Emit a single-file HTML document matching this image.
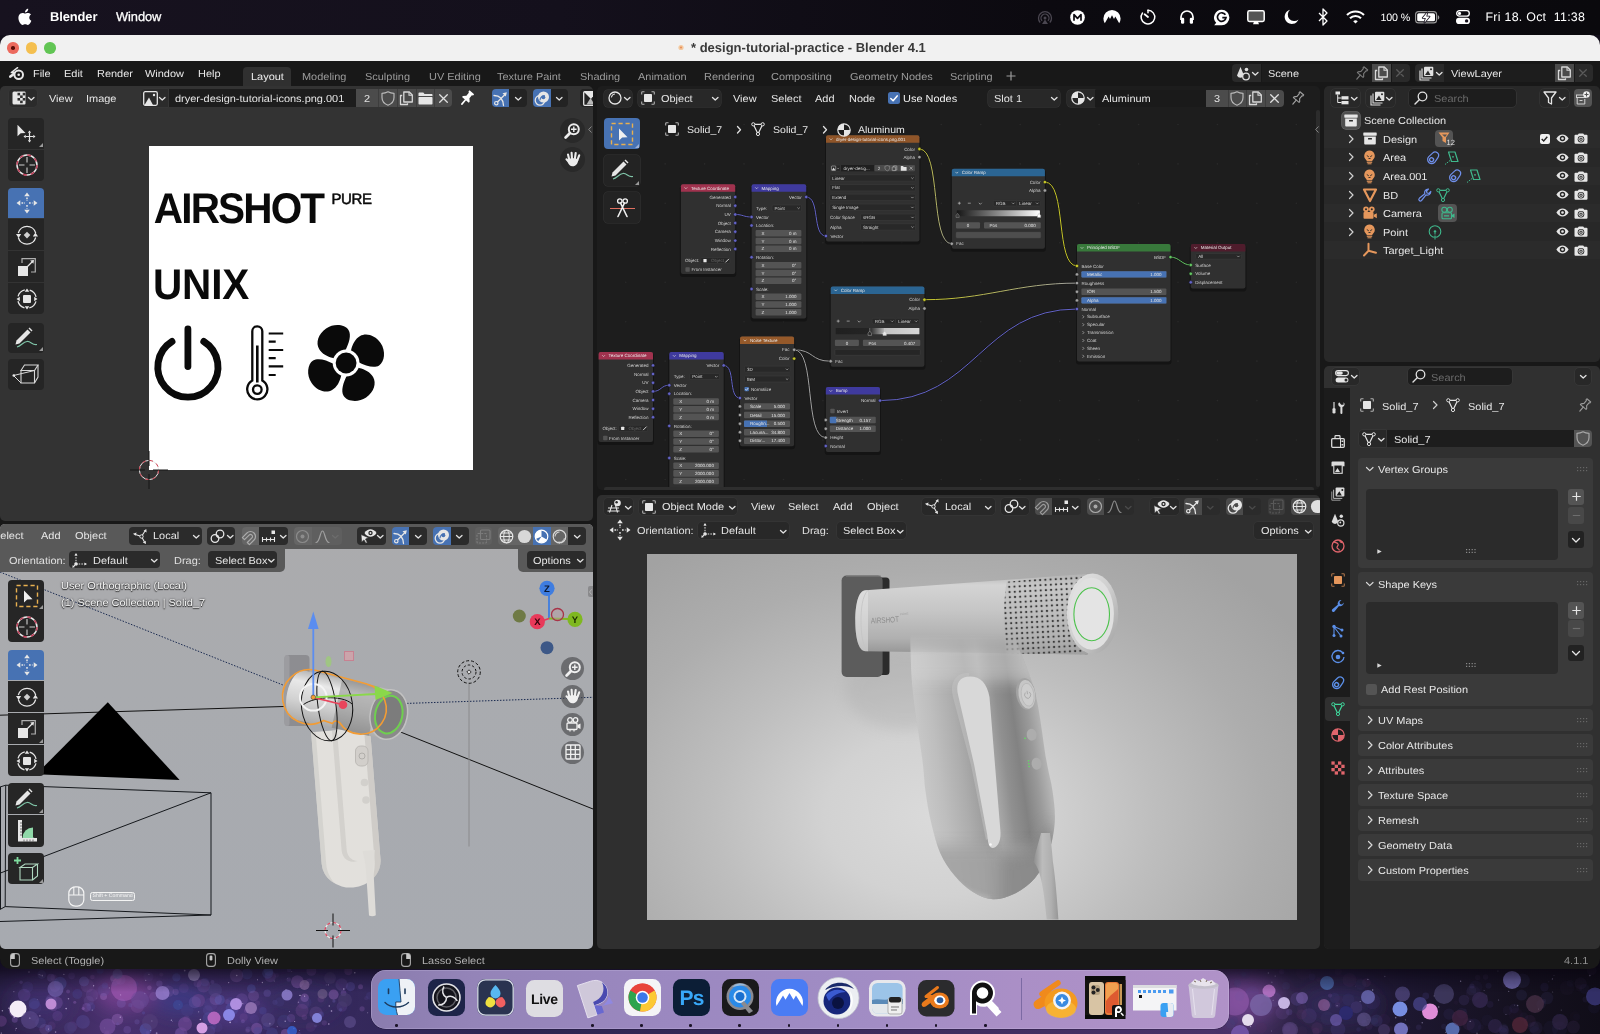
<!DOCTYPE html>
<html lang="en"><head><meta charset="utf-8"><title>design-tutorial-practice - Blender 4.1</title>
<style>
*{box-sizing:border-box;margin:0;padding:0}
html,body{width:1600px;height:1034px;overflow:hidden;background:#181818}
body{position:relative;font-family:"Liberation Sans",sans-serif;font-size:11px;color:#e0e0e0;text-rendering:geometricPrecision}
.a{position:absolute}
.t{position:absolute;white-space:nowrap;line-height:1}
.u{transform:scaleX(1.075);transform-origin:0 0}
svg{position:absolute;overflow:visible}
.area{position:absolute;overflow:hidden;border-radius:5px}
#root{position:absolute;left:0;top:0;width:1600px;height:1034px;will-change:transform}
</style></head><body><div id="root">

<!-- desktop wallpaper -->
<div class="a" id="wall" style="left:0;top:0;width:1600px;height:1034px;background:#120e1a"></div>
<!-- mac menu bar -->
<div class="a" id="macbar" style="left:0;top:0;width:1600px;height:35px;background:linear-gradient(90deg,#17121f 0%,#14101c 35%,#0c0a10 65%,#0a090d 100%)"></div>
<svg style="left:17px;top:8px" width="15" height="18" viewBox="0 0 15 18"><path fill="#fff" d="M12.3 9.5c0-2 1.6-2.9 1.7-3-0.9-1.4-2.4-1.6-2.9-1.6-1.2-.1-2.4.7-3 .7-.6 0-1.6-.7-2.6-.7C4.100 4.900 2.800 5.700 2.100 6.900.700 9.400 1.700 13 3.100 15c.7 1 1.500 2.100 2.500 2 1-.04 1.400-.65 2.600-.65s1.550.65 2.600.63c1.080-.02 1.760-.98 2.420-1.970.760-1.130 1.080-2.220 1.100-2.280-.03-.01-2.100-.8-2.120-3.230zM10.400 3.300c.55-.67.920-1.600.820-2.500-.790.030-1.750.530-2.320 1.190-.510.590-.950 1.530-.830 2.430.880.070 1.780-.450 2.330-1.120z"/></svg>
<div class="t" style="left:50px;top:11px;font-size:12.9px;font-weight:bold;color:#fff;letter-spacing:-.1px">Blender</div>
<div class="t" style="left:116px;top:11px;font-size:12.9px;color:#fff;letter-spacing:-.1px;-webkit-text-stroke:.25px #fff">Window</div>
<!-- status icons -->
<svg style="left:1037px;top:10px" width="16" height="15" viewBox="0 0 16 15" fill="none" stroke="#4a4650" stroke-width="1.3"><path d="M3.2 12.500A6.500 6.500 0 1 1 12.800 12.500"/><path d="M5.100 10.800A4 4 0 1 1 10.900 10.800"/><circle cx="8" cy="8" r="1.500" fill="#4a4650" stroke="none"/><path d="M8 9.500L11 14H5z" fill="#4a4650" stroke="none"/></svg>
<svg style="left:1070px;top:10px" width="15" height="15" viewBox="0 0 15 15"><circle cx="7.500" cy="7.500" r="7.300" fill="#fff"/><path d="M4 10.800V4.600L7.500 8.300 11 4.600v6.200" fill="none" stroke="#0c0a10" stroke-width="1.700" stroke-linejoin="round"/></svg>
<svg style="left:1103px;top:9px" width="18" height="15" viewBox="0 0 18 15"><path fill="#fff" d="M1.800 14.200A8.600 8.600 0 0 1 .4 9.500 8.600 8.600 0 0 1 9 .9a8.600 8.600 0 0 1 8.600 8.600 8.600 8.600 0 0 1-1.400 4.700L12.300 7.600 11 9.900 9 6.300 7 9.900 5.700 7.600z"/></svg>
<svg style="left:1140px;top:9px" width="16" height="16" viewBox="0 0 16 16" fill="none" stroke="#fff" stroke-width="1.500" stroke-linecap="round"><path d="M8 1.300A6.800 6.800 0 1 1 2.500 4"/><path d="M8 1.300v2.500"/><path d="M8 8L4.600 5.200" stroke-width="1.800"/></svg>
<svg style="left:1179px;top:9px" width="16" height="16" viewBox="0 0 16 16" fill="none" stroke="#fff"><path d="M2 11V8a6 6 0 0 1 12 0v3" stroke-width="1.700"/><rect x="2" y="8.800" width="3.200" height="6" rx="1.300" fill="#fff" stroke="none"/><rect x="10.800" y="8.800" width="3.200" height="6" rx="1.300" fill="#fff" stroke="none"/></svg>
<svg style="left:1213px;top:9px" width="17" height="17" viewBox="0 0 17 17"><path fill="#fff" d="M8.700.8a7.700 7.700 0 1 1 0 15.400H1.200l2-2.400A7.700 7.700 0 0 1 8.700.8z"/><path d="M12.400 5.800A4.300 4.300 0 1 0 13 8.700H9.300" fill="none" stroke="#0c0a10" stroke-width="1.700"/></svg>
<svg style="left:1247px;top:10px" width="18" height="15" viewBox="0 0 18 15"><rect x=".8" y=".8" width="16.400" height="10.600" rx="1.600" fill="#555" stroke="#fff" stroke-width="1.500"/><path d="M6 14.300h6l-1-2.600H7z" fill="#fff"/></svg>
<svg style="left:1284px;top:9px" width="15" height="16" viewBox="0 0 15 16"><path fill="#fff" d="M6 .8A7.200 7.200 0 1 0 14.500 10.500 6.400 6.400 0 0 1 6 .8z"/></svg>
<svg style="left:1318px;top:8px" width="10" height="18" viewBox="0 0 10 18" fill="none" stroke="#fff" stroke-width="1.300" stroke-linejoin="round"><path d="M1 5l8 8-4 4V1l4 4-8 8"/></svg>
<svg style="left:1346px;top:10px" width="19" height="14" viewBox="0 0 19 14" fill="none" stroke="#fff" stroke-width="2.100" stroke-linecap="butt"><path d="M1 5a12 12 0 0 1 17 0"/><path d="M4 8.200a7.800 7.800 0 0 1 11 0"/><path d="M7.200 11.300L9.500 13.600 11.800 11.300a3.300 3.300 0 0 0-4.600 0z" fill="#fff" stroke="none"/></svg>
<div class="t" style="left:1380.5px;top:13.2px;font-size:10.7px;color:#fff;letter-spacing:-.15px">100 %</div>
<svg style="left:1415px;top:11px" width="25" height="13" viewBox="0 0 25 13"><rect x=".6" y=".6" width="21" height="11.300" rx="3" fill="none" stroke="#9a9a9a" stroke-width="1.100"/><rect x="2.200" y="2.200" width="17.800" height="8.100" rx="1.600" fill="#fff"/><path d="M22.800 4.300v4.400c.9-.3 1.500-1.200 1.500-2.200s-.6-1.900-1.500-2.200z" fill="#9a9a9a"/><path d="M12.400 1.200L7.600 7h3.200l-1.400 4.800L14.600 5.600h-3.300z" fill="#16101c" stroke="#16101c" stroke-width="1.600" stroke-linejoin="round"/><path d="M12.400 1.200L7.600 7h3.200l-1.400 4.800L14.600 5.600h-3.300z" fill="#fff"/></svg>
<svg style="left:1456px;top:10px" width="14" height="14" viewBox="0 0 14 14"><rect x=".7" y=".7" width="12.600" height="5.400" rx="2.700" fill="none" stroke="#fff" stroke-width="1.300"/><circle cx="3.500" cy="3.400" r="1.600" fill="#fff"/><rect x="0" y="7.800" width="14" height="6.200" rx="3.100" fill="#fff"/><circle cx="10.600" cy="10.900" r="1.700" fill="#16101c"/></svg>
<div class="t" style="left:1485.5px;top:11.4px;font-size:12.4px;color:#fff;letter-spacing:.27px">Fri 18. Oct&nbsp; 11:38</div>
<!-- window title bar -->
<div class="a" id="titlebar" style="left:0;top:35px;width:1600px;height:27px;background:#f1f1f1;border-radius:10px 10px 0 0"></div>
<div class="a" style="left:7.4px;top:42.3px;width:11.4px;height:11.4px;border-radius:50%;background:#ec6a5e"></div>
<div class="a" style="left:11.3px;top:46.2px;width:3.6px;height:3.6px;border-radius:50%;background:#5a0d08"></div>
<div class="a" style="left:25.7px;top:42.3px;width:11.4px;height:11.4px;border-radius:50%;background:#f4bf4f"></div>
<div class="a" style="left:44.3px;top:42.3px;width:11.4px;height:11.4px;border-radius:50%;background:#61c554"></div>
<svg style="left:676px;top:42px" width="10" height="10" viewBox="0 0 10 10"><circle cx="5" cy="5.500" r="2.600" fill="#f3c9a0"/><circle cx="5" cy="5.500" r="1.100" fill="#e8905a"/></svg>
<div class="t" id="title" style="left:691px;top:41px;font-size:13px;font-weight:bold;color:#3a3a3a">* design-tutorial-practice - Blender 4.1</div>

<!-- wallpaper strip -->
<div class="a" style="left:0;top:958px;width:1600px;height:76px;overflow:hidden;z-index:0;background:linear-gradient(90deg,#2b2148 0%,#4a3270 7%,#3b2c62 14%,#35295c 22%,#2c2450 32%,#3a2a5a 50%,#4a3268 77%,#2e2446 81%,#1d1730 88%,#15111f 95%,#100d18 100%)">
<svg style="left:0;top:0" width="1600" height="76" viewBox="0 958 1600 76"><defs><filter id="gl" x="-50%" y="-50%" width="200%" height="200%"><feGaussianBlur stdDeviation="9"/></filter></defs><g filter="url(#gl)"><ellipse cx="125" cy="992" rx="30" ry="18" fill="#9a4aa8" opacity=".5"/><ellipse cx="180" cy="1000" rx="28" ry="16" fill="#3a48a0" opacity=".45"/><ellipse cx="235" cy="1012" rx="30" ry="16" fill="#6a4ab0" opacity=".4"/><ellipse cx="40" cy="1005" rx="30" ry="20" fill="#4a3a88" opacity=".4"/><ellipse cx="300" cy="1000" rx="40" ry="20" fill="#3a2e68" opacity=".4"/><ellipse cx="1250" cy="1000" rx="30" ry="22" fill="#8a50a8" opacity=".5"/><ellipse cx="1340" cy="1005" rx="40" ry="20" fill="#3a3070" opacity=".4"/></g><circle cx="120.47" cy="979.65" r="5.08" fill="#7a5cb0" opacity="0.35"/><circle cx="35.02" cy="1007.3" r="6.5" fill="#5a50a0" opacity="0.13"/><circle cx="161.32" cy="974.47" r="2" fill="#a070c0" opacity="0.14"/><circle cx="210.35" cy="1030.64" r="4.97" fill="#6a58a8" opacity="0.28"/><circle cx="147.57" cy="1032.48" r="1.76" fill="#8a60b8" opacity="0.2"/><circle cx="53.66" cy="977.54" r="3.2" fill="#8a60b8" opacity="0.15"/><circle cx="212.49" cy="982.02" r="2.04" fill="#7a5cb0" opacity="0.28"/><circle cx="230.27" cy="1001.77" r="4.42" fill="#4a4898" opacity="0.25"/><circle cx="343.52" cy="993.14" r="2.87" fill="#8a60b8" opacity="0.32"/><circle cx="90.8" cy="1006.76" r="4.39" fill="#4a4898" opacity="0.32"/><circle cx="107.11" cy="1032.73" r="2.15" fill="#a070c0" opacity="0.17"/><circle cx="127.24" cy="1029.73" r="3.82" fill="#7a5cb0" opacity="0.33"/><circle cx="213.17" cy="1026.03" r="3.23" fill="#4a4898" opacity="0.29"/><circle cx="215.72" cy="999.2" r="6.12" fill="#9a6ac0" opacity="0.25"/><circle cx="247.06" cy="973.88" r="5.36" fill="#5c6ac8" opacity="0.2"/><circle cx="143.51" cy="1012.79" r="1.62" fill="#5c6ac8" opacity="0.22"/><circle cx="227.26" cy="1001.6" r="2.7" fill="#9a6ac0" opacity="0.16"/><circle cx="92.11" cy="995.02" r="6.29" fill="#7a5cb0" opacity="0.17"/><circle cx="149.41" cy="987.78" r="2.25" fill="#a070c0" opacity="0.36"/><circle cx="103.57" cy="996.58" r="3.47" fill="#a070c0" opacity="0.39"/><circle cx="56.14" cy="981.28" r="2.78" fill="#5a50a0" opacity="0.12"/><circle cx="309.17" cy="981.67" r="3.05" fill="#8a60b8" opacity="0.24"/><circle cx="137.36" cy="1006.25" r="6.74" fill="#7c4c98" opacity="0.39"/><circle cx="243.65" cy="1017.35" r="4.01" fill="#7c4c98" opacity="0.23"/><circle cx="148.42" cy="976.63" r="4.99" fill="#6a58a8" opacity="0.17"/><circle cx="366.3" cy="998.2" r="2.1" fill="#6a58a8" opacity="0.15"/><circle cx="210.84" cy="1004.34" r="6.72" fill="#6a58a8" opacity="0.14"/><circle cx="77.36" cy="994.08" r="4.99" fill="#4a4898" opacity="0.29"/><circle cx="176.38" cy="977.38" r="4.18" fill="#5c6ac8" opacity="0.25"/><circle cx="116.01" cy="979.22" r="5.62" fill="#9a6ac0" opacity="0.25"/><circle cx="257.45" cy="1003.05" r="2.63" fill="#7c4c98" opacity="0.22"/><circle cx="256.71" cy="1028.51" r="5.67" fill="#9a6ac0" opacity="0.39"/><circle cx="321.16" cy="1014.56" r="2.94" fill="#4a4898" opacity="0.37"/><circle cx="132.32" cy="984.26" r="4.48" fill="#7c4c98" opacity="0.21"/><circle cx="82.97" cy="1021.94" r="6.92" fill="#5a50a0" opacity="0.35"/><circle cx="304.42" cy="1017.35" r="2.75" fill="#7c4c98" opacity="0.26"/><circle cx="271.93" cy="1033.33" r="5.85" fill="#5c6ac8" opacity="0.19"/><circle cx="257.62" cy="1031.22" r="3.96" fill="#4a4898" opacity="0.39"/><circle cx="135.64" cy="984.11" r="2.75" fill="#5a50a0" opacity="0.21"/><circle cx="179.55" cy="1033.06" r="4.86" fill="#6a58a8" opacity="0.25"/><circle cx="242.91" cy="1021.18" r="1.97" fill="#7a5cb0" opacity="0.37"/><circle cx="291.02" cy="1018.01" r="4.13" fill="#8a60b8" opacity="0.24"/><circle cx="236.53" cy="975.55" r="6.7" fill="#a070c0" opacity="0.25"/><circle cx="276.53" cy="975.43" r="2.37" fill="#8a60b8" opacity="0.13"/><circle cx="219.78" cy="999.78" r="5.11" fill="#5c6ac8" opacity="0.3"/><circle cx="130.35" cy="1005.11" r="2.22" fill="#6a58a8" opacity="0.34"/><circle cx="270.21" cy="976.58" r="5.62" fill="#8a60b8" opacity="0.24"/><circle cx="324.29" cy="1022.87" r="2.66" fill="#9a6ac0" opacity="0.18"/><circle cx="186.43" cy="1018.88" r="3.29" fill="#7c4c98" opacity="0.24"/><circle cx="48.76" cy="1028.24" r="3.45" fill="#5c6ac8" opacity="0.31"/><circle cx="303.2" cy="1003.07" r="6.05" fill="#7c4c98" opacity="0.16"/><circle cx="56.48" cy="1002.68" r="6.3" fill="#8a60b8" opacity="0.29"/><circle cx="288.69" cy="979.59" r="2.28" fill="#7a5cb0" opacity="0.28"/><circle cx="121.27" cy="1003.17" r="4.55" fill="#7a5cb0" opacity="0.37"/><circle cx="21.14" cy="982.24" r="1.73" fill="#7a5cb0" opacity="0.26"/><circle cx="208.96" cy="1018.64" r="6.52" fill="#5c6ac8" opacity="0.21"/><circle cx="362.09" cy="1008.79" r="2.6" fill="#9a6ac0" opacity="0.25"/><circle cx="198.38" cy="1000.59" r="6.68" fill="#7c4c98" opacity="0.37"/><circle cx="350.49" cy="986.61" r="4.58" fill="#5a50a0" opacity="0.36"/><circle cx="51.01" cy="977.78" r="3.93" fill="#7a5cb0" opacity="0.31"/><circle cx="159.34" cy="983.61" r="3.17" fill="#7a5cb0" opacity="0.37"/><circle cx="57.45" cy="1015.83" r="5.13" fill="#8a60b8" opacity="0.19"/><circle cx="51.06" cy="999.94" r="5.61" fill="#7a5cb0" opacity="0.23"/><circle cx="181.26" cy="1033.35" r="6.08" fill="#8a60b8" opacity="0.32"/><circle cx="369.8" cy="995.84" r="3.82" fill="#4a4898" opacity="0.21"/><circle cx="268.64" cy="971.25" r="4.55" fill="#5c6ac8" opacity="0.32"/><circle cx="142.98" cy="1003.12" r="3.12" fill="#7a5cb0" opacity="0.15"/><circle cx="341.7" cy="984.63" r="6.32" fill="#7a5cb0" opacity="0.19"/><circle cx="14.73" cy="1019.86" r="2.99" fill="#8a60b8" opacity="0.35"/><circle cx="316.05" cy="1013.26" r="6.7" fill="#a070c0" opacity="0.16"/><circle cx="341.93" cy="1006.52" r="5.35" fill="#7a5cb0" opacity="0.2"/><circle cx="297.45" cy="981.73" r="6.42" fill="#9a6ac0" opacity="0.38"/><circle cx="236.01" cy="1021.3" r="1.96" fill="#5a50a0" opacity="0.14"/><circle cx="320.95" cy="999.04" r="3.37" fill="#7c4c98" opacity="0.24"/><circle cx="340.54" cy="1009.79" r="1.74" fill="#5a50a0" opacity="0.38"/><circle cx="360.55" cy="986.76" r="2.5" fill="#9a6ac0" opacity="0.3"/><circle cx="197.56" cy="983.18" r="3.95" fill="#8a60b8" opacity="0.2"/><circle cx="298.97" cy="1033.65" r="1.7" fill="#6a58a8" opacity="0.33"/><circle cx="204.99" cy="982.13" r="4.11" fill="#5c6ac8" opacity="0.15"/><circle cx="304.64" cy="997.66" r="4.22" fill="#a070c0" opacity="0.39"/><circle cx="114.5" cy="983.77" r="2.76" fill="#5a50a0" opacity="0.35"/><circle cx="262.9" cy="1010.7" r="3.73" fill="#4a4898" opacity="0.39"/><circle cx="311.36" cy="970.91" r="4.94" fill="#9a6ac0" opacity="0.24"/><circle cx="20.61" cy="1012.57" r="3.59" fill="#7c4c98" opacity="0.31"/><circle cx="104.88" cy="985.5" r="3.11" fill="#5c6ac8" opacity="0.17"/><circle cx="100.08" cy="970.23" r="3.5" fill="#4a4898" opacity="0.39"/><circle cx="203.51" cy="985.64" r="6.81" fill="#9a6ac0" opacity="0.18"/><circle cx="68.06" cy="991.46" r="1.96" fill="#9a6ac0" opacity="0.26"/><circle cx="74.76" cy="1002.3" r="1.53" fill="#9a6ac0" opacity="0.35"/><circle cx="53.52" cy="1007.56" r="3.67" fill="#9a6ac0" opacity="0.21"/><circle cx="86.61" cy="1007.48" r="4.41" fill="#8a60b8" opacity="0.3"/><circle cx="266.35" cy="1026.26" r="3.64" fill="#4a4898" opacity="0.32"/><circle cx="183.84" cy="988.19" r="4.9" fill="#8a60b8" opacity="0.13"/><circle cx="310.73" cy="1027.08" r="4.95" fill="#7c4c98" opacity="0.16"/><circle cx="194.84" cy="1002.28" r="6.09" fill="#6a58a8" opacity="0.35"/><circle cx="217.27" cy="1027.14" r="5.26" fill="#5a50a0" opacity="0.14"/><circle cx="15.57" cy="1010.78" r="6.78" fill="#a070c0" opacity="0.35"/><circle cx="207.77" cy="1010.18" r="4.94" fill="#5a50a0" opacity="0.26"/><circle cx="1.23" cy="1021.05" r="5.62" fill="#7c4c98" opacity="0.37"/><circle cx="34.2" cy="1003.66" r="5.6" fill="#5c6ac8" opacity="0.19"/><circle cx="27.7" cy="987" r="5.51" fill="#5a50a0" opacity="0.18"/><circle cx="241.77" cy="999.46" r="6.15" fill="#7a5cb0" opacity="0.25"/><circle cx="254.34" cy="1019.09" r="4.89" fill="#5a50a0" opacity="0.14"/><circle cx="54.84" cy="986.25" r="5.59" fill="#9a6ac0" opacity="0.29"/><circle cx="49.64" cy="1000.87" r="4.17" fill="#7a5cb0" opacity="0.31"/><circle cx="251.36" cy="988.61" r="4.34" fill="#5c6ac8" opacity="0.25"/><circle cx="285.39" cy="1033.57" r="4.52" fill="#9a6ac0" opacity="0.39"/><circle cx="348.29" cy="971.12" r="4.02" fill="#7c4c98" opacity="0.39"/><circle cx="167.2" cy="987.19" r="2.65" fill="#5a50a0" opacity="0.14"/><circle cx="33.59" cy="1017.84" r="2.94" fill="#4a4898" opacity="0.16"/><circle cx="305.12" cy="1002.56" r="6.38" fill="#4a4898" opacity="0.18"/><circle cx="333.95" cy="1001.11" r="1.64" fill="#6a58a8" opacity="0.39"/><circle cx="253.55" cy="995.95" r="5.5" fill="#a070c0" opacity="0.22"/><circle cx="117.58" cy="1023.77" r="1.51" fill="#4a4898" opacity="0.35"/><circle cx="44.66" cy="1029.29" r="5.42" fill="#9a6ac0" opacity="0.19"/><circle cx="24.17" cy="994.97" r="6.28" fill="#7a5cb0" opacity="0.22"/><circle cx="159.24" cy="987.61" r="1.77" fill="#7a5cb0" opacity="0.13"/><circle cx="246.26" cy="1010.64" r="2.32" fill="#9a6ac0" opacity="0.24"/><circle cx="117.4" cy="1019.48" r="5.82" fill="#a070c0" opacity="0.37"/><circle cx="302.05" cy="1010.38" r="6.52" fill="#7c4c98" opacity="0.27"/><circle cx="267.68" cy="973.17" r="5.53" fill="#5c6ac8" opacity="0.29"/><circle cx="51.55" cy="1025.65" r="4.17" fill="#7c4c98" opacity="0.16"/><circle cx="175.65" cy="991.99" r="3.14" fill="#9a6ac0" opacity="0.23"/><circle cx="88.78" cy="1000.92" r="5.18" fill="#7a5cb0" opacity="0.17"/><circle cx="60.14" cy="983.3" r="6.48" fill="#5c6ac8" opacity="0.27"/><circle cx="168.51" cy="991.3" r="5.68" fill="#a070c0" opacity="0.16"/><circle cx="71.58" cy="975.81" r="3.38" fill="#7a5cb0" opacity="0.21"/><circle cx="137.01" cy="1021.8" r="2.61" fill="#6a58a8" opacity="0.33"/><circle cx="153.55" cy="996.49" r="4.38" fill="#a070c0" opacity="0.2"/><circle cx="279.79" cy="1001.88" r="4.66" fill="#4a4898" opacity="0.16"/><circle cx="187.26" cy="1010.3" r="6.25" fill="#5a50a0" opacity="0.15"/><circle cx="333.61" cy="994.61" r="5.05" fill="#a070c0" opacity="0.39"/><circle cx="315.71" cy="1025.87" r="1.62" fill="#6a58a8" opacity="0.24"/><circle cx="284.09" cy="1021.47" r="6.83" fill="#5c6ac8" opacity="0.12"/><circle cx="145.65" cy="1029.32" r="6.04" fill="#5c6ac8" opacity="0.39"/><circle cx="92.43" cy="976.98" r="2.35" fill="#7c4c98" opacity="0.39"/><circle cx="40.51" cy="1022.83" r="5.36" fill="#5c6ac8" opacity="0.14"/><circle cx="288.99" cy="970.09" r="2.19" fill="#6a58a8" opacity="0.3"/><circle cx="113.01" cy="978.19" r="2.88" fill="#a070c0" opacity="0.32"/><circle cx="41.71" cy="974.5" r="4.38" fill="#5a50a0" opacity="0.23"/><circle cx="83.17" cy="1008.47" r="1.56" fill="#9a6ac0" opacity="0.4"/><circle cx="103.64" cy="990.25" r="6.12" fill="#5a50a0" opacity="0.25"/><circle cx="87.33" cy="985.81" r="6.78" fill="#9a6ac0" opacity="0.14"/><circle cx="72.21" cy="1026.63" r="5.06" fill="#7a5cb0" opacity="0.19"/><circle cx="248.26" cy="1029.21" r="2.75" fill="#6a58a8" opacity="0.31"/><circle cx="267.22" cy="993.19" r="3.68" fill="#6a58a8" opacity="0.34"/><circle cx="274.96" cy="1002.31" r="2.63" fill="#5a50a0" opacity="0.21"/><circle cx="305.04" cy="984.77" r="2.72" fill="#9a6ac0" opacity="0.15"/><circle cx="231.98" cy="1009.05" r="6.43" fill="#5c6ac8" opacity="0.24"/><circle cx="247.49" cy="1030.72" r="2.31" fill="#a070c0" opacity="0.14"/><circle cx="8.79" cy="1008.15" r="0.61" fill="#d8c8f0" opacity="0.75"/><circle cx="68.49" cy="998.78" r="0.76" fill="#d8c8f0" opacity="0.56"/><circle cx="42.11" cy="975.08" r="0.48" fill="#d8c8f0" opacity="0.5"/><circle cx="242.72" cy="1003.59" r="0.63" fill="#d8c8f0" opacity="0.56"/><circle cx="269.84" cy="1023.7" r="0.89" fill="#d8c8f0" opacity="0.62"/><circle cx="40.53" cy="975.01" r="0.44" fill="#d8c8f0" opacity="0.61"/><circle cx="329.28" cy="1005.91" r="0.78" fill="#d8c8f0" opacity="0.59"/><circle cx="285.97" cy="989.76" r="0.8" fill="#d8c8f0" opacity="0.44"/><circle cx="262.36" cy="982.53" r="0.67" fill="#d8c8f0" opacity="0.62"/><circle cx="120.27" cy="1017.19" r="0.64" fill="#d8c8f0" opacity="0.72"/><circle cx="92.26" cy="1010.03" r="0.6" fill="#d8c8f0" opacity="0.59"/><circle cx="172.63" cy="1021.41" r="0.43" fill="#d8c8f0" opacity="0.5"/><circle cx="23.38" cy="1008.76" r="0.58" fill="#d8c8f0" opacity="0.57"/><circle cx="354.8" cy="972.79" r="0.77" fill="#d8c8f0" opacity="0.74"/><circle cx="343.81" cy="989.03" r="0.76" fill="#d8c8f0" opacity="0.7"/><circle cx="299.7" cy="1030.58" r="0.43" fill="#d8c8f0" opacity="0.81"/><circle cx="39.9" cy="1015.8" r="0.63" fill="#d8c8f0" opacity="0.79"/><circle cx="293.81" cy="1028.47" r="0.81" fill="#d8c8f0" opacity="0.47"/><circle cx="184.71" cy="970.56" r="0.87" fill="#d8c8f0" opacity="0.55"/><circle cx="257.46" cy="979.68" r="0.52" fill="#d8c8f0" opacity="0.83"/><circle cx="171.41" cy="1020.17" r="0.7" fill="#d8c8f0" opacity="0.66"/><circle cx="145.71" cy="980.24" r="0.6" fill="#d8c8f0" opacity="0.72"/><circle cx="179.19" cy="1004.86" r="0.48" fill="#d8c8f0" opacity="0.61"/><circle cx="39.14" cy="974.62" r="0.71" fill="#d8c8f0" opacity="0.5"/><circle cx="156.63" cy="1033.26" r="0.89" fill="#d8c8f0" opacity="0.49"/><circle cx="49.45" cy="999.5" r="0.85" fill="#d8c8f0" opacity="0.52"/><circle cx="200.35" cy="1019.53" r="0.78" fill="#d8c8f0" opacity="0.79"/><circle cx="109.34" cy="987.88" r="0.53" fill="#d8c8f0" opacity="0.53"/><circle cx="96.84" cy="998.12" r="0.49" fill="#d8c8f0" opacity="0.52"/><circle cx="104.66" cy="1028.08" r="0.49" fill="#d8c8f0" opacity="0.43"/><circle cx="93.62" cy="985.74" r="0.66" fill="#d8c8f0" opacity="0.72"/><circle cx="37.4" cy="999.69" r="0.42" fill="#d8c8f0" opacity="0.4"/><circle cx="328.41" cy="984.79" r="0.62" fill="#d8c8f0" opacity="0.59"/><circle cx="326.2" cy="984.91" r="0.43" fill="#d8c8f0" opacity="0.7"/><circle cx="307.99" cy="982.43" r="0.44" fill="#d8c8f0" opacity="0.66"/><circle cx="66.13" cy="1008.59" r="0.79" fill="#d8c8f0" opacity="0.73"/><circle cx="2.36" cy="1010.8" r="0.75" fill="#d8c8f0" opacity="0.57"/><circle cx="13.93" cy="991.76" r="0.42" fill="#d8c8f0" opacity="0.9"/><circle cx="14.22" cy="1016.86" r="0.86" fill="#d8c8f0" opacity="0.81"/><circle cx="304.61" cy="996.18" r="0.59" fill="#d8c8f0" opacity="0.71"/><circle cx="28.99" cy="972.01" r="0.65" fill="#d8c8f0" opacity="0.64"/><circle cx="151.84" cy="1020.93" r="0.73" fill="#d8c8f0" opacity="0.48"/><circle cx="198.65" cy="1011.8" r="0.6" fill="#d8c8f0" opacity="0.54"/><circle cx="367.62" cy="1012.74" r="0.61" fill="#d8c8f0" opacity="0.43"/><circle cx="277.27" cy="1026.56" r="0.61" fill="#d8c8f0" opacity="0.41"/><circle cx="285.2" cy="1021.34" r="0.72" fill="#d8c8f0" opacity="0.6"/><circle cx="150.65" cy="1030.29" r="0.62" fill="#d8c8f0" opacity="0.48"/><circle cx="42.24" cy="975.79" r="0.69" fill="#d8c8f0" opacity="0.58"/><circle cx="287.58" cy="978.32" r="0.43" fill="#d8c8f0" opacity="0.47"/><circle cx="300.01" cy="995.39" r="0.69" fill="#d8c8f0" opacity="0.86"/><circle cx="274.26" cy="980.99" r="0.57" fill="#d8c8f0" opacity="0.48"/><circle cx="63.9" cy="974.29" r="0.59" fill="#d8c8f0" opacity="0.78"/><circle cx="294.68" cy="1021.5" r="0.55" fill="#d8c8f0" opacity="0.82"/><circle cx="16.18" cy="1028.42" r="0.56" fill="#d8c8f0" opacity="0.7"/><circle cx="236.73" cy="975.52" r="0.76" fill="#d8c8f0" opacity="0.74"/><circle cx="331.5" cy="1010.98" r="0.83" fill="#d8c8f0" opacity="0.71"/><circle cx="228.68" cy="982.55" r="0.64" fill="#d8c8f0" opacity="0.68"/><circle cx="15.52" cy="1030.07" r="0.48" fill="#d8c8f0" opacity="0.58"/><circle cx="55.6" cy="1032.12" r="0.81" fill="#d8c8f0" opacity="0.5"/><circle cx="328.8" cy="1023.92" r="0.74" fill="#d8c8f0" opacity="0.73"/><circle cx="120.6" cy="994.95" r="0.63" fill="#d8c8f0" opacity="0.82"/><circle cx="289.45" cy="1011.54" r="0.55" fill="#d8c8f0" opacity="0.52"/><circle cx="144.79" cy="993.52" r="0.65" fill="#d8c8f0" opacity="0.49"/><circle cx="1.31" cy="1033.11" r="0.63" fill="#d8c8f0" opacity="0.62"/><circle cx="230.11" cy="1022.41" r="0.82" fill="#d8c8f0" opacity="0.81"/><circle cx="148.93" cy="974.3" r="0.58" fill="#d8c8f0" opacity="0.58"/><circle cx="298.45" cy="1002.28" r="0.73" fill="#d8c8f0" opacity="0.42"/><circle cx="48.46" cy="1029.02" r="0.56" fill="#d8c8f0" opacity="0.76"/><circle cx="29.75" cy="1018.13" r="0.85" fill="#d8c8f0" opacity="0.73"/><circle cx="291.74" cy="971.65" r="0.43" fill="#d8c8f0" opacity="0.71"/><circle cx="1485.63" cy="977.01" r="2.79" fill="#6a4a90" opacity="0.1"/><circle cx="1529.69" cy="1020.88" r="6.12" fill="#503060" opacity="0.15"/><circle cx="1252.37" cy="992.46" r="6.54" fill="#5a4890" opacity="0.19"/><circle cx="1456.23" cy="1027.92" r="4.74" fill="#3c3878" opacity="0.14"/><circle cx="1570.21" cy="983.33" r="3.58" fill="#44447c" opacity="0.06"/><circle cx="1366.48" cy="982.73" r="4.42" fill="#503060" opacity="0.27"/><circle cx="1480.84" cy="1027.31" r="3.01" fill="#3c3878" opacity="0.08"/><circle cx="1425.43" cy="1010.72" r="4.16" fill="#6a4a90" opacity="0.16"/><circle cx="1443.78" cy="1026.48" r="2.63" fill="#44447c" opacity="0.17"/><circle cx="1374.66" cy="1021.05" r="3.59" fill="#3c3878" opacity="0.19"/><circle cx="1362.01" cy="1018.94" r="4.65" fill="#5a4890" opacity="0.21"/><circle cx="1584.37" cy="988.97" r="5.1" fill="#3c3878" opacity="0.09"/><circle cx="1594.07" cy="1007.5" r="5.98" fill="#3c3878" opacity="0.09"/><circle cx="1505.93" cy="984.18" r="3.75" fill="#503060" opacity="0.11"/><circle cx="1418.72" cy="1027.31" r="2.79" fill="#5a4890" opacity="0.18"/><circle cx="1244.96" cy="973.48" r="5.4" fill="#3c3878" opacity="0.14"/><circle cx="1360.86" cy="984.35" r="5.5" fill="#44447c" opacity="0.12"/><circle cx="1364.24" cy="1023.02" r="2.95" fill="#4a4088" opacity="0.27"/><circle cx="1318.61" cy="979.56" r="2.57" fill="#503060" opacity="0.13"/><circle cx="1475.56" cy="987.26" r="6.87" fill="#4a4088" opacity="0.07"/><circle cx="1533.37" cy="1027.13" r="5.57" fill="#44447c" opacity="0.1"/><circle cx="1576.62" cy="1016.95" r="3.49" fill="#4a4088" opacity="0.04"/><circle cx="1425.73" cy="995.98" r="3.43" fill="#4a4088" opacity="0.22"/><circle cx="1267.03" cy="1009.21" r="5.94" fill="#5a4890" opacity="0.15"/><circle cx="1302.22" cy="1008.92" r="5.04" fill="#503060" opacity="0.2"/><circle cx="1456.1" cy="1002.55" r="2.38" fill="#503060" opacity="0.07"/><circle cx="1558.84" cy="1020.11" r="6.29" fill="#4a4088" opacity="0.08"/><circle cx="1390.43" cy="1028.38" r="2.48" fill="#503060" opacity="0.16"/><circle cx="1312.05" cy="976.74" r="3.39" fill="#4a4088" opacity="0.13"/><circle cx="1559.55" cy="1029.21" r="7.66" fill="#3c3878" opacity="0.11"/><circle cx="1326.95" cy="1005.44" r="4.62" fill="#44447c" opacity="0.3"/><circle cx="1337.97" cy="1029.43" r="7.37" fill="#4a4088" opacity="0.28"/><circle cx="1233.66" cy="986.66" r="3.42" fill="#503060" opacity="0.17"/><circle cx="1287.22" cy="1028.56" r="3.15" fill="#6a4a90" opacity="0.18"/><circle cx="1316.97" cy="1028.08" r="5.78" fill="#503060" opacity="0.31"/><circle cx="1541.05" cy="1004.33" r="4.83" fill="#44447c" opacity="0.12"/><circle cx="1547" cy="997.98" r="6.35" fill="#44447c" opacity="0.14"/><circle cx="1521.58" cy="995.06" r="5.51" fill="#44447c" opacity="0.16"/><circle cx="1281.79" cy="971.72" r="2.64" fill="#5a4890" opacity="0.19"/><circle cx="1280.77" cy="971.84" r="2.25" fill="#503060" opacity="0.26"/><circle cx="1243.86" cy="974.34" r="2.28" fill="#44447c" opacity="0.31"/><circle cx="1302.14" cy="1031.09" r="5.2" fill="#503060" opacity="0.12"/><circle cx="1550.82" cy="1028.52" r="7.67" fill="#4a4088" opacity="0.07"/><circle cx="1303.58" cy="972.17" r="7.7" fill="#503060" opacity="0.12"/><circle cx="1507.53" cy="1010.46" r="4.86" fill="#5a4890" opacity="0.07"/><circle cx="1509.74" cy="983.12" r="3.91" fill="#6a4a90" opacity="0.09"/><circle cx="1358.54" cy="1029.53" r="2.29" fill="#3c3878" opacity="0.27"/><circle cx="1514.16" cy="1008.53" r="4.86" fill="#3c3878" opacity="0.13"/><circle cx="1239.53" cy="996.43" r="4.62" fill="#4a4088" opacity="0.21"/><circle cx="1490.13" cy="1004.42" r="3.3" fill="#4a4088" opacity="0.13"/><circle cx="1334.8" cy="997.91" r="5.14" fill="#3c3878" opacity="0.25"/><circle cx="1591.77" cy="970.28" r="4.94" fill="#6a4a90" opacity="0.09"/><circle cx="1535.03" cy="1031.9" r="5.56" fill="#44447c" opacity="0.08"/><circle cx="1579.12" cy="988.16" r="3.29" fill="#503060" opacity="0.06"/><circle cx="1289.67" cy="1030.08" r="6.6" fill="#6a4a90" opacity="0.29"/><circle cx="1487.34" cy="1020.36" r="5.77" fill="#3c3878" opacity="0.07"/><circle cx="1573.4" cy="1027.08" r="6.47" fill="#6a4a90" opacity="0.12"/><circle cx="1237.36" cy="983.19" r="3.58" fill="#44447c" opacity="0.25"/><circle cx="1369.1" cy="1026.57" r="3.4" fill="#6a4a90" opacity="0.11"/><circle cx="1449" cy="1014.11" r="5.63" fill="#4a4088" opacity="0.12"/><circle cx="1349.52" cy="979.94" r="7.06" fill="#503060" opacity="0.2"/><circle cx="1348.28" cy="999.64" r="6.13" fill="#3c3878" opacity="0.21"/><circle cx="1274.89" cy="999.57" r="7.31" fill="#5a4890" opacity="0.23"/><circle cx="1327.5" cy="1018.3" r="6.96" fill="#44447c" opacity="0.13"/><circle cx="1286.03" cy="985.85" r="3.96" fill="#44447c" opacity="0.19"/><circle cx="1315.87" cy="1031.17" r="3.55" fill="#503060" opacity="0.31"/><circle cx="1289.23" cy="1012.11" r="3.17" fill="#5a4890" opacity="0.33"/><circle cx="1523.7" cy="1016.93" r="4.61" fill="#5a4890" opacity="0.06"/><circle cx="1567.04" cy="987.97" r="7.31" fill="#6a4a90" opacity="0.04"/><circle cx="1376.44" cy="1020.62" r="6.16" fill="#44447c" opacity="0.27"/><circle cx="1338.19" cy="971.42" r="3.54" fill="#503060" opacity="0.18"/><circle cx="1503.63" cy="1028.11" r="4.58" fill="#44447c" opacity="0.13"/><circle cx="1468.76" cy="1024.14" r="6.01" fill="#503060" opacity="0.19"/><circle cx="1515.95" cy="1014.81" r="7.11" fill="#503060" opacity="0.07"/><circle cx="1274.21" cy="997.68" r="3.56" fill="#503060" opacity="0.13"/><circle cx="1384.08" cy="1020.07" r="6.28" fill="#503060" opacity="0.11"/><circle cx="1543.99" cy="1000.9" r="2.12" fill="#6a4a90" opacity="0.1"/><circle cx="1473.93" cy="1025.87" r="7.37" fill="#3c3878" opacity="0.17"/><circle cx="1372.6" cy="1001.35" r="7.85" fill="#4a4088" opacity="0.13"/><circle cx="1309.05" cy="1015.84" r="7.71" fill="#5a4890" opacity="0.22"/><circle cx="1265.6" cy="1006.77" r="5.25" fill="#503060" opacity="0.23"/><circle cx="1233.99" cy="1020.72" r="4.22" fill="#3c3878" opacity="0.22"/><circle cx="1580.65" cy="983.45" r="6.11" fill="#6a4a90" opacity="0.08"/><circle cx="1574.96" cy="1016.66" r="5.68" fill="#503060" opacity="0.04"/><circle cx="1330.06" cy="995.58" r="2.08" fill="#6a4a90" opacity="0.29"/><circle cx="1461.83" cy="1013.19" r="5.48" fill="#4a4088" opacity="0.1"/><circle cx="1503.83" cy="1030.16" r="5.16" fill="#5a4890" opacity="0.18"/><circle cx="1585.44" cy="999.58" r="2.99" fill="#4a4088" opacity="0.1"/><circle cx="1463.96" cy="1000.03" r="5.37" fill="#5a4890" opacity="0.18"/><circle cx="1282.41" cy="1012.63" r="6.98" fill="#6a4a90" opacity="0.22"/><circle cx="1337.5" cy="1005.09" r="2.75" fill="#6a4a90" opacity="0.17"/><circle cx="1544.45" cy="987.12" r="4.26" fill="#3c3878" opacity="0.15"/><circle cx="1480.52" cy="1000.82" r="6.83" fill="#3c3878" opacity="0.11"/><circle cx="1471.44" cy="990.5" r="4.91" fill="#44447c" opacity="0.15"/><circle cx="1473.25" cy="993.2" r="7.57" fill="#6a4a90" opacity="0.07"/><circle cx="1535.98" cy="1027.97" r="6.7" fill="#5a4890" opacity="0.11"/><circle cx="1356.4" cy="1007.28" r="5.94" fill="#5a4890" opacity="0.28"/><circle cx="1472.02" cy="986" r="2.61" fill="#5a4890" opacity="0.18"/><circle cx="1297.07" cy="998.93" r="6.71" fill="#5a4890" opacity="0.31"/><circle cx="1522.5" cy="980.75" r="7.35" fill="#44447c" opacity="0.16"/><circle cx="1261.63" cy="1027.71" r="5.29" fill="#503060" opacity="0.32"/><circle cx="1301.42" cy="1014.34" r="5.18" fill="#503060" opacity="0.29"/><circle cx="1477.7" cy="977.49" r="2.71" fill="#6a4a90" opacity="0.09"/><circle cx="1279.83" cy="1001.56" r="2.35" fill="#6a4a90" opacity="0.32"/><circle cx="1488.56" cy="985.78" r="2.99" fill="#44447c" opacity="0.17"/><circle cx="1230.46" cy="1023.81" r="4.81" fill="#44447c" opacity="0.25"/><circle cx="1338.42" cy="999.81" r="4.55" fill="#503060" opacity="0.11"/><circle cx="1464.98" cy="1010.71" r="2.17" fill="#44447c" opacity="0.07"/><circle cx="1501.99" cy="1033.94" r="6.85" fill="#4a4088" opacity="0.12"/><circle cx="1408.3" cy="1027.44" r="2.2" fill="#503060" opacity="0.15"/><circle cx="1275.21" cy="976.05" r="0.66" fill="#c8c0e8" opacity="0.44"/><circle cx="1517.61" cy="1005.46" r="0.76" fill="#c8c0e8" opacity="0.41"/><circle cx="1355.21" cy="986.1" r="0.42" fill="#c8c0e8" opacity="0.42"/><circle cx="1360.13" cy="1001.6" r="0.53" fill="#c8c0e8" opacity="0.69"/><circle cx="1552.74" cy="992.07" r="0.48" fill="#c8c0e8" opacity="0.5"/><circle cx="1271.87" cy="982.31" r="0.69" fill="#c8c0e8" opacity="0.35"/><circle cx="1589.86" cy="975.6" r="0.8" fill="#c8c0e8" opacity="0.46"/><circle cx="1434.2" cy="995.99" r="0.63" fill="#c8c0e8" opacity="0.46"/><circle cx="1268.36" cy="972.97" r="0.73" fill="#c8c0e8" opacity="0.49"/><circle cx="1512.95" cy="973.85" r="0.6" fill="#c8c0e8" opacity="0.52"/><circle cx="1367.89" cy="979.41" r="0.67" fill="#c8c0e8" opacity="0.58"/><circle cx="1553.99" cy="975.31" r="0.42" fill="#c8c0e8" opacity="0.55"/><circle cx="1460.6" cy="981.13" r="0.67" fill="#c8c0e8" opacity="0.65"/><circle cx="1384.82" cy="976.44" r="0.77" fill="#c8c0e8" opacity="0.31"/><circle cx="1552.36" cy="978.88" r="0.52" fill="#c8c0e8" opacity="0.58"/><circle cx="1548.83" cy="981.83" r="0.41" fill="#c8c0e8" opacity="0.31"/><circle cx="1438.68" cy="1007.01" r="0.77" fill="#c8c0e8" opacity="0.5"/><circle cx="1422.24" cy="1022.78" r="0.71" fill="#c8c0e8" opacity="0.47"/><circle cx="1486.8" cy="995.9" r="0.43" fill="#c8c0e8" opacity="0.57"/><circle cx="1448.92" cy="1033.56" r="0.66" fill="#c8c0e8" opacity="0.36"/><circle cx="1514.4" cy="1005.12" r="0.43" fill="#c8c0e8" opacity="0.49"/><circle cx="1561.23" cy="1010.12" r="0.57" fill="#c8c0e8" opacity="0.3"/><circle cx="1477" cy="1033.15" r="0.74" fill="#c8c0e8" opacity="0.39"/><circle cx="1273.14" cy="1000.23" r="0.51" fill="#c8c0e8" opacity="0.53"/><circle cx="1395.69" cy="1017.63" r="0.77" fill="#c8c0e8" opacity="0.45"/><circle cx="1505.97" cy="1014.47" r="0.46" fill="#c8c0e8" opacity="0.6"/><circle cx="1337.05" cy="1005.68" r="0.6" fill="#c8c0e8" opacity="0.57"/><circle cx="1559.08" cy="1028.47" r="0.42" fill="#c8c0e8" opacity="0.31"/><circle cx="1250.52" cy="1026.53" r="0.67" fill="#c8c0e8" opacity="0.55"/><circle cx="1372.69" cy="990" r="0.64" fill="#c8c0e8" opacity="0.68"/><circle cx="1538.59" cy="1008.97" r="0.53" fill="#c8c0e8" opacity="0.68"/><circle cx="1498.73" cy="1000.07" r="0.47" fill="#c8c0e8" opacity="0.69"/><circle cx="1271.41" cy="1031.05" r="0.47" fill="#c8c0e8" opacity="0.62"/><circle cx="1405.43" cy="1019.8" r="0.58" fill="#c8c0e8" opacity="0.41"/><circle cx="1508.77" cy="991.37" r="0.51" fill="#c8c0e8" opacity="0.55"/><circle cx="1470.15" cy="1021.32" r="0.64" fill="#c8c0e8" opacity="0.65"/><circle cx="1497.96" cy="970.99" r="0.46" fill="#c8c0e8" opacity="0.63"/><circle cx="1445.5" cy="1032.49" r="0.5" fill="#c8c0e8" opacity="0.45"/><circle cx="1367.95" cy="1019.37" r="0.49" fill="#c8c0e8" opacity="0.48"/><circle cx="1484.14" cy="990.58" r="0.51" fill="#c8c0e8" opacity="0.36"/></svg>
<svg style="left:0;top:0" width="1600" height="76" viewBox="0 958 1600 76"><defs><filter id="bk" x="-10%" y="-10%" width="120%" height="120%"><feGaussianBlur stdDeviation=".7"/></filter></defs><g filter="url(#bk)"><circle cx="18" cy="1009" r="8.5" fill="#f4ecf7" opacity="1"/><circle cx="51" cy="1004" r="5.5" fill="#c48fd8" opacity="0.95"/><circle cx="55.5" cy="989" r="8" fill="#6f60aa" opacity="0.7"/><circle cx="30" cy="1020" r="9" fill="#5d4c8c" opacity="0.6"/><circle cx="124" cy="988" r="13" fill="#a85cb8" opacity="0.55"/><circle cx="162.5" cy="993" r="7" fill="#9880d0" opacity="0.8"/><circle cx="194" cy="975" r="6" fill="#9484b8" opacity="0.8"/><circle cx="236" cy="1004" r="6" fill="#b494e4" opacity="0.95"/><circle cx="251" cy="1008" r="6" fill="#9c7cba" opacity="0.8"/><circle cx="229" cy="1015" r="6" fill="#8c8aea" opacity="0.95"/><circle cx="214" cy="1018" r="6.5" fill="#ba6ac2" opacity="0.9"/><circle cx="202" cy="1028" r="5.5" fill="#dca4ea" opacity="0.95"/><circle cx="287" cy="995" r="5.5" fill="#9484d4" opacity="0.8"/><circle cx="317" cy="1018" r="5" fill="#8a8ae2" opacity="0.9"/><circle cx="304.5" cy="985" r="5" fill="#8c6ca2" opacity="0.7"/><circle cx="322.5" cy="994" r="5" fill="#74648a" opacity="0.6"/><circle cx="107.5" cy="1026.5" r="8" fill="#7c52a2" opacity="0.6"/><circle cx="185" cy="1024" r="7" fill="#744c9a" opacity="0.6"/><circle cx="84" cy="981.5" r="5" fill="#5c4c92" opacity="0.7"/><circle cx="117.5" cy="974" r="5" fill="#6c5ca2" opacity="0.7"/><circle cx="292" cy="1031" r="5" fill="#3464d4" opacity="0.8"/><circle cx="140" cy="1000" r="9" fill="#6a4a98" opacity="0.5"/><circle cx="268" cy="1020" r="7" fill="#5a4a8a" opacity="0.5"/><circle cx="345" cy="1000" r="7" fill="#4a3c6c" opacity="0.6"/><circle cx="350" cy="1022" r="6" fill="#6a5a9a" opacity="0.5"/><circle cx="70" cy="1028" r="6" fill="#4a3a78" opacity="0.6"/><circle cx="150" cy="1022" r="8" fill="#56407c" opacity="0.5"/><circle cx="215" cy="990" r="7" fill="#4c4080" opacity="0.5"/><circle cx="330" cy="978" r="6" fill="#4c3e70" opacity="0.5"/><circle cx="178" cy="1005" r="5" fill="#3c50a0" opacity="0.5"/><circle cx="1269" cy="991" r="6.5" fill="#b474c4" opacity="0.9"/><circle cx="1284" cy="1003" r="6" fill="#ccbcea" opacity="0.95"/><circle cx="1261" cy="1005" r="11" fill="#7e6cac" opacity="0.7"/><circle cx="1248" cy="1020" r="6" fill="#ece4f2" opacity="0.95"/><circle cx="1327" cy="983" r="7" fill="#4c6cac" opacity="0.8"/><circle cx="1302" cy="998" r="6" fill="#745ca4" opacity="0.7"/><circle cx="1324" cy="1005" r="6" fill="#8c5c94" opacity="0.7"/><circle cx="1368" cy="997" r="7" fill="#6c6cb4" opacity="0.8"/><circle cx="1346" cy="1013" r="7" fill="#2a2a74" opacity="0.8"/><circle cx="1336" cy="1020" r="6" fill="#6c5cac" opacity="0.7"/><circle cx="1364" cy="1019.5" r="7" fill="#5c5284" opacity="0.7"/><circle cx="1400" cy="1009" r="7.5" fill="#7c94ea" opacity="0.95"/><circle cx="1430" cy="1011.5" r="8" fill="#ea94e2" opacity="0.95"/><circle cx="1402.5" cy="994" r="7.5" fill="#544c84" opacity="0.7"/><circle cx="1444" cy="994" r="10" fill="#544c7c" opacity="0.6"/><circle cx="1420" cy="1004" r="7" fill="#4c4a92" opacity="0.7"/><circle cx="1401" cy="1029.5" r="7" fill="#7a7aca" opacity="0.9"/><circle cx="1452.5" cy="1029.5" r="7" fill="#627ac2" opacity="0.85"/><circle cx="1512" cy="980" r="9" fill="#746cb4" opacity="0.85"/><circle cx="1535" cy="1004" r="9" fill="#4c324a" opacity="0.7"/><circle cx="1520" cy="1025" r="8" fill="#5c2a3a" opacity="0.7"/><circle cx="1460" cy="1018" r="8" fill="#4c2a4a" opacity="0.6"/><circle cx="1595" cy="996.5" r="9" fill="#3c3a7a" opacity="0.8"/><circle cx="1240" cy="1034" r="9" fill="#7a5ab2" opacity="0.8"/><circle cx="1235" cy="1001.5" r="14" fill="#a464bc" opacity="0.45"/><circle cx="1290" cy="1030" r="8" fill="#5a4880" opacity="0.6"/><circle cx="1384" cy="1030" r="6" fill="#4c3c6c" opacity="0.6"/><circle cx="1480" cy="1000" r="8" fill="#3a2e58" opacity="0.6"/><circle cx="1560" cy="1022" r="8" fill="#2c2444" opacity="0.7"/><circle cx="1495" cy="1026" r="7" fill="#342850" opacity="0.6"/></g></svg>
<div class="a" style="left:0;top:0;width:1600px;height:34px;background:linear-gradient(180deg,rgba(8,4,16,.75) 0%,rgba(8,4,16,.6) 35%,rgba(8,4,16,.25) 65%,rgba(8,4,16,0) 100%)"></div>
</div>
<!-- blender window bg -->
<div class="a" id="win" style="left:0;top:61px;width:1600px;height:907.5px;background:#181818;border-radius:0 0 10px 10px"></div>

<!-- topbar -->
<svg style="left:8.5px;top:66.5px;" width="16" height="13" viewBox="0 0 16 13"><path d="M8.600.7L2.300 5.500h3.600L1 9.100c-.6.500-.2 1.300.5 1l3.400-2.400" fill="none" stroke="#e6e6e6" stroke-width="1.500" stroke-linecap="round" stroke-linejoin="round"/><circle cx="9.700" cy="7.700" r="4.300" fill="none" stroke="#e6e6e6" stroke-width="2"/><circle cx="9.700" cy="7.700" r="1.300" fill="#e6e6e6"/></svg>
<div class="t u" style="left:33px;top:70px;font-size:10.2px;color:#e8e8e8;">File</div>
<div class="t u" style="left:64px;top:70px;font-size:10.2px;color:#e8e8e8;">Edit</div>
<div class="t u" style="left:96.5px;top:70px;font-size:10.2px;color:#e8e8e8;">Render</div>
<div class="t u" style="left:145px;top:70px;font-size:10.2px;color:#e8e8e8;">Window</div>
<div class="t u" style="left:197.5px;top:70px;font-size:10.2px;color:#e8e8e8;">Help</div>
<div class="a" style="left:243px;top:67px;width:48px;height:20px;background:#303030;border-radius:4px 4px 0 0;"></div>
<div class="t u" style="left:251px;top:73px;font-size:10.2px;color:#ededed;">Layout</div>
<div class="t u" style="left:302px;top:73px;font-size:10.2px;color:#9b9b9b;">Modeling</div>
<div class="t u" style="left:365px;top:73px;font-size:10.2px;color:#9b9b9b;">Sculpting</div>
<div class="t u" style="left:429px;top:73px;font-size:10.2px;color:#9b9b9b;">UV Editing</div>
<div class="t u" style="left:497px;top:73px;font-size:10.2px;color:#9b9b9b;">Texture Paint</div>
<div class="t u" style="left:580px;top:73px;font-size:10.2px;color:#9b9b9b;">Shading</div>
<div class="t u" style="left:637.5px;top:73px;font-size:10.2px;color:#9b9b9b;">Animation</div>
<div class="t u" style="left:703.5px;top:73px;font-size:10.2px;color:#9b9b9b;">Rendering</div>
<div class="t u" style="left:771px;top:73px;font-size:10.2px;color:#9b9b9b;">Compositing</div>
<div class="t u" style="left:850px;top:73px;font-size:10.2px;color:#9b9b9b;">Geometry Nodes</div>
<div class="t u" style="left:950px;top:73px;font-size:10.2px;color:#9b9b9b;">Scripting</div>
<svg style="left:1006px;top:70.5px;" width="10" height="10" viewBox="0 0 10 10"><path d="M5 .5v9M.5 5h9" stroke="#9b9b9b" stroke-width="1.200"/></svg>
<div class="a" style="left:1232px;top:64px;width:29px;height:18px;background:#2a2a2a;border-radius:4px 0 0 4px;"></div>
<svg style="left:1236px;top:65.5px;" width="15" height="15" viewBox="0 0 15 15"><path d="M4.500 1l3.500 8.500a3.800 3.800 0 0 1-7 0z" fill="#e0e0e0"/><circle cx="10.500" cy="3.500" r="1.800" fill="#e0e0e0"/><circle cx="10" cy="10.500" r="3.300" fill="#2a2a2a" stroke="#e0e0e0" stroke-width="1.300"/></svg>
<svg style="left:1252px;top:71.5px;" width="6.5" height="3.6" viewBox="0 0 6.5 3.6"><path d="M.5 .5L3.25 3.1L6 .5" fill="none" stroke="#e0e0e0" stroke-width="1.3" stroke-linecap="round" stroke-linejoin="round"/></svg>
<div class="a" style="left:1261.5px;top:64px;width:110px;height:18px;background:#1d1d1d;"></div>
<div class="t u" style="left:1268px;top:70px;font-size:10.2px;color:#e6e6e6;">Scene</div>
<svg style="left:1354px;top:65.5px;" width="15" height="15" viewBox="0 0 15 15"><g transform="rotate(40 7.500 7.500)"><path d="M5 .8h5v1.200l-.8.600v3.600l2 2.300v1H3.800v-1l2-2.300V2.600L5 2z" fill="none" stroke="#7a7a7a" stroke-width="1.100" stroke-linejoin="round"/><path d="M7.500 9.500v5.300" stroke="#7a7a7a" stroke-width="1.200" stroke-linecap="round"/></g></svg>
<div class="a" style="left:1372px;top:64px;width:19px;height:18px;background:#4b4b4b;"></div>
<svg style="left:1374px;top:65.5px;" width="15" height="15" viewBox="0 0 15 15"><path d="M4.800 1h5.500l3 3v7h-8.500z" fill="none" stroke="#d8d8d8" stroke-width="1.300" stroke-linejoin="round"/><path d="M10 1v3.300h3.300" fill="none" stroke="#d8d8d8" stroke-width="1.100"/><path d="M3.200 4.500H1.500v9h7v-1.300" fill="none" stroke="#d8d8d8" stroke-width="1.300" stroke-linejoin="round"/></svg>
<div class="a" style="left:1391.5px;top:64px;width:18px;height:18px;background:#2a2a2a;border-radius:0 4px 4px 0;"></div>
<svg style="left:1396px;top:69px;" width="8" height="8" viewBox="0 0 8 8"><path d="M.7 .7L7.3 7.3M7.3 .7L.7 7.3" stroke="#5a5a5a" stroke-width="1.300" stroke-linecap="round"/></svg>
<div class="a" style="left:1414.5px;top:64px;width:29px;height:18px;background:#2a2a2a;border-radius:4px 0 0 4px;"></div>
<svg style="left:1419px;top:65.5px;" width="15" height="15" viewBox="0 0 15 15"><path d="M1 4.500V14h9.500" fill="none" stroke="#e0e0e0" stroke-width="1.200"/><path d="M3 2.500V12h9.500" fill="none" stroke="#e0e0e0" stroke-width="1.200"/><rect x="5" y=".7" width="9.300" height="9.300" rx="1" fill="#e0e0e0"/><path d="M6 9l3-4.500 2.500 4.500z" fill="#2a2a2a"/><circle cx="12" cy="3.200" r="1" fill="#2a2a2a"/></svg>
<svg style="left:1435.5px;top:71.5px;" width="6.5" height="3.6" viewBox="0 0 6.5 3.6"><path d="M.5 .5L3.25 3.1L6 .5" fill="none" stroke="#e0e0e0" stroke-width="1.3" stroke-linecap="round" stroke-linejoin="round"/></svg>
<div class="a" style="left:1444px;top:64px;width:110.5px;height:18px;background:#1d1d1d;"></div>
<div class="t u" style="left:1450.5px;top:70px;font-size:10.2px;color:#e6e6e6;">ViewLayer</div>
<div class="a" style="left:1555px;top:64px;width:19px;height:18px;background:#4b4b4b;"></div>
<svg style="left:1557px;top:65.5px;" width="15" height="15" viewBox="0 0 15 15"><path d="M4.800 1h5.500l3 3v7h-8.500z" fill="none" stroke="#d8d8d8" stroke-width="1.300" stroke-linejoin="round"/><path d="M10 1v3.300h3.300" fill="none" stroke="#d8d8d8" stroke-width="1.100"/><path d="M3.200 4.500H1.500v9h7v-1.300" fill="none" stroke="#d8d8d8" stroke-width="1.300" stroke-linejoin="round"/></svg>
<div class="a" style="left:1574.5px;top:64px;width:18px;height:18px;background:#2a2a2a;border-radius:0 4px 4px 0;"></div>
<svg style="left:1579px;top:69px;" width="8" height="8" viewBox="0 0 8 8"><path d="M.7 .7L7.3 7.3M7.3 .7L.7 7.3" stroke="#5a5a5a" stroke-width="1.300" stroke-linecap="round"/></svg>
<!-- image editor -->
<div class="area" id="imged" style="left:0;top:86px;width:593px;height:435px;background:#333">
<div class="a" style="left:8.5px;top:3.3px;width:28px;height:17.5px;background:#2b2b2b;border-radius:4px;box-shadow:0 0 0 .5px #3a3a3a;"></div>
<svg style="left:11.5px;top:5px;" width="14" height="14" viewBox="0 0 14 14"><rect x=".5" y=".5" width="4.500" height="13" rx="1.500" fill="#e6e6e6"/><rect x="4" y=".5" width="9.500" height="13" rx="1" fill="#e6e6e6"/><rect x="5.5" y="1.8" width="2.600" height="2.600" fill="#303030"/><rect x="5.5" y="7" width="2.600" height="2.600" fill="#303030"/><rect x="8.1" y="4.4" width="2.600" height="2.600" fill="#303030"/><rect x="8.1" y="9.6" width="2.600" height="2.600" fill="#303030"/><rect x="10.7" y="1.8" width="2.600" height="2.600" fill="#303030"/><rect x="10.7" y="7" width="2.600" height="2.600" fill="#303030"/></svg>
<svg style="left:27.5px;top:10.5px;" width="6.5" height="3.6" viewBox="0 0 6.5 3.6"><path d="M.5 .5L3.25 3.1L6 .5" fill="none" stroke="#e0e0e0" stroke-width="1.3" stroke-linecap="round" stroke-linejoin="round"/></svg>
<div class="t u" style="left:49px;top:9px;font-size:10.2px;color:#e6e6e6;">View</div>
<div class="t u" style="left:86px;top:9px;font-size:10.2px;color:#e6e6e6;">Image</div>
<div class="a" style="left:141px;top:3.3px;width:27px;height:17.5px;background:#2b2b2b;border-radius:4px 0 0 4px;box-shadow:0 0 0 .5px #3a3a3a;"></div>
<svg style="left:143px;top:4.5px;" width="15" height="15" viewBox="0 0 15 15"><rect x=".7" y=".7" width="13.600" height="13.600" rx="1.500" fill="none" stroke="#e6e6e6" stroke-width="1.300"/><path d="M1.500 14L6 6.500l4 7.500z" fill="#e6e6e6"/><circle cx="11" cy="4" r="1.200" fill="#e6e6e6"/></svg>
<svg style="left:159px;top:10.5px;" width="6.5" height="3.6" viewBox="0 0 6.5 3.6"><path d="M.5 .5L3.25 3.1L6 .5" fill="none" stroke="#e0e0e0" stroke-width="1.3" stroke-linecap="round" stroke-linejoin="round"/></svg>
<div class="a" style="left:168.5px;top:3.3px;width:187px;height:17.5px;background:#1d1d1d;"></div>
<div class="t u" style="left:175px;top:9px;font-size:10.2px;color:#e6e6e6;">dryer-design-tutorial-icons.png.001</div>
<div class="a" style="left:355.5px;top:3.3px;width:96.5px;height:17.5px;background:#4b4b4b;border-radius:0 4px 4px 0;"></div>
<div class="a" style="left:378px;top:3.3px;width:0.8px;height:17.5px;background:#3d3d3d;"></div>
<div class="a" style="left:397px;top:3.3px;width:0.8px;height:17.5px;background:#3d3d3d;"></div>
<div class="a" style="left:415.5px;top:3.3px;width:0.8px;height:17.5px;background:#3d3d3d;"></div>
<div class="a" style="left:434px;top:3.3px;width:0.8px;height:17.5px;background:#3d3d3d;"></div>
<div class="t u" style="left:364px;top:9px;font-size:10.2px;color:#e0e0e0;">2</div>
<svg style="left:380.5px;top:4.8px;" width="14" height="15" viewBox="0 0 14 15"><path d="M7 .8c1.800 1 3.800 1.500 6 1.500v4.200c0 3.500-2.500 6.400-6 7.700-3.500-1.300-6-4.200-6-7.700V2.300c2.200 0 4.200-.5 6-1.500z" fill="none" stroke="#b8b8b8" stroke-width="1.200" stroke-linejoin="round"/></svg>
<svg style="left:398.8px;top:4.5px;" width="15" height="15" viewBox="0 0 15 15"><path d="M4.800 1h5.500l3 3v7h-8.500z" fill="none" stroke="#d8d8d8" stroke-width="1.300" stroke-linejoin="round"/><path d="M10 1v3.300h3.300" fill="none" stroke="#d8d8d8" stroke-width="1.100"/><path d="M3.200 4.500H1.500v9h7v-1.300" fill="none" stroke="#d8d8d8" stroke-width="1.300" stroke-linejoin="round"/></svg>
<svg style="left:417.5px;top:5.5px;" width="15" height="13" viewBox="0 0 15 13"><path d="M.5 1.300c0-.5.400-.8.800-.8h4l1.200 1.500h7.200c.5 0 .8.400.8.800V4H.5z" fill="#e6e6e6"/><rect x=".5" y="4.900" width="14" height="7.600" rx=".8" fill="#e6e6e6"/></svg>
<svg style="left:438.5px;top:7.5px;" width="9" height="9" viewBox="0 0 9 9"><path d="M.7 .7L8.3 8.3M8.3 .7L.7 8.3" stroke="#e0e0e0" stroke-width="1.300" stroke-linecap="round"/></svg>
<svg style="left:458.5px;top:4px;" width="16" height="16" viewBox="0 0 16 16"><g transform="rotate(40 8 8)"><path d="M5 .5h6v1.600l-1 .7v3.800l2.400 2.500v1.400H3.600v-1.400L6 6.600V2.800l-1-.7z" fill="#ffffff"/><path d="M8 10.300v5.700" stroke="#ffffff" stroke-width="1.600" stroke-linecap="round"/></g></svg>
<div class="a" style="left:492px;top:3.3px;width:17px;height:17.5px;background:#4772b3;border-radius:4px 0 0 4px;"></div>
<svg style="left:493px;top:4.5px;" width="15" height="15" viewBox="0 0 15 15"><path d="M1 4.500c5 0 9 3 9.500 10" fill="none" stroke="#e6e6e6" stroke-width="1.300" stroke-linecap="round"/><path d="M3.500 12L13 2.500" stroke="#e6e6e6" stroke-width="1.300"/><path d="M13.800 1.200l-1 4.300-3.300-3.300z" fill="#e6e6e6"/><circle cx="3.300" cy="12.200" r="1.700" fill="#4772b3" stroke="#e6e6e6" stroke-width="1.200"/></svg>
<div class="a" style="left:509px;top:3.3px;width:18px;height:17.5px;background:#232323;border-radius:0 4px 4px 0;"></div>
<svg style="left:514.5px;top:10.5px;" width="6.5" height="3.6" viewBox="0 0 6.5 3.6"><path d="M.5 .5L3.25 3.1L6 .5" fill="none" stroke="#e0e0e0" stroke-width="1.3" stroke-linecap="round" stroke-linejoin="round"/></svg>
<div class="a" style="left:533px;top:3.3px;width:17.5px;height:17.5px;background:#4772b3;border-radius:4px 0 0 4px;"></div>
<svg style="left:534px;top:4.5px;" width="16" height="15" viewBox="0 0 16 15"><circle cx="9.500" cy="6" r="5.500" fill="#e6e6e6"/><circle cx="6" cy="9.300" r="4.800" fill="none" stroke="#e6e6e6" stroke-width="1.300"/><circle cx="9.300" cy="6.200" r="2" fill="#4772b3"/><path d="M6 9.300a4.800 4.800 0 0 1 4.800-4.800" stroke="#4772b3" stroke-width="1.100" fill="none"/></svg>
<div class="a" style="left:550.5px;top:3.3px;width:17.5px;height:17.5px;background:#232323;border-radius:0 4px 4px 0;"></div>
<svg style="left:556px;top:10.5px;" width="6.5" height="3.6" viewBox="0 0 6.5 3.6"><path d="M.5 .5L3.25 3.1L6 .5" fill="none" stroke="#e0e0e0" stroke-width="1.3" stroke-linecap="round" stroke-linejoin="round"/></svg>
<div class="a" style="left:580px;top:3.3px;width:20px;height:17.5px;background:#232323;border-radius:4px;"></div>
<svg style="left:582.5px;top:4.5px;" width="15" height="15" viewBox="0 0 15 15"><rect x=".7" y=".7" width="13.600" height="13.600" rx="1" fill="none" stroke="#e6e6e6" stroke-width="1.300"/><path d="M1 1l7 7 5-7z" fill="#e6e6e6"/><path d="M3.500 13.500L7.500 7l4 6.500z" fill="#b8b8b8"/></svg>
<div class="a" style="left:8.2px;top:32px;width:36.2px;height:30.7px;background:#252525;border-radius:4px 4px 0 0;"></div>
<div class="a" style="left:8.2px;top:63.5px;width:36.2px;height:31px;background:#252525;border-radius:0 0 4px 4px;"></div>
<div class="a" style="left:8.2px;top:101.5px;width:36.2px;height:30.8px;background:#4772b3;border-radius:4px 4px 0 0;"></div>
<div class="a" style="left:8.2px;top:133px;width:36.2px;height:31px;background:#252525;border-radius:0;"></div>
<div class="a" style="left:8.2px;top:164.8px;width:36.2px;height:31.2px;background:#252525;border-radius:0;"></div>
<div class="a" style="left:8.2px;top:196.8px;width:36.2px;height:31.7px;background:#252525;border-radius:0 0 4px 4px;"></div>
<div class="a" style="left:8.2px;top:236.5px;width:36.2px;height:30.2px;background:#252525;border-radius:4px;"></div>
<div class="a" style="left:8.2px;top:273px;width:36.2px;height:30.7px;background:#252525;border-radius:4px;"></div>
<svg style="left:15px;top:38px;" width="22" height="20" viewBox="0 0 22 20"><path d="M2.500 .8v11.500l3.200-3L10.500 9z" fill="#e6e6e6"/><g stroke="#e6e6e6" stroke-width="1.200" fill="none"><path d="M14.500 8.500v8M10.500 12.500h8"/></g><path d="M14.500 6.500l1.700 2.200h-3.400zM14.500 18.500l1.700-2.200h-3.400zM8.500 12.500l2.200-1.700v3.400zM20.500 12.500l-2.200-1.700v3.400z" fill="#e6e6e6"/></svg>
<svg style="left:38.5px;top:57px;" width="4" height="4" viewBox="0 0 4 4"><path d="M4 0v4H0z" fill="#9a9a9a"/></svg>
<svg style="left:14.5px;top:67px;" width="24" height="24" viewBox="0 0 24 24"><circle cx="12" cy="12" r="10" fill="none" stroke="#e8e8e8" stroke-width="1.500"/><circle cx="12" cy="12" r="10" fill="none" stroke="#c0405a" stroke-width="1.500" stroke-dasharray="3.900 3.950"/><path d="M12 4v5.500M12 14.500V20M4 12h5.500M14.500 12H20" stroke="#d0d0d0" stroke-width="1.100"/></svg>
<svg style="left:14.5px;top:105px;" width="24" height="24" viewBox="0 0 24 24"><path d="M12 1.500l2.800 3.800H9.200zM12 22.500l2.800-3.800H9.200zM1.500 12l3.800-2.800v5.600zM22.500 12l-3.800-2.800v5.600z" fill="#e6e6e6"/><path d="M12 6.500v3.500M12 14v3.500M6.500 12H10M14 12h3.500" stroke="#e6e6e6" stroke-width="1.500" stroke-dasharray="1.700 1.200"/></svg>
<svg style="left:14.5px;top:138px;" width="24" height="22" viewBox="0 0 24 22"><path d="M3.300 9A9 9 0 0 1 20.700 9M20.700 13.500A9 9 0 0 1 3.300 13.500" fill="none" stroke="#e6e6e6" stroke-width="1.300"/><path d="M1 10l2.600 4 2.600-4zM23 12.500l-2.600-4-2.600 4z" fill="#e6e6e6"/><path d="M12 7.800l3.300 3.300-3.300 3.300-3.300-3.300z" fill="#d0d0d0"/></svg>
<svg style="left:16.5px;top:170.5px;" width="20" height="20" viewBox="0 0 20 20"><rect x="1" y="9" width="10" height="10" fill="#e6e6e6"/><path d="M5 6V1.700h13.300V15H14" fill="none" stroke="#b0b0b0" stroke-width="1.200"/><path d="M10.500 9.500L16 4" stroke="#e6e6e6" stroke-width="1.300"/><path d="M17 3l-.6 3.800-3.200-3.200z" fill="#e6e6e6"/></svg>
<svg style="left:14.5px;top:201px;" width="24" height="24" viewBox="0 0 24 24"><circle cx="12" cy="12" r="9.300" fill="none" stroke="#e6e6e6" stroke-width="1.300" stroke-dasharray="9.600 5"  stroke-dashoffset="-2.500"/><rect x="8" y="8" width="8" height="8" rx="1" fill="#e6e6e6"/><path d="M12 1.500l2.300 3.300H9.700zM12 22.500l2.300-3.300H9.700zM1.500 12l3.300-2.300v4.600zM22.500 12l-3.300-2.300v4.600z" fill="#e6e6e6"/></svg>
<svg style="left:13px;top:241px;" width="26" height="22" viewBox="0 0 26 22"><path d="M3.500 13.500L14.500 2.500l3 3L6.500 16.500l-4 1z" fill="#e6e6e6"/><path d="M15.500 1.500l1-1 3 3-1 1z" fill="#e6e6e6"/><path d="M4 20c4-1 6-5 10-5.500s5 4 10 3" fill="none" stroke="#7fc4a8" stroke-width="1.200"/></svg>
<svg style="left:38.5px;top:261px;" width="4" height="4" viewBox="0 0 4 4"><path d="M4 0v4H0z" fill="#9a9a9a"/></svg>
<svg style="left:12px;top:277px;" width="28" height="24" viewBox="0 0 28 24"><path d="M9 7.500L12.500 2H26l-3.500 5.500z" fill="none" stroke="#d8d8d8" stroke-width="1.100"/><path d="M9 7.500h13.500V20H9z" fill="none" stroke="#d8d8d8" stroke-width="1.100"/><path d="M22.500 20L26 14V2" fill="none" stroke="#d8d8d8" stroke-width="1.100"/><path d="M1.500 12.500L22.500 7.500M1.500 12.500L9 20" stroke="#d8d8d8" stroke-width="1"/><circle cx="1.800" cy="12.500" r="1.300" fill="#e8e8e8"/></svg>
<div class="a" style="left:149px;top:60px;width:324.3px;height:324.3px;background:#ffffff;"></div>
<div class="t" style="left:153.8px;top:101.2px;font-size:40.5px;color:#0a0a0a;font-weight:bold;transform:scaleY(1.06);transform-origin:0 0;letter-spacing:-1.83px;">AIRSHOT</div>
<div class="t" style="left:331.5px;top:105.5px;font-size:15px;color:#0a0a0a;-webkit-text-stroke:.5px #0a0a0a;letter-spacing:-.4px;">PURE</div>
<div class="t" style="left:152.9px;top:177px;font-size:40.5px;color:#0a0a0a;font-weight:bold;transform:scaleY(1.06);transform-origin:0 0;letter-spacing:-.1px;">UNIX</div>
<svg style="left:154px;top:239px;" width="68" height="76" viewBox="0 0 68 76"><path d="M18 16.500A30.100 30.100 0 1 0 49.800 16.500" fill="none" stroke="#0a0a0a" stroke-width="6.900" stroke-linecap="round"/><path d="M33.900 4v37.500" stroke="#0a0a0a" stroke-width="6.800" stroke-linecap="round"/></svg>
<svg style="left:244.5px;top:239px;" width="40" height="76" viewBox="0 0 40 76"><path d="M7.300 55.500V6.300a5 5 0 0 1 10 0V55.500a10.100 10.100 0 1 1-10 0z" fill="#fff" stroke="#0a0a0a" stroke-width="2.300"/><path d="M12.300 20.500v37" stroke="#0a0a0a" stroke-width="2.600"/><circle cx="12.300" cy="64.600" r="4.300" fill="#fff" stroke="#0a0a0a" stroke-width="2.300"/><path d="M23.700 8.500h14.500M23.700 16.700h7M23.700 25h14.500M23.700 33.200h7M23.700 41.400h14.500M23.700 50h7" stroke="#0a0a0a" stroke-width="2.200"/></svg>
<svg style="left:307.5px;top:239px;" width="76" height="76" viewBox="0 0 76 76"><g transform="translate(38.100 38)"><path transform="rotate(0)" d="M-1 -12C3 -20 5.500 -28 2.400 -33C-1 -38.500 -12 -40 -20 -34.500C-28 -29 -30.500 -20 -27 -14C-24 -9 -19 -6.500 -13 -5L0 0z" fill="#0a0a0a"/><path transform="rotate(90)" d="M-1 -12C3 -20 5.500 -28 2.400 -33C-1 -38.500 -12 -40 -20 -34.500C-28 -29 -30.500 -20 -27 -14C-24 -9 -19 -6.500 -13 -5L0 0z" fill="#0a0a0a"/><path transform="rotate(180)" d="M-1 -12C3 -20 5.500 -28 2.400 -33C-1 -38.500 -12 -40 -20 -34.500C-28 -29 -30.500 -20 -27 -14C-24 -9 -19 -6.500 -13 -5L0 0z" fill="#0a0a0a"/><path transform="rotate(270)" d="M-1 -12C3 -20 5.500 -28 2.400 -33C-1 -38.500 -12 -40 -20 -34.500C-28 -29 -30.500 -20 -27 -14C-24 -9 -19 -6.500 -13 -5L0 0z" fill="#0a0a0a"/><circle r="13.400" fill="#fff"/><circle r="10.400" fill="#0a0a0a"/></g></svg>
<svg style="left:128.5px;top:364.3px;" width="40" height="40" viewBox="0 0 40 40"><circle cx="20" cy="20" r="9.600" fill="none" stroke="#e8e8e8" stroke-width="1"/><circle cx="20" cy="20" r="9.600" fill="none" stroke="#d04050" stroke-width="1" stroke-dasharray="3.770 3.770"/><path d="M20 1v15M20 24v15M1 20h15M24 20h15" stroke="#161616" stroke-width="1"/></svg>
<div class="a" style="left:560px;top:32px;width:25px;height:25px;background:#292929;border-radius:12.5px;"></div>
<svg style="left:564.3px;top:36.5px;" width="16" height="16" viewBox="0 0 16 16"><circle cx="9.800" cy="6.200" r="5" fill="none" stroke="#ececec" stroke-width="2"/><path d="M5.800 10.200L1.600 14.400" stroke="#ececec" stroke-width="2.800" stroke-linecap="round"/><path d="M9.800 3.400v5.600M7 6.200h5.600" stroke="#ececec" stroke-width="1.400"/></svg>
<div class="a" style="left:560px;top:61px;width:25px;height:25px;background:#292929;border-radius:12.5px;"></div>
<svg style="left:564.5px;top:65px;" width="16" height="16" viewBox="0 0 16 16"><g fill="none" stroke="#ececec" stroke-width="2.100" stroke-linecap="round"><path d="M4.300 8.800L3 3.600"/><path d="M7 8L6.600 1.700"/><path d="M9.800 8.200L10.700 2"/><path d="M12.300 9.300L14.200 4.300"/><path d="M4.500 11.500L1.500 8.300"/></g><path d="M3.300 8c2.500-1.200 7-1.200 10 .5-.3 3.500-2 6.800-5.800 6.800-2.500 0-4-2-5-4.500z" fill="#ececec"/></svg>
<svg style="left:588px;top:39.5px;" width="4" height="7" viewBox="0 0 4 7"><path d="M3.500 .5L.7 3.500l2.800 3" fill="none" stroke="#8a8a8a" stroke-width="1"/></svg>
</div>
<!-- left 3d viewport -->
<div class="area" id="v3d" style="left:0;top:524px;width:593px;height:425px;background:linear-gradient(180deg,#ababad 0%,#a9abaf 40%,#a7aab0 100%)">
<svg style="left:0;top:0" width="593" height="425" viewBox="0 0 593 425"><g transform="translate(0 -524)"><path d="M0 572L313 697" stroke="#1a2a50" stroke-width="1" stroke-dasharray="1.500 1.500" fill="none"/><path d="M313 697L593 809" stroke="#111" stroke-width="1" fill="none"/><path d="M0 715.200L300 706" stroke="#111" stroke-width="1" fill="none"/><path d="M404 703.500L593 697.300" stroke="#1a2a50" stroke-width="1" stroke-dasharray="1.500 1.500" fill="none"/><path d="M107.800 702.200L179.600 780L36.200 774.200z" fill="#000"/><g stroke="#15181c" stroke-width="1" fill="none"><path d="M0 787L5.700 785.200L211 792.800V915L5.200 906.600L0 909.500"/><path d="M5.700 785.200L5.200 906.600"/><path d="M211 792.800L0 873.200"/><path d="M211 915L0 921.500"/><path d="M.5 787v122"/></g><path d="M469 684V846.500" stroke="#8a8a8c" stroke-width="1"/><circle cx="469" cy="672" r="11.300" fill="none" stroke="#111" stroke-width="1" stroke-dasharray="3 2"/><circle cx="469" cy="672" r="7" fill="none" stroke="#111" stroke-width="1" stroke-dasharray="2.500 2"/><path d="M469 669.800l2.200 2.200-2.200 2.200-2.200-2.200z" fill="#ddd" stroke="#111" stroke-width=".8"/><rect x="284.500" y="655" width="25" height="71" rx="4" fill="#8d8d91"/><rect x="284.500" y="655" width="5" height="71" rx="2.500" fill="#9c9ca0"/><g transform="rotate(-4.600 340 730)"><path d="M311 730V862a29.500 26 0 0 0 59 0V722H336V730z" fill="#e2e0dc"/><path d="M311 730V862a29.500 26 0 0 0 12 21c-5-6-7.500-13-7.500-21V730z" fill="#cfcdc9" opacity=".7"/><path d="M332 730h5V850c0 8 6 12 10 12-9 2-15-4-15-12z" fill="#c4c2be" opacity=".5"/><path d="M364 722h6V862a29.500 26 0 0 1-11 20.500c3.500-6 5-13 5-20.500z" fill="#c8c6c2" opacity=".75"/></g><path d="M362.500 851c1.500 6 3 12 3.500 20l3 44.500c2.300 1.200 4.800 1 6.800-.3L373.500 871c.2-8 .8-14 1.300-21z" fill="#dedcd8"/><rect x="355.500" y="746" width="12.500" height="20" rx="5" fill="#d2cfcb" stroke="#b5b3af" stroke-width=".8"/><circle cx="362" cy="756" r="3" fill="none" stroke="#a8a6a2" stroke-width=".8"/><circle cx="364.500" cy="782.500" r="3.800" fill="#d2d0cc"/><circle cx="366" cy="800" r="3.800" fill="#d2d0cc"/><defs><linearGradient id="brl" x1="0" y1="0" x2="0" y2="1"><stop offset="0" stop-color="#b8b8b8"/><stop offset=".22" stop-color="#e8e8e8"/><stop offset=".6" stop-color="#d2d2d2"/><stop offset="1" stop-color="#acacac"/></linearGradient></defs><g transform="rotate(12.300 299 694.500)"><path d="M299 670h92v50h-92a12 25 0 0 1 0-50z" fill="url(#brl)"/><rect x="338" y="670" width="38" height="50" fill="#6a6a6a" opacity=".38"/><ellipse cx="391" cy="695" rx="18.500" ry="25" fill="#8a8a8a"/><ellipse cx="391" cy="695" rx="18.500" ry="25" fill="none" stroke="#c2c2c2" stroke-width="1.500"/><ellipse cx="391" cy="695" rx="13.500" ry="19" fill="#7c7c7c" stroke="#6fcf4f" stroke-width="2"/></g><path d="M315.500 670.200L366.900 684.100A25.400 25.400 0 1 1 339.500 722.500Q334.500 719 332.500 723.500L323.500 720.500A27.300 27.300 0 1 1 315.500 670.200z" fill="none" stroke="#f39c34" stroke-width="1.600" stroke-linejoin="round"/><g stroke="#111" stroke-width="1" fill="none"><ellipse cx="327" cy="706" rx="25.500" ry="35" transform="rotate(-8 327 706)"/><ellipse cx="327" cy="706" rx="9" ry="35" transform="rotate(-8 327 706)"/><path d="M302 706c8-9 40-12 50-2"/></g><circle cx="313.300" cy="697.300" r="13.300" fill="none" stroke="#f4f4f4" stroke-width="2"/><path d="M313.300 697V627" stroke="#5b8df0" stroke-width="1.800"/><path d="M313.300 611.500l5.300 17.500h-10.600z" fill="#5b8df0"/><path d="M313.300 697.300L342 704.500" stroke="#e8455c" stroke-width="1.800"/><circle cx="343" cy="704.800" r="4.300" fill="#e8455c"/><path d="M313.300 697.300L376 694" stroke="#8ad84a" stroke-width="1.800"/><path d="M392.500 693l-18 -7.500 1 14.500z" fill="#8ad84a"/><circle cx="313.300" cy="697.300" r="2.300" fill="#f39c34" stroke="#333" stroke-width=".5"/><ellipse cx="328.500" cy="661.500" rx="3" ry="5.500" fill="#9bd070" opacity=".7"/><rect x="344.500" y="651.500" width="9" height="9" fill="#e8a0a8" opacity=".55" stroke="#e0607a" stroke-width="1"/><circle cx="333" cy="930.500" r="8" fill="none" stroke="#f0f0f0" stroke-width="1.200"/><circle cx="333" cy="930.500" r="8" fill="none" stroke="#d8405a" stroke-width="1.200" stroke-dasharray="3.140 3.140"/><path d="M333 913.500v12M333 935.500v12M316 930.500h12M338 930.500h12" stroke="#111" stroke-width="1"/></g></svg>
<div class="a" style="left:0px;top:0px;width:593px;height:24.5px;background:#595959;"></div>
<div class="a" style="left:0px;top:24px;width:285px;height:23.5px;background:#595959;border-radius:0 0 5px 0;"></div>
<div class="a" style="left:518px;top:24px;width:75px;height:23.5px;background:#595959;border-radius:0 0 0 5px;"></div>
<div class="t u" style="left:-7.5px;top:8.2px;font-size:10.2px;color:#e6e6e6;">Select</div>
<div class="t u" style="left:40.5px;top:8.2px;font-size:10.2px;color:#e6e6e6;">Add</div>
<div class="t u" style="left:74.5px;top:8.2px;font-size:10.2px;color:#e6e6e6;">Object</div>
<div class="a" style="left:128.5px;top:3px;width:73px;height:17.5px;background:#2b2b2b;border-radius:4px;"></div>
<svg style="left:132.5px;top:4.5px;" width="15" height="15" viewBox="0 0 15 15"><path d="M8.500 7.500L2.500 5.500M8.500 7.500l3.500-5.500M8.500 7.500l3 5.500" stroke="#e6e6e6" stroke-width="1.100" fill="none"/><circle cx="8.500" cy="7.500" r="1.700" fill="#2b2b2b" stroke="#e6e6e6" stroke-width="1"/><path d="M0 4.700l3.600-1.100-1 3.200zM13.300 0l.3 3.600-3-1.900zM13 15l-3.200-1.600 2.900-1.700z" fill="#e6e6e6"/></svg>
<div class="t u" style="left:152.5px;top:8.2px;font-size:10.2px;color:#e6e6e6;">Local</div>
<svg style="left:192.5px;top:10.5px;" width="6.5" height="3.6" viewBox="0 0 6.5 3.6"><path d="M.5 .5L3.25 3.1L6 .5" fill="none" stroke="#e0e0e0" stroke-width="1.3" stroke-linecap="round" stroke-linejoin="round"/></svg>
<div class="a" style="left:207px;top:3px;width:28px;height:17.5px;background:#2b2b2b;border-radius:4px;"></div>
<svg style="left:210px;top:4.5px;" width="15" height="15" viewBox="0 0 15 15"><circle cx="5" cy="9.500" r="3.800" fill="none" stroke="#e6e6e6" stroke-width="1.300"/><circle cx="10" cy="5" r="3.800" fill="none" stroke="#e6e6e6" stroke-width="1.300"/><circle cx="7.500" cy="7.300" r="1" fill="#e6e6e6"/></svg>
<svg style="left:226.5px;top:10.5px;" width="6.5" height="3.6" viewBox="0 0 6.5 3.6"><path d="M.5 .5L3.25 3.1L6 .5" fill="none" stroke="#e0e0e0" stroke-width="1.3" stroke-linecap="round" stroke-linejoin="round"/></svg>
<div class="a" style="left:241.5px;top:3px;width:17px;height:17.5px;background:#656565;border-radius:4px 0 0 4px;"></div>
<svg style="left:242.5px;top:4.5px;" width="15" height="15" viewBox="0 0 15 15"><g transform="rotate(225 7.500 7.500)"><path d="M2.500 1v6.500a5 5 0 0 0 10 0V1h-3v6.500a2 2 0 0 1-4 0V1z" fill="none" stroke="#aaa" stroke-width="1.200" stroke-linejoin="round"/></g></svg>
<div class="a" style="left:258.5px;top:3px;width:29px;height:17.5px;background:#2b2b2b;border-radius:0 4px 4px 0;"></div>
<svg style="left:260.5px;top:4.5px;" width="15" height="15" viewBox="0 0 15 15"><path d="M1 10.500h12.500M1.500 8v5M5.500 8.500v4M9.500 8.500v4M13.500 8v5" stroke="#e6e6e6" stroke-width="1.100"/><rect x="10.500" y="1.500" width="3.500" height="3.500" fill="#e6e6e6"/></svg>
<svg style="left:279.5px;top:10.5px;" width="6.5" height="3.6" viewBox="0 0 6.5 3.6"><path d="M.5 .5L3.25 3.1L6 .5" fill="none" stroke="#e0e0e0" stroke-width="1.3" stroke-linecap="round" stroke-linejoin="round"/></svg>
<div class="a" style="left:293.5px;top:3px;width:18px;height:17.5px;background:#656565;border-radius:4px 0 0 4px;"></div>
<svg style="left:295px;top:4.5px;" width="15" height="15" viewBox="0 0 15 15"><circle cx="7.500" cy="7.500" r="6" fill="none" stroke="#8c8c8c" stroke-width="1.200"/><circle cx="7.500" cy="7.500" r="2" fill="#8c8c8c"/></svg>
<div class="a" style="left:311.5px;top:3px;width:30px;height:17.5px;background:#5f5f5f;border-radius:0 4px 4px 0;"></div>
<svg style="left:314.5px;top:4.5px;" width="15" height="15" viewBox="0 0 15 15"><path d="M1 13.500c4 0 4-11.500 6.500-11.500s2.500 11.500 6.500 11.500" fill="none" stroke="#a0a0a0" stroke-width="1.200" stroke-linecap="round"/></svg>
<svg style="left:332px;top:10.5px;" width="6.5" height="3.6" viewBox="0 0 6.5 3.6"><path d="M.5 .5L3.25 3.1L6 .5" fill="none" stroke="#6c6c6c" stroke-width="1.3" stroke-linecap="round" stroke-linejoin="round"/></svg>
<div class="a" style="left:357px;top:3px;width:28.5px;height:17.5px;background:#2b2b2b;border-radius:4px;"></div>
<svg style="left:359.5px;top:4px;" width="17" height="16" viewBox="0 0 17 16"><path d="M4.500 5C6 2.500 8.300 1.300 10.500 1.300S15 2.500 16.500 5C15 7.500 12.700 8.700 10.500 8.700S6 7.500 4.500 5z" fill="#e6e6e6"/><circle cx="10.500" cy="5" r="2.200" fill="#2b2b2b"/><circle cx="10.500" cy="5" r=".9" fill="#e6e6e6"/><path d="M1 6.500l7.500 3.300-3 1.300 1.800 3.400-1.500.8-1.800-3.400-2.300 2z" fill="#e6e6e6" stroke="#2b2b2b" stroke-width=".6"/></svg>
<svg style="left:376.5px;top:10.5px;" width="6.5" height="3.6" viewBox="0 0 6.5 3.6"><path d="M.5 .5L3.25 3.1L6 .5" fill="none" stroke="#e0e0e0" stroke-width="1.3" stroke-linecap="round" stroke-linejoin="round"/></svg>
<div class="a" style="left:391.5px;top:3px;width:17.5px;height:17.5px;background:#4772b3;border-radius:4px 0 0 4px;"></div>
<svg style="left:393px;top:4.5px;" width="15" height="15" viewBox="0 0 15 15"><path d="M1 4.500c5 0 9 3 9.500 10" fill="none" stroke="#e6e6e6" stroke-width="1.300" stroke-linecap="round"/><path d="M3.500 12L13 2.500" stroke="#e6e6e6" stroke-width="1.300"/><path d="M13.800 1.200l-1 4.300-3.300-3.300z" fill="#e6e6e6"/><circle cx="3.300" cy="12.200" r="1.700" fill="#4772b3" stroke="#e6e6e6" stroke-width="1.200"/></svg>
<div class="a" style="left:409px;top:3px;width:18px;height:17.5px;background:#2b2b2b;border-radius:0 4px 4px 0;"></div>
<svg style="left:414.5px;top:10.5px;" width="6.5" height="3.6" viewBox="0 0 6.5 3.6"><path d="M.5 .5L3.25 3.1L6 .5" fill="none" stroke="#e0e0e0" stroke-width="1.3" stroke-linecap="round" stroke-linejoin="round"/></svg>
<div class="a" style="left:433px;top:3px;width:17.5px;height:17.5px;background:#4772b3;border-radius:4px 0 0 4px;"></div>
<svg style="left:434px;top:4.5px;" width="16" height="15" viewBox="0 0 16 15"><circle cx="9.500" cy="6" r="5.500" fill="#e6e6e6"/><circle cx="6" cy="9.300" r="4.800" fill="none" stroke="#e6e6e6" stroke-width="1.300"/><circle cx="9.300" cy="6.200" r="2" fill="#4772b3"/><path d="M6 9.300a4.800 4.800 0 0 1 4.800-4.800" stroke="#4772b3" stroke-width="1.100" fill="none"/></svg>
<div class="a" style="left:450.5px;top:3px;width:18px;height:17.5px;background:#2b2b2b;border-radius:0 4px 4px 0;"></div>
<svg style="left:456px;top:10.5px;" width="6.5" height="3.6" viewBox="0 0 6.5 3.6"><path d="M.5 .5L3.25 3.1L6 .5" fill="none" stroke="#e0e0e0" stroke-width="1.3" stroke-linecap="round" stroke-linejoin="round"/></svg>
<div class="a" style="left:475px;top:3px;width:16.5px;height:17.5px;background:#5f5f5f;border-radius:4px;"></div>
<svg style="left:476px;top:4.5px;" width="15" height="15" viewBox="0 0 15 15"><rect x="4.500" y="1" width="9.500" height="9.500" rx="1" fill="none" stroke="#7c7c7c" stroke-width="1.100"/><rect x="1" y="4.500" width="9.500" height="9.500" rx="1" fill="none" stroke="#7c7c7c" stroke-width="1.100" stroke-dasharray="2 1.200"/></svg>
<div class="a" style="left:497.5px;top:3px;width:17.7px;height:17.5px;background:#656565;border-radius:4px 0 0 4px;"></div>
<svg style="left:499px;top:4.5px;" width="15" height="15" viewBox="0 0 15 15"><circle cx="7.500" cy="7.500" r="6.300" fill="none" stroke="#e6e6e6" stroke-width="1.200"/><ellipse cx="7.500" cy="7.500" rx="2.800" ry="6.300" fill="none" stroke="#e6e6e6" stroke-width="1"/><path d="M1.200 7.500h12.600M2.300 4h10.400M2.300 11h10.400" stroke="#e6e6e6" stroke-width="1"/></svg>
<div class="a" style="left:515.2px;top:3px;width:17.7px;height:17.5px;background:#656565;"></div>
<svg style="left:516.5px;top:4.5px;" width="15" height="15" viewBox="0 0 15 15"><circle cx="7.500" cy="7.500" r="6.600" fill="#d8d8d8"/></svg>
<div class="a" style="left:532.9px;top:3px;width:17.7px;height:17.5px;background:#4772b3;"></div>
<svg style="left:534.2px;top:4.5px;" width="15" height="15" viewBox="0 0 15 15"><circle cx="7.500" cy="7.500" r="6.300" fill="none" stroke="#ffffff" stroke-width="1.200"/><path d="M7.500 1.200a6.300 6.300 0 0 0-5.800 8.800L7.500 7.500z" fill="#ffffff"/><path d="M7.500 7.500l5.500 3.300a6.300 6.300 0 0 1-9 1.700z" fill="#ffffff"/></svg>
<div class="a" style="left:550.6px;top:3px;width:17.7px;height:17.5px;background:#656565;"></div>
<svg style="left:552px;top:4.5px;" width="15" height="15" viewBox="0 0 15 15"><circle cx="7.500" cy="7.500" r="6.300" fill="none" stroke="#d8d8d8" stroke-width="1.200"/><path d="M3 7.500a4.500 4.500 0 0 1 4.500-4.500" fill="none" stroke="#d8d8d8" stroke-width="1.100"/><path d="M12.800 9.500a5.800 5.800 0 0 1-7 3.800" fill="none" stroke="#d8d8d8" stroke-width="2" stroke-dasharray=".8 .8"/></svg>
<div class="a" style="left:568.3px;top:3px;width:18px;height:17.5px;background:#2b2b2b;border-radius:0 4px 4px 0;"></div>
<svg style="left:574px;top:10.5px;" width="6.5" height="3.6" viewBox="0 0 6.5 3.6"><path d="M.5 .5L3.25 3.1L6 .5" fill="none" stroke="#e0e0e0" stroke-width="1.3" stroke-linecap="round" stroke-linejoin="round"/></svg>
<div class="t u" style="left:8.5px;top:32.5px;font-size:10.2px;color:#e0e0e0;">Orientation:</div>
<div class="a" style="left:69px;top:26.8px;width:91px;height:17px;background:#2b2b2b;border-radius:4px;"></div>
<svg style="left:72px;top:28.5px;" width="15" height="15" viewBox="0 0 15 15"><path d="M4 11V1.500M4 11h9.500" stroke="#e6e6e6" stroke-width="1" stroke-dasharray="1.500 1.200"/><path d="M4 0l1.600 2.500H2.400zM15 11l-2.500 1.600V9.400zM.3 14.700l.5-2.800 2.200 2.200z" fill="#e6e6e6"/><path d="M4 11l-2.500 2.500" stroke="#e6e6e6" stroke-width="1"/><circle cx="4" cy="11" r="1.800" fill="#e6e6e6"/></svg>
<div class="t u" style="left:92.5px;top:32.5px;font-size:10.2px;color:#e6e6e6;">Default</div>
<svg style="left:151px;top:35px;" width="6.5" height="3.6" viewBox="0 0 6.5 3.6"><path d="M.5 .5L3.25 3.1L6 .5" fill="none" stroke="#e0e0e0" stroke-width="1.3" stroke-linecap="round" stroke-linejoin="round"/></svg>
<div class="t u" style="left:173.5px;top:32.5px;font-size:10.2px;color:#e0e0e0;">Drag:</div>
<div class="a" style="left:207.5px;top:26.8px;width:69.5px;height:17px;background:#2b2b2b;border-radius:4px;"></div>
<div class="t u" style="left:214.5px;top:32.5px;font-size:10.2px;color:#e6e6e6;">Select Box</div>
<svg style="left:268px;top:35px;" width="6.5" height="3.6" viewBox="0 0 6.5 3.6"><path d="M.5 .5L3.25 3.1L6 .5" fill="none" stroke="#e0e0e0" stroke-width="1.3" stroke-linecap="round" stroke-linejoin="round"/></svg>
<div class="a" style="left:526.5px;top:27px;width:59px;height:17.5px;background:#2b2b2b;border-radius:4px;"></div>
<div class="t u" style="left:533px;top:32.5px;font-size:10.2px;color:#e6e6e6;">Options</div>
<svg style="left:577px;top:35px;" width="6.5" height="3.6" viewBox="0 0 6.5 3.6"><path d="M.5 .5L3.25 3.1L6 .5" fill="none" stroke="#e0e0e0" stroke-width="1.3" stroke-linecap="round" stroke-linejoin="round"/></svg>
<div class="t u" style="left:60.5px;top:58.1px;font-size:10.2px;color:#f2f2f2;text-shadow:0 0 2px #222,0 1px 1px #222;">User Orthographic (Local)</div>
<div class="t u" style="left:60.5px;top:75px;font-size:10.2px;color:#f2f2f2;text-shadow:0 0 2px #222,0 1px 1px #222;">(1) Scene Collection | Solid_7</div>
<div class="a" style="left:8.2px;top:56px;width:36.2px;height:30.5px;background:#262626;border-radius:4px 4px 0 0;"></div>
<div class="a" style="left:8.2px;top:87.3px;width:36.2px;height:31.2px;background:#262626;border-radius:0 0 4px 4px;"></div>
<div class="a" style="left:8.2px;top:125.5px;width:36.2px;height:30.7px;background:#4772b3;border-radius:4px 4px 0 0;"></div>
<div class="a" style="left:8.2px;top:157px;width:36.2px;height:31px;background:#262626;border-radius:0;"></div>
<div class="a" style="left:8.2px;top:188.8px;width:36.2px;height:31.2px;background:#262626;border-radius:0;"></div>
<div class="a" style="left:8.2px;top:220.8px;width:36.2px;height:31.7px;background:#262626;border-radius:0 0 4px 4px;"></div>
<div class="a" style="left:8.2px;top:259.3px;width:36.2px;height:31.1px;background:#262626;border-radius:4px 4px 0 0;"></div>
<div class="a" style="left:8.2px;top:291.2px;width:36.2px;height:31.8px;background:#262626;border-radius:0 0 4px 4px;"></div>
<div class="a" style="left:8.2px;top:329px;width:36.2px;height:31px;background:#262626;border-radius:4px;"></div>
<svg style="left:14.5px;top:59.5px;" width="24" height="24" viewBox="0 0 24 24"><rect x="1.500" y="1.500" width="21" height="21" fill="none" stroke="#e8b050" stroke-width="1.400" stroke-dasharray="4.200 2.800"/><path d="M9 6.500v12l3.200-3 5.300-.3z" fill="#f0f0f0"/></svg>
<svg style="left:38.5px;top:81px;" width="4" height="4" viewBox="0 0 4 4"><path d="M4 0v4H0z" fill="#9a9a9a"/></svg>
<svg style="left:14.5px;top:91px;" width="24" height="24" viewBox="0 0 24 24"><circle cx="12" cy="12" r="10" fill="none" stroke="#e8e8e8" stroke-width="1.500"/><circle cx="12" cy="12" r="10" fill="none" stroke="#c0405a" stroke-width="1.500" stroke-dasharray="3.900 3.950"/><path d="M12 4v5.500M12 14.500V20M4 12h5.500M14.500 12H20" stroke="#d0d0d0" stroke-width="1.100"/></svg>
<svg style="left:14.5px;top:129px;" width="24" height="24" viewBox="0 0 24 24"><path d="M12 1.500l2.800 3.800H9.200zM12 22.500l2.800-3.800H9.200zM1.500 12l3.800-2.800v5.600zM22.500 12l-3.800-2.800v5.600z" fill="#e6e6e6"/><path d="M12 6.500v3.500M12 14v3.500M6.500 12H10M14 12h3.500" stroke="#e6e6e6" stroke-width="1.500" stroke-dasharray="1.700 1.200"/></svg>
<svg style="left:14.5px;top:162px;" width="24" height="22" viewBox="0 0 24 22"><path d="M3.300 9A9 9 0 0 1 20.700 9M20.700 13.500A9 9 0 0 1 3.300 13.500" fill="none" stroke="#e6e6e6" stroke-width="1.300"/><path d="M1 10l2.600 4 2.600-4zM23 12.500l-2.600-4-2.600 4z" fill="#e6e6e6"/><path d="M12 7.800l3.300 3.300-3.300 3.300-3.300-3.300z" fill="#d0d0d0"/></svg>
<svg style="left:16.5px;top:194.5px;" width="20" height="20" viewBox="0 0 20 20"><rect x="1" y="9" width="10" height="10" fill="#e6e6e6"/><path d="M5 6V1.700h13.300V15H14" fill="none" stroke="#b0b0b0" stroke-width="1.200"/><path d="M10.500 9.500L16 4" stroke="#e6e6e6" stroke-width="1.300"/><path d="M17 3l-.6 3.800-3.200-3.200z" fill="#e6e6e6"/></svg>
<svg style="left:38.5px;top:214.5px;" width="4" height="4" viewBox="0 0 4 4"><path d="M4 0v4H0z" fill="#9a9a9a"/></svg>
<svg style="left:14.5px;top:225px;" width="24" height="24" viewBox="0 0 24 24"><circle cx="12" cy="12" r="9.300" fill="none" stroke="#e6e6e6" stroke-width="1.300" stroke-dasharray="9.600 5"  stroke-dashoffset="-2.500"/><rect x="8" y="8" width="8" height="8" rx="1" fill="#e6e6e6"/><path d="M12 1.500l2.300 3.300H9.700zM12 22.500l2.300-3.300H9.700zM1.500 12l3.300-2.300v4.600zM22.500 12l-3.300-2.300v4.600z" fill="#e6e6e6"/></svg>
<svg style="left:13px;top:264px;" width="26" height="22" viewBox="0 0 26 22"><path d="M3.500 13.500L14.500 2.500l3 3L6.500 16.500l-4 1z" fill="#e6e6e6"/><path d="M15.500 1.500l1-1 3 3-1 1z" fill="#e6e6e6"/><path d="M4 20c4-1 6-5 10-5.500s5 4 10 3" fill="none" stroke="#7fc4a8" stroke-width="1.200"/></svg>
<svg style="left:38.5px;top:285px;" width="4" height="4" viewBox="0 0 4 4"><path d="M4 0v4H0z" fill="#9a9a9a"/></svg>
<svg style="left:14.5px;top:295px;" width="24" height="24" viewBox="0 0 24 24"><path d="M5.500 19A12 12 0 0 1 17.500 19z" fill="#8fd8a8" transform="translate(2 0)"/><path d="M7.500 19a10.500 10.500 0 0 1 10.500-10.500V19z" fill="#8fd8a8"/><path d="M3 1h4v18H3z" fill="#e6e6e6"/><path d="M3 19h19v3.500H3z" fill="#e6e6e6"/><path d="M5 4h2M5 7h2M5 10h2M5 13h2M5 16h2M9 20.500v2M12 20.500v2M15 20.500v2M18 20.500v2" stroke="#444" stroke-width=".7"/></svg>
<svg style="left:13px;top:332px;" width="26" height="26" viewBox="0 0 26 26"><path d="M1 4.500h7M4.500 1v7" stroke="#7fdc9f" stroke-width="1.800"/><path d="M7 11.500l5-3.500h12.500l-5 3.500z" fill="none" stroke="#b0d8c0" stroke-width="1.100"/><path d="M7 11.500h12.500v12.500H7z" fill="none" stroke="#b0d8c0" stroke-width="1.100"/><path d="M19.500 24l5-4V8" fill="none" stroke="#b0d8c0" stroke-width="1.100"/></svg>
<svg style="left:38.5px;top:354.5px;" width="4" height="4" viewBox="0 0 4 4"><path d="M4 0v4H0z" fill="#9a9a9a"/></svg>
<svg style="left:0;top:0" width="593" height="425" viewBox="0 0 593 425"><g transform="translate(0 -524)"><path d="M549 618.500V594" stroke="#3f7de0" stroke-width="1.800"/><path d="M549 618.500L569 619" stroke="#7fb820" stroke-width="1.800"/><path d="M549 618.500L542 621" stroke="#e8395a" stroke-width="1.800"/><circle cx="519.300" cy="616" r="6.500" fill="#6f7a45"/><circle cx="547" cy="647.700" r="6.500" fill="#3d5887"/><circle cx="557.500" cy="614.500" r="6" fill="#b8a0a4" fill-opacity=".5" stroke="#a83448" stroke-width="1.300"/><circle cx="547" cy="588.300" r="7.600" fill="#3f7de0"/><circle cx="575" cy="619.400" r="7.600" fill="#7fb820"/><circle cx="537.300" cy="621.700" r="7.600" fill="#e8395a"/><text x="547" y="592" font-size="9.500" font-weight="bold" text-anchor="middle" fill="#0a1830" font-family="Liberation Sans,sans-serif">Z</text><text x="575" y="623" font-size="9.500" font-weight="bold" text-anchor="middle" fill="#1a2a00" font-family="Liberation Sans,sans-serif">Y</text><text x="537.300" y="625.300" font-size="9.500" font-weight="bold" text-anchor="middle" fill="#30000a" font-family="Liberation Sans,sans-serif">X</text></g></svg>
<div class="a" style="left:561px;top:133.1px;width:23px;height:23px;background:rgba(70,70,72,.62);border-radius:11.5px;"></div>
<svg style="left:564.5px;top:136.6px;" width="16" height="16" viewBox="0 0 16 16"><circle cx="9.800" cy="6.200" r="5" fill="none" stroke="#f0f0f0" stroke-width="2"/><path d="M5.800 10.200L1.600 14.400" stroke="#f0f0f0" stroke-width="2.800" stroke-linecap="round"/><path d="M9.800 3.400v5.600M7 6.200h5.600" stroke="#f0f0f0" stroke-width="1.400"/></svg>
<div class="a" style="left:561px;top:160.9px;width:23px;height:23px;background:rgba(70,70,72,.62);border-radius:11.5px;"></div>
<svg style="left:564.5px;top:164.4px;" width="16" height="16" viewBox="0 0 16 16"><g fill="none" stroke="#f0f0f0" stroke-width="2.100" stroke-linecap="round"><path d="M4.300 8.800L3 3.600"/><path d="M7 8L6.600 1.700"/><path d="M9.800 8.200L10.700 2"/><path d="M12.300 9.300L14.200 4.300"/><path d="M4.500 11.500L1.500 8.300"/></g><path d="M3.300 8c2.500-1.200 7-1.200 10 .5-.3 3.500-2 6.800-5.800 6.800-2.500 0-4-2-5-4.500z" fill="#f0f0f0"/></svg>
<div class="a" style="left:561px;top:188.8px;width:23px;height:23px;background:rgba(70,70,72,.62);border-radius:11.5px;"></div>
<svg style="left:564.5px;top:192.3px;" width="16" height="16" viewBox="0 0 16 16"><circle cx="5" cy="4" r="2.300" fill="none" stroke="#f0f0f0" stroke-width="1.300"/><circle cx="10.500" cy="4" r="2.300" fill="none" stroke="#f0f0f0" stroke-width="1.300"/><rect x="2" y="7" width="10" height="6.500" rx="1" fill="none" stroke="#f0f0f0" stroke-width="1.300"/><path d="M12.500 9l3-1.500v5.500l-3-1.500z" fill="#f0f0f0"/><path d="M5 13.500V15.500M9 13.500v2" stroke="#f0f0f0" stroke-width="1.200"/></svg>
<div class="a" style="left:561px;top:216.7px;width:23px;height:23px;background:rgba(70,70,72,.62);border-radius:11.5px;"></div>
<svg style="left:564.5px;top:220.2px;" width="16" height="16" viewBox="0 0 16 16"><rect x="1" y="1" width="14" height="14" rx="1" fill="none" stroke="#f0f0f0" stroke-width="1.300"/><path d="M5.700 1v14M10.300 1v14M1 5.700h14M1 10.300h14" stroke="#f0f0f0" stroke-width="1.300"/></svg>
<div class="a" style="left:587.5px;top:62px;width:6px;height:11px;background:#8a8a8c;border-radius:2px 0 0 2px;"></div>
<svg style="left:589px;top:64.5px;" width="3" height="6" viewBox="0 0 3 6"><path d="M2.600 .4L.5 3l2.100 2.600" fill="none" stroke="#b8b8b8" stroke-width=".9"/></svg>
<svg style="left:68px;top:362px;" width="17" height="21" viewBox="0 0 17 21"><rect x=".8" y=".8" width="15" height="19.400" rx="6.500" fill="none" stroke="#f4f4f4" stroke-width="1.200"/><path d="M.8 9h15M5.800 .8V9M10.800 .8V9" stroke="#f4f4f4" stroke-width="1.100"/></svg>
<div class="a" style="left:89.5px;top:367.5px;width:45.5px;height:9.5px;background:rgba(255,255,255,.12);border-radius:2.5px;border:1px solid #f4f4f4;"></div>
<div class="t" style="left:92.5px;top:369.8px;font-size:5.2px;color:#f4f4f4;">Shift + Command</div>
</div>
<!-- node editor -->
<div class="area" id="nodes" style="left:597px;top:86px;width:723px;height:404px;background:#1d1d1d">
<svg style="left:0;top:0;font-family:'Liberation Sans',sans-serif" width="723" height="404" viewBox="597 86 723 404"><circle cx="625.7" cy="124.45" r=".8" fill="#2a2a2a"/><circle cx="625.7" cy="163.9" r=".8" fill="#2a2a2a"/><circle cx="625.7" cy="203.35" r=".8" fill="#2a2a2a"/><circle cx="625.7" cy="242.8" r=".8" fill="#2a2a2a"/><circle cx="625.7" cy="282.25" r=".8" fill="#2a2a2a"/><circle cx="625.7" cy="321.7" r=".8" fill="#2a2a2a"/><circle cx="625.7" cy="361.15" r=".8" fill="#2a2a2a"/><circle cx="625.7" cy="400.6" r=".8" fill="#2a2a2a"/><circle cx="625.7" cy="440.05" r=".8" fill="#2a2a2a"/><circle cx="625.7" cy="479.5" r=".8" fill="#2a2a2a"/><circle cx="665.15" cy="124.45" r=".8" fill="#2a2a2a"/><circle cx="665.15" cy="163.9" r=".8" fill="#2a2a2a"/><circle cx="665.15" cy="203.35" r=".8" fill="#2a2a2a"/><circle cx="665.15" cy="242.8" r=".8" fill="#2a2a2a"/><circle cx="665.15" cy="282.25" r=".8" fill="#2a2a2a"/><circle cx="665.15" cy="321.7" r=".8" fill="#2a2a2a"/><circle cx="665.15" cy="361.15" r=".8" fill="#2a2a2a"/><circle cx="665.15" cy="400.6" r=".8" fill="#2a2a2a"/><circle cx="665.15" cy="440.05" r=".8" fill="#2a2a2a"/><circle cx="665.15" cy="479.5" r=".8" fill="#2a2a2a"/><circle cx="704.6" cy="124.45" r=".8" fill="#2a2a2a"/><circle cx="704.6" cy="163.9" r=".8" fill="#2a2a2a"/><circle cx="704.6" cy="203.35" r=".8" fill="#2a2a2a"/><circle cx="704.6" cy="242.8" r=".8" fill="#2a2a2a"/><circle cx="704.6" cy="282.25" r=".8" fill="#2a2a2a"/><circle cx="704.6" cy="321.7" r=".8" fill="#2a2a2a"/><circle cx="704.6" cy="361.15" r=".8" fill="#2a2a2a"/><circle cx="704.6" cy="400.6" r=".8" fill="#2a2a2a"/><circle cx="704.6" cy="440.05" r=".8" fill="#2a2a2a"/><circle cx="704.6" cy="479.5" r=".8" fill="#2a2a2a"/><circle cx="744.05" cy="124.45" r=".8" fill="#2a2a2a"/><circle cx="744.05" cy="163.9" r=".8" fill="#2a2a2a"/><circle cx="744.05" cy="203.35" r=".8" fill="#2a2a2a"/><circle cx="744.05" cy="242.8" r=".8" fill="#2a2a2a"/><circle cx="744.05" cy="282.25" r=".8" fill="#2a2a2a"/><circle cx="744.05" cy="321.7" r=".8" fill="#2a2a2a"/><circle cx="744.05" cy="361.15" r=".8" fill="#2a2a2a"/><circle cx="744.05" cy="400.6" r=".8" fill="#2a2a2a"/><circle cx="744.05" cy="440.05" r=".8" fill="#2a2a2a"/><circle cx="744.05" cy="479.5" r=".8" fill="#2a2a2a"/><circle cx="783.5" cy="124.45" r=".8" fill="#2a2a2a"/><circle cx="783.5" cy="163.9" r=".8" fill="#2a2a2a"/><circle cx="783.5" cy="203.35" r=".8" fill="#2a2a2a"/><circle cx="783.5" cy="242.8" r=".8" fill="#2a2a2a"/><circle cx="783.5" cy="282.25" r=".8" fill="#2a2a2a"/><circle cx="783.5" cy="321.7" r=".8" fill="#2a2a2a"/><circle cx="783.5" cy="361.15" r=".8" fill="#2a2a2a"/><circle cx="783.5" cy="400.6" r=".8" fill="#2a2a2a"/><circle cx="783.5" cy="440.05" r=".8" fill="#2a2a2a"/><circle cx="783.5" cy="479.5" r=".8" fill="#2a2a2a"/><circle cx="822.95" cy="124.45" r=".8" fill="#2a2a2a"/><circle cx="822.95" cy="163.9" r=".8" fill="#2a2a2a"/><circle cx="822.95" cy="203.35" r=".8" fill="#2a2a2a"/><circle cx="822.95" cy="242.8" r=".8" fill="#2a2a2a"/><circle cx="822.95" cy="282.25" r=".8" fill="#2a2a2a"/><circle cx="822.95" cy="321.7" r=".8" fill="#2a2a2a"/><circle cx="822.95" cy="361.15" r=".8" fill="#2a2a2a"/><circle cx="822.95" cy="400.6" r=".8" fill="#2a2a2a"/><circle cx="822.95" cy="440.05" r=".8" fill="#2a2a2a"/><circle cx="822.95" cy="479.5" r=".8" fill="#2a2a2a"/><circle cx="862.4" cy="124.45" r=".8" fill="#2a2a2a"/><circle cx="862.4" cy="163.9" r=".8" fill="#2a2a2a"/><circle cx="862.4" cy="203.35" r=".8" fill="#2a2a2a"/><circle cx="862.4" cy="242.8" r=".8" fill="#2a2a2a"/><circle cx="862.4" cy="282.25" r=".8" fill="#2a2a2a"/><circle cx="862.4" cy="321.7" r=".8" fill="#2a2a2a"/><circle cx="862.4" cy="361.15" r=".8" fill="#2a2a2a"/><circle cx="862.4" cy="400.6" r=".8" fill="#2a2a2a"/><circle cx="862.4" cy="440.05" r=".8" fill="#2a2a2a"/><circle cx="862.4" cy="479.5" r=".8" fill="#2a2a2a"/><circle cx="901.85" cy="124.45" r=".8" fill="#2a2a2a"/><circle cx="901.85" cy="163.9" r=".8" fill="#2a2a2a"/><circle cx="901.85" cy="203.35" r=".8" fill="#2a2a2a"/><circle cx="901.85" cy="242.8" r=".8" fill="#2a2a2a"/><circle cx="901.85" cy="282.25" r=".8" fill="#2a2a2a"/><circle cx="901.85" cy="321.7" r=".8" fill="#2a2a2a"/><circle cx="901.85" cy="361.15" r=".8" fill="#2a2a2a"/><circle cx="901.85" cy="400.6" r=".8" fill="#2a2a2a"/><circle cx="901.85" cy="440.05" r=".8" fill="#2a2a2a"/><circle cx="901.85" cy="479.5" r=".8" fill="#2a2a2a"/><circle cx="941.3" cy="124.45" r=".8" fill="#2a2a2a"/><circle cx="941.3" cy="163.9" r=".8" fill="#2a2a2a"/><circle cx="941.3" cy="203.35" r=".8" fill="#2a2a2a"/><circle cx="941.3" cy="242.8" r=".8" fill="#2a2a2a"/><circle cx="941.3" cy="282.25" r=".8" fill="#2a2a2a"/><circle cx="941.3" cy="321.7" r=".8" fill="#2a2a2a"/><circle cx="941.3" cy="361.15" r=".8" fill="#2a2a2a"/><circle cx="941.3" cy="400.6" r=".8" fill="#2a2a2a"/><circle cx="941.3" cy="440.05" r=".8" fill="#2a2a2a"/><circle cx="941.3" cy="479.5" r=".8" fill="#2a2a2a"/><circle cx="980.75" cy="124.45" r=".8" fill="#2a2a2a"/><circle cx="980.75" cy="163.9" r=".8" fill="#2a2a2a"/><circle cx="980.75" cy="203.35" r=".8" fill="#2a2a2a"/><circle cx="980.75" cy="242.8" r=".8" fill="#2a2a2a"/><circle cx="980.75" cy="282.25" r=".8" fill="#2a2a2a"/><circle cx="980.75" cy="321.7" r=".8" fill="#2a2a2a"/><circle cx="980.75" cy="361.15" r=".8" fill="#2a2a2a"/><circle cx="980.75" cy="400.6" r=".8" fill="#2a2a2a"/><circle cx="980.75" cy="440.05" r=".8" fill="#2a2a2a"/><circle cx="980.75" cy="479.5" r=".8" fill="#2a2a2a"/><circle cx="1020.2" cy="124.45" r=".8" fill="#2a2a2a"/><circle cx="1020.2" cy="163.9" r=".8" fill="#2a2a2a"/><circle cx="1020.2" cy="203.35" r=".8" fill="#2a2a2a"/><circle cx="1020.2" cy="242.8" r=".8" fill="#2a2a2a"/><circle cx="1020.2" cy="282.25" r=".8" fill="#2a2a2a"/><circle cx="1020.2" cy="321.7" r=".8" fill="#2a2a2a"/><circle cx="1020.2" cy="361.15" r=".8" fill="#2a2a2a"/><circle cx="1020.2" cy="400.6" r=".8" fill="#2a2a2a"/><circle cx="1020.2" cy="440.05" r=".8" fill="#2a2a2a"/><circle cx="1020.2" cy="479.5" r=".8" fill="#2a2a2a"/><circle cx="1059.65" cy="124.45" r=".8" fill="#2a2a2a"/><circle cx="1059.65" cy="163.9" r=".8" fill="#2a2a2a"/><circle cx="1059.65" cy="203.35" r=".8" fill="#2a2a2a"/><circle cx="1059.65" cy="242.8" r=".8" fill="#2a2a2a"/><circle cx="1059.65" cy="282.25" r=".8" fill="#2a2a2a"/><circle cx="1059.65" cy="321.7" r=".8" fill="#2a2a2a"/><circle cx="1059.65" cy="361.15" r=".8" fill="#2a2a2a"/><circle cx="1059.65" cy="400.6" r=".8" fill="#2a2a2a"/><circle cx="1059.65" cy="440.05" r=".8" fill="#2a2a2a"/><circle cx="1059.65" cy="479.5" r=".8" fill="#2a2a2a"/><circle cx="1099.1" cy="124.45" r=".8" fill="#2a2a2a"/><circle cx="1099.1" cy="163.9" r=".8" fill="#2a2a2a"/><circle cx="1099.1" cy="203.35" r=".8" fill="#2a2a2a"/><circle cx="1099.1" cy="242.8" r=".8" fill="#2a2a2a"/><circle cx="1099.1" cy="282.25" r=".8" fill="#2a2a2a"/><circle cx="1099.1" cy="321.7" r=".8" fill="#2a2a2a"/><circle cx="1099.1" cy="361.15" r=".8" fill="#2a2a2a"/><circle cx="1099.1" cy="400.6" r=".8" fill="#2a2a2a"/><circle cx="1099.1" cy="440.05" r=".8" fill="#2a2a2a"/><circle cx="1099.1" cy="479.5" r=".8" fill="#2a2a2a"/><circle cx="1138.55" cy="124.45" r=".8" fill="#2a2a2a"/><circle cx="1138.55" cy="163.9" r=".8" fill="#2a2a2a"/><circle cx="1138.55" cy="203.35" r=".8" fill="#2a2a2a"/><circle cx="1138.55" cy="242.8" r=".8" fill="#2a2a2a"/><circle cx="1138.55" cy="282.25" r=".8" fill="#2a2a2a"/><circle cx="1138.55" cy="321.7" r=".8" fill="#2a2a2a"/><circle cx="1138.55" cy="361.15" r=".8" fill="#2a2a2a"/><circle cx="1138.55" cy="400.6" r=".8" fill="#2a2a2a"/><circle cx="1138.55" cy="440.05" r=".8" fill="#2a2a2a"/><circle cx="1138.55" cy="479.5" r=".8" fill="#2a2a2a"/><circle cx="1178" cy="124.45" r=".8" fill="#2a2a2a"/><circle cx="1178" cy="163.9" r=".8" fill="#2a2a2a"/><circle cx="1178" cy="203.35" r=".8" fill="#2a2a2a"/><circle cx="1178" cy="242.8" r=".8" fill="#2a2a2a"/><circle cx="1178" cy="282.25" r=".8" fill="#2a2a2a"/><circle cx="1178" cy="321.7" r=".8" fill="#2a2a2a"/><circle cx="1178" cy="361.15" r=".8" fill="#2a2a2a"/><circle cx="1178" cy="400.6" r=".8" fill="#2a2a2a"/><circle cx="1178" cy="440.05" r=".8" fill="#2a2a2a"/><circle cx="1178" cy="479.5" r=".8" fill="#2a2a2a"/><circle cx="1217.45" cy="124.45" r=".8" fill="#2a2a2a"/><circle cx="1217.45" cy="163.9" r=".8" fill="#2a2a2a"/><circle cx="1217.45" cy="203.35" r=".8" fill="#2a2a2a"/><circle cx="1217.45" cy="242.8" r=".8" fill="#2a2a2a"/><circle cx="1217.45" cy="282.25" r=".8" fill="#2a2a2a"/><circle cx="1217.45" cy="321.7" r=".8" fill="#2a2a2a"/><circle cx="1217.45" cy="361.15" r=".8" fill="#2a2a2a"/><circle cx="1217.45" cy="400.6" r=".8" fill="#2a2a2a"/><circle cx="1217.45" cy="440.05" r=".8" fill="#2a2a2a"/><circle cx="1217.45" cy="479.5" r=".8" fill="#2a2a2a"/><circle cx="1256.9" cy="124.45" r=".8" fill="#2a2a2a"/><circle cx="1256.9" cy="163.9" r=".8" fill="#2a2a2a"/><circle cx="1256.9" cy="203.35" r=".8" fill="#2a2a2a"/><circle cx="1256.9" cy="242.8" r=".8" fill="#2a2a2a"/><circle cx="1256.9" cy="282.25" r=".8" fill="#2a2a2a"/><circle cx="1256.9" cy="321.7" r=".8" fill="#2a2a2a"/><circle cx="1256.9" cy="361.15" r=".8" fill="#2a2a2a"/><circle cx="1256.9" cy="400.6" r=".8" fill="#2a2a2a"/><circle cx="1256.9" cy="440.05" r=".8" fill="#2a2a2a"/><circle cx="1256.9" cy="479.5" r=".8" fill="#2a2a2a"/><circle cx="1296.35" cy="124.45" r=".8" fill="#2a2a2a"/><circle cx="1296.35" cy="163.9" r=".8" fill="#2a2a2a"/><circle cx="1296.35" cy="203.35" r=".8" fill="#2a2a2a"/><circle cx="1296.35" cy="242.8" r=".8" fill="#2a2a2a"/><circle cx="1296.35" cy="282.25" r=".8" fill="#2a2a2a"/><circle cx="1296.35" cy="321.7" r=".8" fill="#2a2a2a"/><circle cx="1296.35" cy="361.15" r=".8" fill="#2a2a2a"/><circle cx="1296.35" cy="400.6" r=".8" fill="#2a2a2a"/><circle cx="1296.35" cy="440.05" r=".8" fill="#2a2a2a"/><circle cx="1296.35" cy="479.5" r=".8" fill="#2a2a2a"/><path d="M735.2 214.5C743.4 214.5 743.4 217 751.6 217" fill="none" stroke="#121212" stroke-width="1.900" opacity=".7"/><path d="M735.2 214.5C743.4 214.5 743.4 217 751.6 217" fill="none" stroke="#6363c7" stroke-width="1"/><path d="M806.2 197C820.2 197 812 236 826 236" fill="none" stroke="#121212" stroke-width="1.900" opacity=".7"/><path d="M806.2 197C820.2 197 812 236 826 236" fill="none" stroke="#6363c7" stroke-width="1"/><path d="M919.4 149C941.4 149 929.8 243.8 951.8 243.8" fill="none" stroke="#121212" stroke-width="1.900" opacity=".7"/><linearGradient id="lk3" gradientUnits="userSpaceOnUse" x1="919.4" y1="0" x2="951.8" y2="0"><stop offset="0" stop-color="#c7c729"/><stop offset="1" stop-color="#a1a1a1"/></linearGradient><path d="M919.4 149C941.4 149 929.8 243.8 951.8 243.8" fill="none" stroke="url(#lk3)" stroke-width="1"/><path d="M1044.9 182.1C1066.9 182.1 1055 265.9 1077 265.9" fill="none" stroke="#121212" stroke-width="1.900" opacity=".7"/><path d="M1044.9 182.1C1066.9 182.1 1055 265.9 1077 265.9" fill="none" stroke="#c7c729" stroke-width="1"/><path d="M924.6 299.7C984.6 299.7 1017 283.1 1077 283.1" fill="none" stroke="#121212" stroke-width="1.900" opacity=".7"/><linearGradient id="lk5" gradientUnits="userSpaceOnUse" x1="924.6" y1="0" x2="1077" y2="0"><stop offset="0" stop-color="#c7c729"/><stop offset="1" stop-color="#a1a1a1"/></linearGradient><path d="M924.6 299.7C984.6 299.7 1017 283.1 1077 283.1" fill="none" stroke="url(#lk5)" stroke-width="1"/><path d="M794.1 349.8C814.1 349.8 810.5 361.2 830.5 361.2" fill="none" stroke="#121212" stroke-width="1.900" opacity=".7"/><path d="M794.1 349.8C814.1 349.8 810.5 361.2 830.5 361.2" fill="none" stroke="#a1a1a1" stroke-width="1"/><path d="M794.1 349.8C816.1 349.8 803.8 437.6 825.8 437.6" fill="none" stroke="#121212" stroke-width="1.900" opacity=".7"/><path d="M794.1 349.8C816.1 349.8 803.8 437.6 825.8 437.6" fill="none" stroke="#a1a1a1" stroke-width="1"/><path d="M880 400.6C975 400.6 982 309 1077 309" fill="none" stroke="#121212" stroke-width="1.900" opacity=".7"/><path d="M880 400.6C975 400.6 982 309 1077 309" fill="none" stroke="#6363c7" stroke-width="1"/><path d="M653 391.4C661.15 391.4 661.15 385.2 669.3 385.2" fill="none" stroke="#121212" stroke-width="1.900" opacity=".7"/><path d="M653 391.4C661.15 391.4 661.15 385.2 669.3 385.2" fill="none" stroke="#6363c7" stroke-width="1"/><path d="M723.7 365.4C735.7 365.4 728 398 740 398" fill="none" stroke="#121212" stroke-width="1.900" opacity=".7"/><path d="M723.7 365.4C735.7 365.4 728 398 740 398" fill="none" stroke="#6363c7" stroke-width="1"/><path d="M1170.5 257.1C1179.5 257.1 1181.8 265 1190.8 265" fill="none" stroke="#121212" stroke-width="1.900" opacity=".7"/><path d="M1170.5 257.1C1179.5 257.1 1181.8 265 1190.8 265" fill="none" stroke="#63c763" stroke-width="1"/><rect x="679.9" y="185.2" width="56.3" height="91.8" fill="#0c0c0c" rx="3" opacity=".55"/><rect x="680.9" y="184.2" width="54.3" height="89.8" fill="#303030" rx="2" /><path d="M680.9 191.7v-5.5a2 2 0 0 1 2-2h50.3a2 2 0 0 1 2 2v5.5z" fill="#a0324e"/><path d="M684.5 187.35l1.400 1.400 1.400-1.400" fill="none" stroke="#e8e8e8" stroke-width=".6"/><text x="690.9" y="189.57" font-size="4.5" fill="#e8e8e8" text-anchor="start" >Texture Coordinate</text><text x="730.7" y="198.62" font-size="4.5" fill="#d4d4d4" text-anchor="end" >Generated</text><circle cx="735.2" cy="197" r="1.700" fill="#6363c7" stroke="#161616" stroke-width=".5"/><text x="730.7" y="207.32" font-size="4.5" fill="#d4d4d4" text-anchor="end" >Normal</text><circle cx="735.2" cy="205.7" r="1.700" fill="#6363c7" stroke="#161616" stroke-width=".5"/><text x="730.7" y="216.12" font-size="4.5" fill="#d4d4d4" text-anchor="end" >UV</text><circle cx="735.2" cy="214.5" r="1.700" fill="#6363c7" stroke="#161616" stroke-width=".5"/><text x="730.7" y="224.62" font-size="4.5" fill="#d4d4d4" text-anchor="end" >Object</text><circle cx="735.2" cy="223" r="1.700" fill="#6363c7" stroke="#161616" stroke-width=".5"/><text x="730.7" y="233.32" font-size="4.5" fill="#d4d4d4" text-anchor="end" >Camera</text><circle cx="735.2" cy="231.7" r="1.700" fill="#6363c7" stroke="#161616" stroke-width=".5"/><text x="730.7" y="242.22" font-size="4.5" fill="#d4d4d4" text-anchor="end" >Window</text><circle cx="735.2" cy="240.6" r="1.700" fill="#6363c7" stroke="#161616" stroke-width=".5"/><text x="730.7" y="250.62" font-size="4.5" fill="#d4d4d4" text-anchor="end" >Reflection</text><circle cx="735.2" cy="249" r="1.700" fill="#6363c7" stroke="#161616" stroke-width=".5"/><text x="684.9" y="262.22" font-size="4.5" fill="#d4d4d4" text-anchor="start" >Object:</text><rect x="700.9" y="257.6" width="29" height="6" fill="#282828" rx="1" stroke="#414141" stroke-width=".4"/><rect x="703.4" y="259" width="3.2" height="3.2" fill="#e8e8e8" rx="0.5" /><text x="710.9" y="262.22" font-size="4.5" fill="#666" text-anchor="start" >Object</text><path d="M725.4 262.4l3.500-3.500" stroke="#d0d0d0" stroke-width="1"/><rect x="685.4" y="267.3" width="4.4" height="4.4" fill="#545454" rx="0.8" /><text x="691.4" y="271.12" font-size="4.5" fill="#d4d4d4" text-anchor="start" >From Instancer</text><rect x="750.6" y="185.2" width="56.6" height="136.3" fill="#0c0c0c" rx="3" opacity=".55"/><rect x="751.6" y="184.2" width="54.6" height="134.3" fill="#303030" rx="2" /><path d="M751.6 191.7v-5.5a2 2 0 0 1 2-2h50.6a2 2 0 0 1 2 2v5.5z" fill="#3f3a9e"/><path d="M755.2 187.35l1.400 1.400 1.400-1.400" fill="none" stroke="#e8e8e8" stroke-width=".6"/><text x="761.6" y="189.57" font-size="4.5" fill="#e8e8e8" text-anchor="start" >Mapping</text><text x="801.7" y="198.62" font-size="4.5" fill="#d4d4d4" text-anchor="end" >Vector</text><circle cx="806.2" cy="197" r="1.700" fill="#6363c7" stroke="#161616" stroke-width=".5"/><text x="756.1" y="209.62" font-size="4.5" fill="#d4d4d4" text-anchor="start" >Type:</text><rect x="772.1" y="205" width="29.5" height="6" fill="#282828" rx="1" stroke="#414141" stroke-width=".4"/><text x="774.6" y="209.62" font-size="4.5" fill="#d8d8d8" text-anchor="start" >Point</text><path d="M797.4 207.5l1.200 1.200 1.200-1.200" fill="none" stroke="#d0d0d0" stroke-width=".55"/><text x="756.1" y="218.62" font-size="4.5" fill="#d4d4d4" text-anchor="start" >Vector</text><circle cx="751.6" cy="217" r="1.700" fill="#6363c7" stroke="#161616" stroke-width=".5"/><text x="756.1" y="227.12" font-size="4.5" fill="#d4d4d4" text-anchor="start" >Location:</text><circle cx="751.6" cy="225.5" r="1.700" fill="#6363c7" stroke="#161616" stroke-width=".5"/><rect x="755.6" y="229.9" width="45.8" height="6.6" fill="#545454" rx="1" /><text x="761.6" y="234.82" font-size="4.5" fill="#e4e4e4" text-anchor="start" >X</text><text x="796.4" y="234.82" font-size="4.5" fill="#e4e4e4" text-anchor="end" >0 m</text><rect x="755.6" y="237.7" width="45.8" height="6.6" fill="#545454" rx="1" /><text x="761.6" y="242.62" font-size="4.5" fill="#e4e4e4" text-anchor="start" >Y</text><text x="796.4" y="242.62" font-size="4.5" fill="#e4e4e4" text-anchor="end" >0 m</text><rect x="755.6" y="245.5" width="45.8" height="6.6" fill="#545454" rx="1" /><text x="761.6" y="250.42" font-size="4.5" fill="#e4e4e4" text-anchor="start" >Z</text><text x="796.4" y="250.42" font-size="4.5" fill="#e4e4e4" text-anchor="end" >0 m</text><text x="756.1" y="258.82" font-size="4.5" fill="#d4d4d4" text-anchor="start" >Rotation:</text><circle cx="751.6" cy="257.2" r="1.700" fill="#6363c7" stroke="#161616" stroke-width=".5"/><rect x="755.6" y="262" width="45.8" height="6.6" fill="#545454" rx="1" /><text x="761.6" y="266.92" font-size="4.5" fill="#e4e4e4" text-anchor="start" >X</text><text x="796.4" y="266.92" font-size="4.5" fill="#e4e4e4" text-anchor="end" >0°</text><rect x="755.6" y="269.7" width="45.8" height="6.6" fill="#545454" rx="1" /><text x="761.6" y="274.62" font-size="4.5" fill="#e4e4e4" text-anchor="start" >Y</text><text x="796.4" y="274.62" font-size="4.5" fill="#e4e4e4" text-anchor="end" >0°</text><rect x="755.6" y="277.4" width="45.8" height="6.6" fill="#545454" rx="1" /><text x="761.6" y="282.32" font-size="4.5" fill="#e4e4e4" text-anchor="start" >Z</text><text x="796.4" y="282.32" font-size="4.5" fill="#e4e4e4" text-anchor="end" >0°</text><text x="756.1" y="290.62" font-size="4.5" fill="#d4d4d4" text-anchor="start" >Scale:</text><circle cx="751.6" cy="289" r="1.700" fill="#6363c7" stroke="#161616" stroke-width=".5"/><rect x="755.6" y="293.5" width="45.8" height="6.6" fill="#545454" rx="1" /><text x="761.6" y="298.42" font-size="4.5" fill="#e4e4e4" text-anchor="start" >X</text><text x="796.4" y="298.42" font-size="4.5" fill="#e4e4e4" text-anchor="end" >1.000</text><rect x="755.6" y="301.2" width="45.8" height="6.6" fill="#545454" rx="1" /><text x="761.6" y="306.12" font-size="4.5" fill="#e4e4e4" text-anchor="start" >Y</text><text x="796.4" y="306.12" font-size="4.5" fill="#e4e4e4" text-anchor="end" >1.000</text><rect x="755.6" y="308.9" width="45.8" height="6.6" fill="#545454" rx="1" /><text x="761.6" y="313.82" font-size="4.5" fill="#e4e4e4" text-anchor="start" >Z</text><text x="796.4" y="313.82" font-size="4.5" fill="#e4e4e4" text-anchor="end" >1.000</text><rect x="825" y="136.3" width="95.4" height="108.2" fill="#0c0c0c" rx="3" opacity=".55"/><rect x="826" y="135.3" width="93.4" height="106.2" fill="#303030" rx="2" /><path d="M826 142.8v-5.5a2 2 0 0 1 2-2h89.4a2 2 0 0 1 2 2v5.5z" fill="#8f5529"/><path d="M829.6 138.45l1.400 1.400 1.400-1.400" fill="none" stroke="#e8e8e8" stroke-width=".6"/><text x="836" y="140.67" font-size="4.5" fill="#e8e8e8" text-anchor="start" >dryer-design-tutorial-icons.png.001</text><text x="914.9" y="150.62" font-size="4.5" fill="#d4d4d4" text-anchor="end" >Color</text><circle cx="919.4" cy="149" r="1.700" fill="#c7c729" stroke="#161616" stroke-width=".5"/><text x="914.9" y="158.72" font-size="4.5" fill="#d4d4d4" text-anchor="end" >Alpha</text><circle cx="919.4" cy="157.1" r="1.700" fill="#a1a1a1" stroke="#161616" stroke-width=".5"/><rect x="830.5" y="165.1" width="10" height="6.2" fill="#282828" rx="1" stroke="#414141" stroke-width=".4"/><rect x="831.5" y="166" width="4.2" height="4.4" fill="none" rx="0.4" stroke="#d8d8d8" stroke-width=".5"/><path d="M831.8 170.2l1.800-2.600 1.800 2.600z" fill="#d8d8d8"/><path d="M837.2 167.9l.9 .9 .9-.9" fill="none" stroke="#d0d0d0" stroke-width=".5"/><rect x="841" y="165.1" width="33" height="6.2" fill="#1f1f1f" /><text x="843.5" y="169.82" font-size="4.5" fill="#d8d8d8" text-anchor="start" >dryer-desig...</text><rect x="874.5" y="165.1" width="40.5" height="6.2" fill="#4b4b4b" rx="1" /><text x="879" y="169.82" font-size="4.5" fill="#d8d8d8" text-anchor="middle" >2</text><path d="M887.3 165.5c1 .5 1.800 .7 2.400 .7v1.800c0 1.300-1 2.300-2.400 2.900-1.400-.6-2.400-1.600-2.400-2.900v-1.800c.6 0 1.400-.2 2.400-.7z" fill="none" stroke="#b0b0b0" stroke-width=".45"/><rect x="893.4" y="165.9" width="3.4" height="4.2" fill="none" rx="0.3" stroke="#d0d0d0" stroke-width=".5"/><rect x="892.2" y="167" width="3.4" height="3.6" fill="#4b4b4b" rx="0.3" stroke="#d0d0d0" stroke-width=".5"/><rect x="900.8" y="167" width="5.8" height="3.7" fill="#e4e4e4" rx="0.3" /><rect x="900.8" y="166" width="2.6" height="1.2" fill="#e4e4e4" rx="0.2" /><path d="M909.6 166.7l3 3m0-3l-3 3" stroke="#d8d8d8" stroke-width=".55"/><rect x="829.8" y="174.8" width="85.6" height="6.4" fill="#282828" rx="1" stroke="#414141" stroke-width=".4"/><text x="832.3" y="179.62" font-size="4.5" fill="#d8d8d8" text-anchor="start" >Linear</text><path d="M911.2 177.5l1.200 1.200 1.200-1.200" fill="none" stroke="#d0d0d0" stroke-width=".55"/><rect x="829.8" y="184.5" width="85.6" height="6.4" fill="#282828" rx="1" stroke="#414141" stroke-width=".4"/><text x="832.3" y="189.32" font-size="4.5" fill="#d8d8d8" text-anchor="start" >Flat</text><path d="M911.2 187.2l1.200 1.200 1.200-1.200" fill="none" stroke="#d0d0d0" stroke-width=".55"/><rect x="829.8" y="194.2" width="85.6" height="6.4" fill="#282828" rx="1" stroke="#414141" stroke-width=".4"/><text x="832.3" y="199.02" font-size="4.5" fill="#d8d8d8" text-anchor="start" >Extend</text><path d="M911.2 196.9l1.200 1.200 1.200-1.200" fill="none" stroke="#d0d0d0" stroke-width=".55"/><rect x="829.8" y="204.1" width="85.6" height="6.4" fill="#282828" rx="1" stroke="#414141" stroke-width=".4"/><text x="832.3" y="208.92" font-size="4.5" fill="#d8d8d8" text-anchor="start" >Single Image</text><path d="M911.2 206.8l1.200 1.200 1.200-1.200" fill="none" stroke="#d0d0d0" stroke-width=".55"/><text x="830" y="218.92" font-size="4.5" fill="#d4d4d4" text-anchor="start" >Color Space</text><rect x="860.5" y="214.1" width="55" height="6.4" fill="#282828" rx="1" stroke="#414141" stroke-width=".4"/><text x="863" y="218.92" font-size="4.5" fill="#d8d8d8" text-anchor="start" >sRGB</text><path d="M911.3 216.8l1.200 1.200 1.200-1.200" fill="none" stroke="#d0d0d0" stroke-width=".55"/><text x="830" y="228.62" font-size="4.5" fill="#d4d4d4" text-anchor="start" >Alpha</text><rect x="860.5" y="223.8" width="55" height="6.4" fill="#282828" rx="1" stroke="#414141" stroke-width=".4"/><text x="863" y="228.62" font-size="4.5" fill="#d8d8d8" text-anchor="start" >Straight</text><path d="M911.3 226.5l1.200 1.200 1.200-1.200" fill="none" stroke="#d0d0d0" stroke-width=".55"/><text x="830.5" y="237.62" font-size="4.5" fill="#d4d4d4" text-anchor="start" >Vector</text><circle cx="826" cy="236" r="1.700" fill="#6363c7" stroke="#161616" stroke-width=".5"/><rect x="950.8" y="169.7" width="95.1" height="82.1" fill="#0c0c0c" rx="3" opacity=".55"/><rect x="951.8" y="168.7" width="93.1" height="80.1" fill="#303030" rx="2" /><path d="M951.8 176.3v-5.6a2 2 0 0 1 2-2h89.1a2 2 0 0 1 2 2v5.6z" fill="#2b6593"/><path d="M955.4 171.9l1.400 1.400 1.400-1.400" fill="none" stroke="#e8e8e8" stroke-width=".6"/><text x="961.8" y="174.12" font-size="4.5" fill="#e8e8e8" text-anchor="start" >Color Ramp</text><text x="1040.4" y="183.72" font-size="4.5" fill="#d4d4d4" text-anchor="end" >Color</text><circle cx="1044.9" cy="182.1" r="1.700" fill="#c7c729" stroke="#161616" stroke-width=".5"/><text x="1040.4" y="192.12" font-size="4.5" fill="#d4d4d4" text-anchor="end" >Alpha</text><circle cx="1044.9" cy="190.5" r="1.700" fill="#a1a1a1" stroke="#161616" stroke-width=".5"/><path d="M957.8 203.2h3M959.3 201.7v3" stroke="#d0d0d0" stroke-width=".6"/><path d="M967.8 203.2h3" stroke="#d0d0d0" stroke-width=".6"/><path d="M978.8 202.8l1.500 1.500 1.500-1.500" fill="none" stroke="#d0d0d0" stroke-width=".6"/><rect x="993.3" y="200.4" width="23" height="5.6" fill="#282828" rx="1" stroke="#414141" stroke-width=".4"/><text x="995.8" y="204.82" font-size="4.5" fill="#d8d8d8" text-anchor="start" >RGB</text><path d="M1012.1 202.7l1.200 1.200 1.200-1.200" fill="none" stroke="#d0d0d0" stroke-width=".55"/><rect x="1016.8" y="200.4" width="23.5" height="5.6" fill="#282828" rx="1" stroke="#414141" stroke-width=".4"/><text x="1019.3" y="204.82" font-size="4.5" fill="#d8d8d8" text-anchor="start" >Linear</text><path d="M1036.1 202.7l1.200 1.200 1.200-1.200" fill="none" stroke="#d0d0d0" stroke-width=".55"/><linearGradient id="rga"><stop offset="0" stop-color="#161616"/><stop offset="1" stop-color="#ffffff"/></linearGradient><rect x="956.8" y="210.3" width="83.1" height="6" fill="url(#rga)" rx="0.6" /><path d="M957.6 213.3l1.600 2.200v2h-3.200v-2z" fill="#3a3a3a" stroke="#999" stroke-width=".4"/><path d="M1039.1 213.3l1.600 2.200v2h-3.200v-2z" fill="#fff" stroke="#999" stroke-width=".4"/><rect x="956" y="222.3" width="24" height="6.2" fill="#545454" rx="1" /><text x="968" y="227.02" font-size="4.5" fill="#e4e4e4" text-anchor="middle" >0</text><rect x="984" y="222.3" width="56.8" height="6.2" fill="#545454" rx="1" /><text x="989.5" y="227.02" font-size="4.5" fill="#e4e4e4" text-anchor="start" >Pos</text><text x="1035.8" y="227.02" font-size="4.5" fill="#e4e4e4" text-anchor="end" >0.000</text><rect x="956" y="232.1" width="84.8" height="6" fill="#4e4e4e" rx="1" stroke="#484848" stroke-width=".4"/><text x="956.3" y="245.42" font-size="4.5" fill="#d4d4d4" text-anchor="start" >Fac</text><circle cx="951.8" cy="243.8" r="1.700" fill="#a1a1a1" stroke="#161616" stroke-width=".5"/><rect x="829.7" y="287.4" width="95.7" height="82.4" fill="#0c0c0c" rx="3" opacity=".55"/><rect x="830.7" y="286.4" width="93.7" height="80.4" fill="#303030" rx="2" /><path d="M830.7 294v-5.6a2 2 0 0 1 2-2h89.7a2 2 0 0 1 2 2v5.6z" fill="#2b6593"/><path d="M834.3 289.6l1.400 1.400 1.400-1.400" fill="none" stroke="#e8e8e8" stroke-width=".6"/><text x="840.7" y="291.82" font-size="4.5" fill="#e8e8e8" text-anchor="start" >Color Ramp</text><text x="919.9" y="301.32" font-size="4.5" fill="#d4d4d4" text-anchor="end" >Color</text><circle cx="924.4" cy="299.7" r="1.700" fill="#c7c729" stroke="#161616" stroke-width=".5"/><text x="919.9" y="310.12" font-size="4.5" fill="#d4d4d4" text-anchor="end" >Alpha</text><circle cx="924.4" cy="308.5" r="1.700" fill="#a1a1a1" stroke="#161616" stroke-width=".5"/><path d="M836.7 321.1h3M838.2 319.6v3" stroke="#d0d0d0" stroke-width=".6"/><path d="M846.7 321.1h3" stroke="#d0d0d0" stroke-width=".6"/><path d="M857.7 320.7l1.500 1.500 1.500-1.500" fill="none" stroke="#d0d0d0" stroke-width=".6"/><rect x="872.2" y="318.3" width="23" height="5.6" fill="#282828" rx="1" stroke="#414141" stroke-width=".4"/><text x="874.7" y="322.72" font-size="4.5" fill="#d8d8d8" text-anchor="start" >RGB</text><path d="M891 320.6l1.200 1.200 1.200-1.200" fill="none" stroke="#d0d0d0" stroke-width=".55"/><rect x="895.7" y="318.3" width="23.5" height="5.6" fill="#282828" rx="1" stroke="#414141" stroke-width=".4"/><text x="898.2" y="322.72" font-size="4.5" fill="#d8d8d8" text-anchor="start" >Linear</text><path d="M915 320.6l1.200 1.200 1.200-1.200" fill="none" stroke="#d0d0d0" stroke-width=".55"/><linearGradient id="rgb"><stop offset="0" stop-color="#202020"/><stop offset=".405" stop-color="#242424"/><stop offset=".6" stop-color="#c4c4c4"/><stop offset="1" stop-color="#d6d6d6"/></linearGradient><rect x="835.7" y="328" width="83.7" height="6.3" fill="url(#rgb)" rx="0.6" /><path d="M869.77 328V331" stroke="#ddd" stroke-width=".4"/><path d="M869.77 331l1.700 2.200v2.200h-3.400v-2.200z" fill="#2a2a2a" stroke="#bbb" stroke-width=".45"/><path d="M884.66 328V331" stroke="#ddd" stroke-width=".4"/><path d="M884.66 331l1.700 2.200v2.200h-3.400v-2.200z" fill="#e8e8e8" stroke="#bbb" stroke-width=".45"/><rect x="834.9" y="339.8" width="24" height="6.2" fill="#545454" rx="1" /><text x="846.9" y="344.52" font-size="4.5" fill="#e4e4e4" text-anchor="middle" >0</text><rect x="862.9" y="339.8" width="57.4" height="6.2" fill="#545454" rx="1" /><text x="868.4" y="344.52" font-size="4.5" fill="#e4e4e4" text-anchor="start" >Pos</text><text x="915.3" y="344.52" font-size="4.5" fill="#e4e4e4" text-anchor="end" >0.407</text><rect x="834.9" y="349.3" width="85.4" height="6" fill="#262626" rx="1" stroke="#484848" stroke-width=".4"/><text x="835.2" y="362.82" font-size="4.5" fill="#d4d4d4" text-anchor="start" >Fac</text><circle cx="830.7" cy="361.2" r="1.700" fill="#a1a1a1" stroke="#161616" stroke-width=".5"/><rect x="1076" y="245" width="95.5" height="119.6" fill="#0c0c0c" rx="3" opacity=".55"/><rect x="1077" y="244" width="93.5" height="117.6" fill="#303030" rx="2" /><path d="M1077 251.5v-5.5a2 2 0 0 1 2-2h89.5a2 2 0 0 1 2 2v5.5z" fill="#38793b"/><path d="M1080.6 247.15l1.400 1.400 1.400-1.400" fill="none" stroke="#e8e8e8" stroke-width=".6"/><text x="1087" y="249.37" font-size="4.5" fill="#e8e8e8" text-anchor="start" >Principled BSDF</text><text x="1166" y="258.72" font-size="4.5" fill="#d4d4d4" text-anchor="end" >BSDF</text><circle cx="1170.5" cy="257.1" r="1.700" fill="#63c763" stroke="#161616" stroke-width=".5"/><text x="1081.5" y="267.52" font-size="4.5" fill="#d4d4d4" text-anchor="start" >Base Color</text><circle cx="1077" cy="265.9" r="1.700" fill="#c7c729" stroke="#161616" stroke-width=".5"/><rect x="1081.4" y="271.2" width="85" height="6.4" fill="#545454" rx="1" /><path d="M1082.4 271.2h84v6.4h-84a1 1 0 0 1-1-1v-4.4a1 1 0 0 1 1-1z" fill="#4772b3"/><text x="1086.9" y="276.02" font-size="4.5" fill="#e4e4e4" text-anchor="start" >Metallic</text><text x="1161.4" y="276.02" font-size="4.5" fill="#e4e4e4" text-anchor="end" >1.000</text><circle cx="1077" cy="274.4" r="1.700" fill="#a1a1a1" stroke="#161616" stroke-width=".5"/><text x="1081.5" y="284.72" font-size="4.5" fill="#d4d4d4" text-anchor="start" >Roughness</text><circle cx="1077" cy="283.1" r="1.700" fill="#a1a1a1" stroke="#161616" stroke-width=".5"/><rect x="1081.4" y="288.6" width="85" height="6.4" fill="#545454" rx="1" /><text x="1086.9" y="293.42" font-size="4.5" fill="#e4e4e4" text-anchor="start" >IOR</text><text x="1161.4" y="293.42" font-size="4.5" fill="#e4e4e4" text-anchor="end" >1.500</text><circle cx="1077" cy="291.8" r="1.700" fill="#a1a1a1" stroke="#161616" stroke-width=".5"/><rect x="1081.4" y="297.2" width="85" height="6.4" fill="#545454" rx="1" /><path d="M1082.4 297.2h84v6.4h-84a1 1 0 0 1-1-1v-4.4a1 1 0 0 1 1-1z" fill="#4772b3"/><text x="1086.9" y="302.02" font-size="4.5" fill="#e4e4e4" text-anchor="start" >Alpha</text><text x="1161.4" y="302.02" font-size="4.5" fill="#e4e4e4" text-anchor="end" >1.000</text><circle cx="1077" cy="300.4" r="1.700" fill="#a1a1a1" stroke="#161616" stroke-width=".5"/><text x="1081.5" y="310.62" font-size="4.5" fill="#d4d4d4" text-anchor="start" >Normal</text><circle cx="1077" cy="309" r="1.700" fill="#6363c7" stroke="#161616" stroke-width=".5"/><path d="M1082.5 315.3l1.400 1.500-1.400 1.500" fill="none" stroke="#d0d0d0" stroke-width=".6"/><text x="1087" y="318.42" font-size="4.5" fill="#d4d4d4" text-anchor="start" >Subsurface</text><path d="M1082.5 323.2l1.400 1.500-1.400 1.500" fill="none" stroke="#d0d0d0" stroke-width=".6"/><text x="1087" y="326.32" font-size="4.5" fill="#d4d4d4" text-anchor="start" >Specular</text><path d="M1082.5 331.1l1.400 1.500-1.400 1.500" fill="none" stroke="#d0d0d0" stroke-width=".6"/><text x="1087" y="334.22" font-size="4.5" fill="#d4d4d4" text-anchor="start" >Transmission</text><path d="M1082.5 339l1.400 1.500-1.400 1.500" fill="none" stroke="#d0d0d0" stroke-width=".6"/><text x="1087" y="342.12" font-size="4.5" fill="#d4d4d4" text-anchor="start" >Coat</text><path d="M1082.5 346.9l1.400 1.500-1.400 1.500" fill="none" stroke="#d0d0d0" stroke-width=".6"/><text x="1087" y="350.02" font-size="4.5" fill="#d4d4d4" text-anchor="start" >Sheen</text><path d="M1082.5 354.8l1.400 1.500-1.400 1.500" fill="none" stroke="#d0d0d0" stroke-width=".6"/><text x="1087" y="357.92" font-size="4.5" fill="#d4d4d4" text-anchor="start" >Emission</text><rect x="1189.8" y="245" width="56.6" height="46.4" fill="#0c0c0c" rx="3" opacity=".55"/><rect x="1190.8" y="244" width="54.6" height="44.4" fill="#303030" rx="2" /><path d="M1190.8 251.5v-5.5a2 2 0 0 1 2-2h50.6a2 2 0 0 1 2 2v5.5z" fill="#4f1c2c"/><path d="M1194.4 247.15l1.400 1.400 1.400-1.400" fill="none" stroke="#e8e8e8" stroke-width=".6"/><text x="1200.8" y="249.37" font-size="4.5" fill="#e8e8e8" text-anchor="start" >Material Output</text><rect x="1195.8" y="253.5" width="45.6" height="5.6" fill="#282828" rx="1" stroke="#414141" stroke-width=".4"/><text x="1198.3" y="257.92" font-size="4.5" fill="#d8d8d8" text-anchor="start" >All</text><path d="M1237.2 255.8l1.200 1.200 1.200-1.200" fill="none" stroke="#d0d0d0" stroke-width=".55"/><text x="1195.3" y="266.62" font-size="4.5" fill="#d4d4d4" text-anchor="start" >Surface</text><circle cx="1190.8" cy="265" r="1.700" fill="#63c763" stroke="#161616" stroke-width=".5"/><text x="1195.3" y="275.42" font-size="4.5" fill="#d4d4d4" text-anchor="start" >Volume</text><circle cx="1190.8" cy="273.8" r="1.700" fill="#63c763" stroke="#161616" stroke-width=".5"/><text x="1195.3" y="283.92" font-size="4.5" fill="#d4d4d4" text-anchor="start" >Displacement</text><circle cx="1190.8" cy="282.3" r="1.700" fill="#6363c7" stroke="#161616" stroke-width=".5"/><rect x="597.6" y="353" width="56.4" height="92" fill="#0c0c0c" rx="3" opacity=".55"/><rect x="598.6" y="352" width="54.4" height="90" fill="#303030" rx="2" /><path d="M598.6 359.5v-5.5a2 2 0 0 1 2-2h50.4a2 2 0 0 1 2 2v5.5z" fill="#a0324e"/><path d="M602.2 355.15l1.400 1.400 1.400-1.400" fill="none" stroke="#e8e8e8" stroke-width=".6"/><text x="608.6" y="357.37" font-size="4.5" fill="#e8e8e8" text-anchor="start" >Texture Coordinate</text><text x="648.5" y="367.02" font-size="4.5" fill="#d4d4d4" text-anchor="end" >Generated</text><circle cx="653" cy="365.4" r="1.700" fill="#6363c7" stroke="#161616" stroke-width=".5"/><text x="648.5" y="375.62" font-size="4.5" fill="#d4d4d4" text-anchor="end" >Normal</text><circle cx="653" cy="374" r="1.700" fill="#6363c7" stroke="#161616" stroke-width=".5"/><text x="648.5" y="384.42" font-size="4.5" fill="#d4d4d4" text-anchor="end" >UV</text><circle cx="653" cy="382.8" r="1.700" fill="#6363c7" stroke="#161616" stroke-width=".5"/><text x="648.5" y="393.02" font-size="4.5" fill="#d4d4d4" text-anchor="end" >Object</text><circle cx="653" cy="391.4" r="1.700" fill="#6363c7" stroke="#161616" stroke-width=".5"/><text x="648.5" y="401.62" font-size="4.5" fill="#d4d4d4" text-anchor="end" >Camera</text><circle cx="653" cy="400" r="1.700" fill="#6363c7" stroke="#161616" stroke-width=".5"/><text x="648.5" y="410.42" font-size="4.5" fill="#d4d4d4" text-anchor="end" >Window</text><circle cx="653" cy="408.8" r="1.700" fill="#6363c7" stroke="#161616" stroke-width=".5"/><text x="648.5" y="418.82" font-size="4.5" fill="#d4d4d4" text-anchor="end" >Reflection</text><circle cx="653" cy="417.2" r="1.700" fill="#6363c7" stroke="#161616" stroke-width=".5"/><text x="602.6" y="429.92" font-size="4.5" fill="#d4d4d4" text-anchor="start" >Object:</text><rect x="618.6" y="425.3" width="29" height="6" fill="#282828" rx="1" stroke="#414141" stroke-width=".4"/><rect x="621.1" y="426.7" width="3.2" height="3.2" fill="#e8e8e8" rx="0.5" /><text x="628.6" y="429.92" font-size="4.5" fill="#666" text-anchor="start" >Object</text><path d="M643.1 430.1l3.500-3.500" stroke="#d0d0d0" stroke-width="1"/><rect x="603.1" y="435.8" width="4.4" height="4.4" fill="#545454" rx="0.8" /><text x="609.1" y="439.62" font-size="4.5" fill="#d4d4d4" text-anchor="start" >From Instancer</text><rect x="668.3" y="353" width="56.4" height="142" fill="#0c0c0c" rx="3" opacity=".55"/><rect x="669.3" y="352" width="54.4" height="140" fill="#303030" rx="2" /><path d="M669.3 359.5v-5.5a2 2 0 0 1 2-2h50.4a2 2 0 0 1 2 2v5.5z" fill="#3f3a9e"/><path d="M672.9 355.15l1.400 1.400 1.400-1.400" fill="none" stroke="#e8e8e8" stroke-width=".6"/><text x="679.3" y="357.37" font-size="4.5" fill="#e8e8e8" text-anchor="start" >Mapping</text><text x="719.2" y="367.02" font-size="4.5" fill="#d4d4d4" text-anchor="end" >Vector</text><circle cx="723.7" cy="365.4" r="1.700" fill="#6363c7" stroke="#161616" stroke-width=".5"/><text x="673.8" y="378.22" font-size="4.5" fill="#d4d4d4" text-anchor="start" >Type:</text><rect x="689.8" y="373.6" width="29.5" height="6" fill="#282828" rx="1" stroke="#414141" stroke-width=".4"/><text x="692.3" y="378.22" font-size="4.5" fill="#d8d8d8" text-anchor="start" >Point</text><path d="M715.1 376.1l1.200 1.200 1.200-1.200" fill="none" stroke="#d0d0d0" stroke-width=".55"/><text x="673.8" y="386.82" font-size="4.5" fill="#d4d4d4" text-anchor="start" >Vector</text><circle cx="669.3" cy="385.2" r="1.700" fill="#6363c7" stroke="#161616" stroke-width=".5"/><text x="673.8" y="395.32" font-size="4.5" fill="#d4d4d4" text-anchor="start" >Location:</text><circle cx="669.3" cy="393.7" r="1.700" fill="#6363c7" stroke="#161616" stroke-width=".5"/><rect x="673.3" y="398.2" width="45.6" height="6.6" fill="#545454" rx="1" /><text x="679.3" y="403.12" font-size="4.5" fill="#e4e4e4" text-anchor="start" >X</text><text x="713.9" y="403.12" font-size="4.5" fill="#e4e4e4" text-anchor="end" >0 m</text><rect x="673.3" y="406" width="45.6" height="6.6" fill="#545454" rx="1" /><text x="679.3" y="410.92" font-size="4.5" fill="#e4e4e4" text-anchor="start" >Y</text><text x="713.9" y="410.92" font-size="4.5" fill="#e4e4e4" text-anchor="end" >0 m</text><rect x="673.3" y="413.6" width="45.6" height="6.6" fill="#545454" rx="1" /><text x="679.3" y="418.52" font-size="4.5" fill="#e4e4e4" text-anchor="start" >Z</text><text x="713.9" y="418.52" font-size="4.5" fill="#e4e4e4" text-anchor="end" >0 m</text><text x="673.8" y="427.52" font-size="4.5" fill="#d4d4d4" text-anchor="start" >Rotation:</text><circle cx="669.3" cy="425.9" r="1.700" fill="#6363c7" stroke="#161616" stroke-width=".5"/><rect x="673.3" y="430.5" width="45.6" height="6.6" fill="#545454" rx="1" /><text x="679.3" y="435.42" font-size="4.5" fill="#e4e4e4" text-anchor="start" >X</text><text x="713.9" y="435.42" font-size="4.5" fill="#e4e4e4" text-anchor="end" >0°</text><rect x="673.3" y="438.2" width="45.6" height="6.6" fill="#545454" rx="1" /><text x="679.3" y="443.12" font-size="4.5" fill="#e4e4e4" text-anchor="start" >Y</text><text x="713.9" y="443.12" font-size="4.5" fill="#e4e4e4" text-anchor="end" >0°</text><rect x="673.3" y="445.9" width="45.6" height="6.6" fill="#545454" rx="1" /><text x="679.3" y="450.82" font-size="4.5" fill="#e4e4e4" text-anchor="start" >Z</text><text x="713.9" y="450.82" font-size="4.5" fill="#e4e4e4" text-anchor="end" >0°</text><text x="673.8" y="459.62" font-size="4.5" fill="#d4d4d4" text-anchor="start" >Scale:</text><circle cx="669.3" cy="458" r="1.700" fill="#6363c7" stroke="#161616" stroke-width=".5"/><rect x="673.3" y="462.5" width="45.6" height="6.6" fill="#545454" rx="1" /><text x="679.3" y="467.42" font-size="4.5" fill="#e4e4e4" text-anchor="start" >X</text><text x="713.9" y="467.42" font-size="4.5" fill="#e4e4e4" text-anchor="end" >2000.000</text><rect x="673.3" y="470.1" width="45.6" height="6.6" fill="#545454" rx="1" /><text x="679.3" y="475.02" font-size="4.5" fill="#e4e4e4" text-anchor="start" >Y</text><text x="713.9" y="475.02" font-size="4.5" fill="#e4e4e4" text-anchor="end" >2000.000</text><rect x="673.3" y="477.7" width="45.6" height="6.6" fill="#545454" rx="1" /><text x="679.3" y="482.62" font-size="4.5" fill="#e4e4e4" text-anchor="start" >Z</text><text x="713.9" y="482.62" font-size="4.5" fill="#e4e4e4" text-anchor="end" >2000.000</text><rect x="739" y="337.5" width="56.1" height="111.7" fill="#0c0c0c" rx="3" opacity=".55"/><rect x="740" y="336.5" width="54.1" height="109.7" fill="#303030" rx="2" /><path d="M740 344.1v-5.6a2 2 0 0 1 2-2h50.1a2 2 0 0 1 2 2v5.6z" fill="#95592a"/><path d="M743.6 339.7l1.400 1.400 1.400-1.400" fill="none" stroke="#e8e8e8" stroke-width=".6"/><text x="750" y="341.92" font-size="4.5" fill="#e8e8e8" text-anchor="start" >Noise Texture</text><text x="789.6" y="351.42" font-size="4.5" fill="#d4d4d4" text-anchor="end" >Fac</text><circle cx="794.1" cy="349.8" r="1.700" fill="#a1a1a1" stroke="#161616" stroke-width=".5"/><text x="789.6" y="360.22" font-size="4.5" fill="#d4d4d4" text-anchor="end" >Color</text><circle cx="794.1" cy="358.6" r="1.700" fill="#c7c729" stroke="#161616" stroke-width=".5"/><rect x="744.5" y="366.2" width="45.6" height="6" fill="#282828" rx="1" stroke="#414141" stroke-width=".4"/><text x="747" y="370.82" font-size="4.5" fill="#d8d8d8" text-anchor="start" >3D</text><path d="M785.9 368.7l1.200 1.200 1.200-1.200" fill="none" stroke="#d0d0d0" stroke-width=".55"/><rect x="744.5" y="376" width="45.6" height="6" fill="#282828" rx="1" stroke="#414141" stroke-width=".4"/><text x="747" y="380.62" font-size="4.5" fill="#d8d8d8" text-anchor="start" >fBM</text><path d="M785.9 378.5l1.200 1.200 1.200-1.200" fill="none" stroke="#d0d0d0" stroke-width=".55"/><rect x="744.5" y="386.9" width="4.4" height="4.4" fill="#4772b3" rx="0.8" /><path d="M745.3 389.2l1.100 1.100 1.900-2.300" fill="none" stroke="#fff" stroke-width=".7"/><text x="751" y="390.72" font-size="4.5" fill="#d4d4d4" text-anchor="start" >Normalize</text><text x="744.5" y="399.62" font-size="4.5" fill="#d4d4d4" text-anchor="start" >Vector</text><circle cx="740" cy="398" r="1.700" fill="#6363c7" stroke="#161616" stroke-width=".5"/><rect x="744" y="403.2" width="46" height="6.4" fill="#545454" rx="1" /><text x="750" y="408.02" font-size="4.5" fill="#e4e4e4" text-anchor="start" >Scale</text><text x="785" y="408.02" font-size="4.5" fill="#e4e4e4" text-anchor="end" >5.000</text><circle cx="740" cy="406.4" r="1.700" fill="#a1a1a1" stroke="#161616" stroke-width=".5"/><rect x="744" y="411.8" width="46" height="6.4" fill="#545454" rx="1" /><text x="750" y="416.62" font-size="4.5" fill="#e4e4e4" text-anchor="start" >Detail</text><text x="785" y="416.62" font-size="4.5" fill="#e4e4e4" text-anchor="end" >15.000</text><circle cx="740" cy="415" r="1.700" fill="#a1a1a1" stroke="#161616" stroke-width=".5"/><rect x="744" y="420.5" width="46" height="6.4" fill="#545454" rx="1" /><path d="M745 420.5h22v6.4h-22a1 1 0 0 1-1-1v-4.4a1 1 0 0 1 1-1z" fill="#4772b3"/><text x="750" y="425.32" font-size="4.5" fill="#e4e4e4" text-anchor="start" >Roughn...</text><text x="785" y="425.32" font-size="4.5" fill="#e4e4e4" text-anchor="end" >0.500</text><circle cx="740" cy="423.7" r="1.700" fill="#a1a1a1" stroke="#161616" stroke-width=".5"/><rect x="744" y="429" width="46" height="6.4" fill="#545454" rx="1" /><text x="750" y="433.82" font-size="4.5" fill="#e4e4e4" text-anchor="start" >Lacuna...</text><text x="785" y="433.82" font-size="4.5" fill="#e4e4e4" text-anchor="end" >34.800</text><circle cx="740" cy="432.2" r="1.700" fill="#a1a1a1" stroke="#161616" stroke-width=".5"/><rect x="744" y="437.6" width="46" height="6.4" fill="#545454" rx="1" /><text x="750" y="442.42" font-size="4.5" fill="#e4e4e4" text-anchor="start" >Distor...</text><text x="785" y="442.42" font-size="4.5" fill="#e4e4e4" text-anchor="end" >17.400</text><circle cx="740" cy="440.8" r="1.700" fill="#a1a1a1" stroke="#161616" stroke-width=".5"/><rect x="824.8" y="388" width="56.2" height="67" fill="#0c0c0c" rx="3" opacity=".55"/><rect x="825.8" y="387" width="54.2" height="65" fill="#303030" rx="2" /><path d="M825.8 394.6v-5.6a2 2 0 0 1 2-2h50.2a2 2 0 0 1 2 2v5.6z" fill="#3f3a9e"/><path d="M829.4 390.2l1.400 1.400 1.400-1.400" fill="none" stroke="#e8e8e8" stroke-width=".6"/><text x="835.8" y="392.42" font-size="4.5" fill="#e8e8e8" text-anchor="start" >Bump</text><text x="875.5" y="402.22" font-size="4.5" fill="#d4d4d4" text-anchor="end" >Normal</text><circle cx="880" cy="400.6" r="1.700" fill="#6363c7" stroke="#161616" stroke-width=".5"/><rect x="830.3" y="408.8" width="4.4" height="4.4" fill="#545454" rx="0.8" /><text x="836.8" y="412.62" font-size="4.5" fill="#d4d4d4" text-anchor="start" >Invert</text><rect x="829.8" y="416.8" width="46" height="6.4" fill="#545454" rx="1" /><path d="M830.8 416.8h5.5v6.4h-5.5a1 1 0 0 1-1-1v-4.4a1 1 0 0 1 1-1z" fill="#4772b3"/><text x="835.8" y="421.62" font-size="4.5" fill="#e4e4e4" text-anchor="start" >Strength</text><text x="870.8" y="421.62" font-size="4.5" fill="#e4e4e4" text-anchor="end" >0.157</text><circle cx="825.8" cy="420" r="1.700" fill="#a1a1a1" stroke="#161616" stroke-width=".5"/><rect x="829.8" y="425.6" width="46" height="6.4" fill="#545454" rx="1" /><text x="835.8" y="430.42" font-size="4.5" fill="#e4e4e4" text-anchor="start" >Distance</text><text x="870.8" y="430.42" font-size="4.5" fill="#e4e4e4" text-anchor="end" >1.000</text><circle cx="825.8" cy="428.8" r="1.700" fill="#a1a1a1" stroke="#161616" stroke-width=".5"/><text x="830.3" y="439.22" font-size="4.5" fill="#d4d4d4" text-anchor="start" >Height</text><circle cx="825.8" cy="437.6" r="1.700" fill="#a1a1a1" stroke="#161616" stroke-width=".5"/><text x="830.3" y="447.62" font-size="4.5" fill="#d4d4d4" text-anchor="start" >Normal</text><circle cx="825.8" cy="446" r="1.700" fill="#6363c7" stroke="#161616" stroke-width=".5"/></svg>
<div class="a" style="left:719px;top:24px;width:4px;height:377px;background:#2c2c2c;border-radius:2px;"></div>
<div class="a" style="left:7px;top:401px;width:710px;height:3.5px;background:#2e2e2e;border-radius:2px;"></div>
<div class="a" style="left:6.6px;top:3.5px;width:28.5px;height:17.5px;background:#282828;border-radius:4px;box-shadow:0 0 0 .5px #3a3a3a;"></div>
<svg style="left:10.5px;top:5px;" width="14" height="14" viewBox="0 0 14 14"><circle cx="7" cy="7" r="6" fill="none" stroke="#e6e6e6" stroke-width="1.300"/><path d="M3.500 6a3.800 3.800 0 0 1 3-3" fill="none" stroke="#e6e6e6" stroke-width="1.200" stroke-linecap="round"/></svg>
<svg style="left:26.5px;top:10.5px;" width="6.5" height="3.6" viewBox="0 0 6.5 3.6"><path d="M.5 .5L3.25 3.1L6 .5" fill="none" stroke="#e0e0e0" stroke-width="1.3" stroke-linecap="round" stroke-linejoin="round"/></svg>
<div class="a" style="left:40.5px;top:3.5px;width:83.5px;height:17.5px;background:#282828;border-radius:4px;box-shadow:0 0 0 .5px #3a3a3a;"></div>
<svg style="left:44px;top:5px;" width="14" height="14" viewBox="0 0 14 14"><path d="M.7 3.500V1.500a.8.800 0 0 1 .8-.8h2M10.500 .7h2a.8.800 0 0 1 .8.800v2M13.300 10.500v2a.8.800 0 0 1-.8.800h-2M3.500 13.300h-2a.8.800 0 0 1-.8-.8v-2" fill="none" stroke="#b0b0b0" stroke-width="1.100"/><rect x="3" y="3" width="8" height="8" rx=".8" fill="#e6e6e6"/></svg>
<div class="t u" style="left:64px;top:9.4px;font-size:10.2px;color:#e6e6e6;">Object</div>
<svg style="left:115px;top:10.5px;" width="6.5" height="3.6" viewBox="0 0 6.5 3.6"><path d="M.5 .5L3.25 3.1L6 .5" fill="none" stroke="#e0e0e0" stroke-width="1.3" stroke-linecap="round" stroke-linejoin="round"/></svg>
<div class="t u" style="left:136px;top:9.4px;font-size:10.2px;color:#e6e6e6;">View</div>
<div class="t u" style="left:173.5px;top:9.4px;font-size:10.2px;color:#e6e6e6;">Select</div>
<div class="t u" style="left:218px;top:9.4px;font-size:10.2px;color:#e6e6e6;">Add</div>
<div class="t u" style="left:251.5px;top:9.4px;font-size:10.2px;color:#e6e6e6;">Node</div>
<div class="a" style="left:290.5px;top:6px;width:12px;height:12px;background:#4772b3;border-radius:2.5px;"></div>
<svg style="left:292.5px;top:8.5px;" width="8" height="7" viewBox="0 0 8 7"><path d="M.8 3.500l2.300 2.300L7.200 .9" fill="none" stroke="#fff" stroke-width="1.500" stroke-linecap="round" stroke-linejoin="round"/></svg>
<div class="t u" style="left:306px;top:9.4px;font-size:10.2px;color:#f0f0f0;">Use Nodes</div>
<div class="a" style="left:390.5px;top:3.5px;width:72.5px;height:17.5px;background:#282828;border-radius:4px;box-shadow:0 0 0 .5px #3a3a3a;"></div>
<div class="t u" style="left:397px;top:9.4px;font-size:10.2px;color:#e6e6e6;">Slot 1</div>
<svg style="left:453.5px;top:10.5px;" width="6.5" height="3.6" viewBox="0 0 6.5 3.6"><path d="M.5 .5L3.25 3.1L6 .5" fill="none" stroke="#e0e0e0" stroke-width="1.3" stroke-linecap="round" stroke-linejoin="round"/></svg>
<div class="a" style="left:469.5px;top:3.5px;width:28.5px;height:17.5px;background:#282828;border-radius:4px 0 0 4px;box-shadow:0 0 0 .5px #3a3a3a;"></div>
<svg style="left:473.5px;top:5px;" width="14" height="14" viewBox="0 0 14 14"><circle cx="7" cy="7" r="6.200" fill="none" stroke="#e6e6e6" stroke-width="1.200"/><path d="M7 7V.8A6.200 6.200 0 0 0 .8 7z" fill="#e6e6e6"/><path d="M7 7v6.200A6.200 6.200 0 0 0 13.200 7z" fill="#e6e6e6"/></svg>
<svg style="left:489.5px;top:10.5px;" width="6.5" height="3.6" viewBox="0 0 6.5 3.6"><path d="M.5 .5L3.25 3.1L6 .5" fill="none" stroke="#e0e0e0" stroke-width="1.3" stroke-linecap="round" stroke-linejoin="round"/></svg>
<div class="a" style="left:498px;top:3.5px;width:111px;height:17.5px;background:#1a1a1a;"></div>
<div class="t u" style="left:504.5px;top:9.4px;font-size:10.2px;color:#e6e6e6;">Aluminum</div>
<div class="a" style="left:609px;top:3.5px;width:78px;height:17.5px;background:#4b4b4b;border-radius:0 4px 4px 0;"></div>
<div class="a" style="left:630.5px;top:3.5px;width:0.8px;height:17.5px;background:#3d3d3d;"></div>
<div class="a" style="left:649px;top:3.5px;width:0.8px;height:17.5px;background:#3d3d3d;"></div>
<div class="a" style="left:667.5px;top:3.5px;width:0.8px;height:17.5px;background:#3d3d3d;"></div>
<div class="t u" style="left:616.5px;top:9.4px;font-size:10.2px;color:#e0e0e0;">3</div>
<svg style="left:632.5px;top:5px;" width="14" height="15" viewBox="0 0 14 15"><path d="M7 .8c1.800 1 3.800 1.500 6 1.500v4.200c0 3.500-2.500 6.400-6 7.700-3.500-1.300-6-4.200-6-7.700V2.300c2.200 0 4.200-.5 6-1.500z" fill="none" stroke="#b8b8b8" stroke-width="1.200" stroke-linejoin="round"/></svg>
<svg style="left:650.8px;top:4.8px;" width="15" height="15" viewBox="0 0 15 15"><path d="M4.800 1h5.500l3 3v7h-8.500z" fill="none" stroke="#d8d8d8" stroke-width="1.300" stroke-linejoin="round"/><path d="M10 1v3.300h3.300" fill="none" stroke="#d8d8d8" stroke-width="1.100"/><path d="M3.200 4.500H1.500v9h7v-1.300" fill="none" stroke="#d8d8d8" stroke-width="1.300" stroke-linejoin="round"/></svg>
<svg style="left:673px;top:8px;" width="9" height="9" viewBox="0 0 9 9"><path d="M.7 .7L8.3 8.3M8.3 .7L.7 8.3" stroke="#e0e0e0" stroke-width="1.300" stroke-linecap="round"/></svg>
<svg style="left:693px;top:4.5px;" width="15" height="15" viewBox="0 0 15 15"><g transform="rotate(40 7.500 7.500)"><path d="M5 .8h5v1.200l-.8.600v3.600l2 2.300v1H3.800v-1l2-2.300V2.600L5 2z" fill="none" stroke="#a0a0a0" stroke-width="1.100" stroke-linejoin="round"/><path d="M7.500 9.500v5.300" stroke="#a0a0a0" stroke-width="1.200" stroke-linecap="round"/></g></svg>
<div class="a" style="left:6.6px;top:32px;width:36.5px;height:31px;background:#4772b3;border-radius:4px;"></div>
<div class="a" style="left:6.6px;top:68.6px;width:36.5px;height:31.5px;background:#232323;border-radius:4px;box-shadow:0 0 0 .6px #353535;"></div>
<div class="a" style="left:6.6px;top:105.6px;width:36.5px;height:31.5px;background:#232323;border-radius:4px;box-shadow:0 0 0 .6px #353535;"></div>
<svg style="left:13px;top:35.5px;" width="24" height="24" viewBox="0 0 24 24"><rect x="1.500" y="1.500" width="21" height="21" fill="none" stroke="#e8b050" stroke-width="1.400" stroke-dasharray="4.200 2.800"/><path d="M9 6.500v12l3.200-3 5.300-.3z" fill="#f0f0f0"/></svg>
<svg style="left:37.5px;top:57.5px;" width="4" height="4" viewBox="0 0 4 4"><path d="M4 0v4H0z" fill="#9ab0d8"/></svg>
<svg style="left:11.5px;top:73px;" width="26" height="22" viewBox="0 0 26 22"><path d="M3.500 13.500L14.500 2.500l3 3L6.500 16.500l-4 1z" fill="#e6e6e6"/><path d="M15.500 1.500l1-1 3 3-1 1z" fill="#e6e6e6"/><path d="M4 20c4-1 6-5 10-5.500s5 4 10 3" fill="none" stroke="#7fc4a8" stroke-width="1.200"/></svg>
<svg style="left:37.5px;top:94.5px;" width="4" height="4" viewBox="0 0 4 4"><path d="M4 0v4H0z" fill="#9a9a9a"/></svg>
<svg style="left:12.5px;top:111px;" width="25" height="21" viewBox="0 0 25 21"><path d="M0 11.500h25" stroke="#e07060" stroke-width="1.200"/><path d="M8 19.500L14.500 6M17 19.500L10.500 6" stroke="#f0f0f0" stroke-width="1.600" stroke-linecap="round"/><circle cx="9.800" cy="4" r="2.200" fill="none" stroke="#f0f0f0" stroke-width="1.300"/><circle cx="15.200" cy="4" r="2.200" fill="none" stroke="#f0f0f0" stroke-width="1.300"/></svg>
<svg style="left:67.5px;top:36px;" width="14" height="14" viewBox="0 0 14 14"><path d="M.7 3.500V1.500a.8.800 0 0 1 .8-.8h2M10.500 .7h2a.8.800 0 0 1 .8.800v2M13.300 10.500v2a.8.800 0 0 1-.8.800h-2M3.500 13.300h-2a.8.800 0 0 1-.8-.8v-2" fill="none" stroke="#b0b0b0" stroke-width="1.100"/><rect x="3" y="3" width="8" height="8" rx=".8" fill="#e6e6e6"/></svg>
<div class="t u" style="left:89.5px;top:40.2px;font-size:9.8px;color:#e6e6e6;">Solid_7</div>
<svg style="left:140px;top:40px;" width="4" height="7.5" viewBox="0 0 4 7.5"><path d="M.5 .5L3.5 3.75L.5 7" fill="none" stroke="#e0e0e0" stroke-width="1.3" stroke-linecap="round" stroke-linejoin="round"/></svg>
<svg style="left:153.5px;top:36px;" width="14" height="14" viewBox="0 0 14 14"><path d="M2.300 2.300h9.400L7 12z" fill="none" stroke="#e6e6e6" stroke-width="1.200" stroke-linejoin="round"/><circle cx="2.300" cy="2.300" r="1.600" fill="#1d1d1d" stroke="#e6e6e6" stroke-width="1"/><circle cx="11.700" cy="2.300" r="1.600" fill="#1d1d1d" stroke="#e6e6e6" stroke-width="1"/><circle cx="7" cy="12" r="1.600" fill="#1d1d1d" stroke="#e6e6e6" stroke-width="1"/></svg>
<div class="t u" style="left:175.5px;top:40.2px;font-size:9.8px;color:#e6e6e6;">Solid_7</div>
<svg style="left:225.5px;top:40px;" width="4" height="7.5" viewBox="0 0 4 7.5"><path d="M.5 .5L3.5 3.75L.5 7" fill="none" stroke="#e0e0e0" stroke-width="1.3" stroke-linecap="round" stroke-linejoin="round"/></svg>
<svg style="left:240px;top:36.5px;" width="14" height="14" viewBox="0 0 14 14"><circle cx="7" cy="7" r="6.200" fill="none" stroke="#e6e6e6" stroke-width="1.200"/><path d="M7 7V.8A6.200 6.200 0 0 0 .8 7z" fill="#e6e6e6"/><path d="M7 7v6.200A6.200 6.200 0 0 0 13.200 7z" fill="#e6e6e6"/></svg>
<div class="t u" style="left:261px;top:40.2px;font-size:9.8px;color:#e6e6e6;">Aluminum</div>
<svg style="left:717.5px;top:39.5px;" width="4" height="7" viewBox="0 0 4 7"><path d="M3.500 .5L.7 3.500l2.800 3" fill="none" stroke="#8a8a8a" stroke-width="1"/></svg>
</div>
<!-- right 3d viewport (rendered) -->
<div class="area" id="rend" style="left:597px;top:495px;width:723px;height:454px;background:#2f2f2f">
<svg style="left:50px;top:59px" width="650" height="365.600" viewBox="647 554 650 365.600"><defs><radialGradient id="rbg" cx="935" cy="815" r="440" gradientUnits="userSpaceOnUse" gradientTransform="translate(935 815) scale(1 .74) translate(-935 -815)"><stop offset="0" stop-color="#dadada"/><stop offset=".25" stop-color="#d2d2d2"/><stop offset=".5" stop-color="#bebebe"/><stop offset=".75" stop-color="#adadad"/><stop offset="1" stop-color="#a2a2a2"/></radialGradient><linearGradient id="rbar" x1="0" y1="0" x2="0" y2="1"><stop offset="0" stop-color="#b2b2b2"/><stop offset=".14" stop-color="#d4d4d4"/><stop offset=".45" stop-color="#c6c6c6"/><stop offset=".8" stop-color="#b0b0b0"/><stop offset="1" stop-color="#949494"/></linearGradient><linearGradient id="rhan" x1="816" y1="0" x2="940" y2="0" gradientUnits="userSpaceOnUse" gradientTransform="skewX(8)"><stop offset="0" stop-color="#c6c6c6"/><stop offset=".12" stop-color="#bebebe"/><stop offset=".3" stop-color="#adadad"/><stop offset=".44" stop-color="#9c9c9c"/><stop offset=".55" stop-color="#a8a8a8"/><stop offset=".66" stop-color="#909090"/><stop offset=".78" stop-color="#828282"/><stop offset=".9" stop-color="#9a9a9a"/><stop offset="1" stop-color="#b4b4b4"/></linearGradient><linearGradient id="rface" x1="0" y1="0" x2="1" y2="1"><stop offset="0" stop-color="#e6e6e6"/><stop offset=".5" stop-color="#cecece"/><stop offset="1" stop-color="#a0a0a0"/></linearGradient><linearGradient id="hmg" x1="0" y1="634" x2="0" y2="656" gradientUnits="userSpaceOnUse"><stop offset="0" stop-color="#fff" stop-opacity="0"/><stop offset="1" stop-color="#fff" stop-opacity="1"/></linearGradient><mask id="hm" maskUnits="userSpaceOnUse" x="890" y="620" width="190" height="310"><rect x="890" y="620" width="190" height="310" fill="url(#hmg)"/></mask><pattern id="perf" x="1006" y="574" width="5.200" height="5.200" patternUnits="userSpaceOnUse" patternTransform="rotate(-3 1006 574)"><circle cx="2.600" cy="2.600" r="1.150" fill="#3a3a3a"/></pattern><filter id="bl2" x="-20%" y="-20%" width="140%" height="140%"><feGaussianBlur stdDeviation="2.500"/></filter><filter id="bl1" x="-20%" y="-20%" width="140%" height="140%"><feGaussianBlur stdDeviation=".6"/></filter><filter id="bl6" x="-30%" y="-30%" width="160%" height="160%"><feGaussianBlur stdDeviation="7"/></filter><clipPath id="hclip"><path d="M910.3 634.0C910.5 645.8 910.8 663.8 911.5 675.0C912.2 686.2 912.9 692.8 914.7 707.0C916.5 721.2 920.6 746.0 922.4 760.0C924.2 774.0 924.1 780.7 925.5 791.0C926.9 801.3 928.5 811.7 931.0 822.0C933.5 832.3 936.2 843.9 940.2 852.9C944.2 861.9 949.5 869.5 955.0 876.0C960.5 882.5 966.7 888.1 973.0 892.0C979.3 895.9 985.9 899.0 992.9 899.3C999.9 899.5 1008.0 897.0 1015.0 893.5C1022.0 890.0 1029.4 884.8 1035.0 878.0C1040.6 871.2 1045.3 862.2 1048.6 852.9C1051.9 843.6 1054.1 832.3 1054.8 822.0C1055.5 811.7 1053.9 801.3 1052.5 791.0C1051.1 780.7 1049.2 776.4 1046.3 760.0C1043.4 743.6 1039.9 710.9 1035.1 692.6C1030.3 674.3 1023.5 660 1019.5 650.0C1016.5 642 1015.5 638 1015.0 634.0z"/></clipPath><linearGradient id="rcord" x1="0" y1="0" x2="1" y2="0"><stop offset="0" stop-color="#8e8e8e"/><stop offset=".35" stop-color="#bcbcbc"/><stop offset=".7" stop-color="#b0b0b0"/><stop offset="1" stop-color="#969696"/></linearGradient></defs><rect x="647" y="554" width="650" height="366" fill="url(#rbg)"/><ellipse cx="905" cy="690" rx="60" ry="40" fill="#9a9a9a" opacity=".22" filter="url(#bl6)"/><path d="M879 577.500h7a3.500 3.500 0 0 1 3.500 3.500V671.500a3.500 3.500 0 0 1-3.500 3.500H879z" fill="#2c2c2c"/><rect x="841.600" y="575.600" width="41" height="101.300" rx="5" fill="#5c5c5c"/><path d="M846 575.600h35a4 4 0 0 1 0 1.500h-35z" fill="#7c7c7c" opacity=".6"/><path d="M865.600 590.300L1088 573.800V654.500L865.600 651.200C858 651 855.300 636 855.300 620.700S858 590.600 865.600 590.300z" fill="url(#rbar)"/><path d="M868 590.200C862 596 861 610 861 620.700S862 646 868 651.200" fill="none" stroke="#a0a0a0" stroke-width=".8"/><path d="M855.300 620.700C855.300 606 858 590.600 865.600 590.300L868 590.100V651.200L865.600 651.200C858 651 855.300 636 855.300 620.700z" fill="#e8e8e8" opacity=".5"/><path d="M1006.800 581.800L1088 573.800V654.500L1006.800 653.300C1003 640 1003 600 1006.800 581.800z" fill="#b4b4b4" opacity=".4"/><path d="M1006.800 581.800L1088 573.800V654.500L1006.800 653.300C1003 640 1003 600 1006.800 581.800z" fill="url(#perf)"/><text x="871" y="623.600" font-size="8" fill="#8c8c8c" font-family="Liberation Sans,sans-serif" transform="rotate(-3.500 871 623)" textLength="28" lengthAdjust="spacingAndGlyphs">AIRSHOT</text><text x="900.500" y="617" font-size="3" fill="#a0a0a0" font-family="Liberation Sans,sans-serif" transform="rotate(-3.500 871 623)">PURE</text><g mask="url(#hm)"><path d="M910.3 634.0C910.5 645.8 910.8 663.8 911.5 675.0C912.2 686.2 912.9 692.8 914.7 707.0C916.5 721.2 920.6 746.0 922.4 760.0C924.2 774.0 924.1 780.7 925.5 791.0C926.9 801.3 928.5 811.7 931.0 822.0C933.5 832.3 936.2 843.9 940.2 852.9C944.2 861.9 949.5 869.5 955.0 876.0C960.5 882.5 966.7 888.1 973.0 892.0C979.3 895.9 985.9 899.0 992.9 899.3C999.9 899.5 1008.0 897.0 1015.0 893.5C1022.0 890.0 1029.4 884.8 1035.0 878.0C1040.6 871.2 1045.3 862.2 1048.6 852.9C1051.9 843.6 1054.1 832.3 1054.8 822.0C1055.5 811.7 1053.9 801.3 1052.5 791.0C1051.1 780.7 1049.2 776.4 1046.3 760.0C1043.4 743.6 1039.9 710.9 1035.1 692.6C1030.3 674.3 1023.5 660 1019.5 650.0C1016.5 642 1015.5 638 1015.0 634.0z" fill="url(#rhan)"/><g clip-path="url(#hclip)"><rect x="900" y="626" width="135" height="56" fill="#d6d6d6" opacity=".5" filter="url(#bl6)"/><path d="M925 846L1060 846L1060 910L925 910z" fill="#a2a2a2" opacity=".85" filter="url(#bl6)"/><path d="M1000 852C1015 860 1035 850 1050 820L1075 900L1000 915z" fill="#7c7c7c" opacity=".55" filter="url(#bl6)"/><path d="M925 830C935 870 960 890 990 897L985 915L910 900z" fill="#c4c4c4" opacity=".5" filter="url(#bl2)"/></g></g><path d="M953 697C949 682 957 672 968.400 673C972 673 965 680 962 696L978 765L989 838L986 840L971 765z" fill="#c4c4c4" opacity=".5" filter="url(#bl1)"/><path d="M958.200 695.500C955 683 960 676.600 970 676.600C981 676.600 987 684 989.500 697L995 765L1000.500 832C1001 842 997 847.900 992.500 847.900C988.500 847.900 988 842 987.200 834.800L974.200 765.100z" fill="#d8d8d8"/><circle cx="990.500" cy="844.500" r="1.300" fill="#fff" opacity=".85"/><path d="M1041 833C1038 845 1035 853 1033.700 862C1040 869 1043.500 885 1046.700 919.600H1058.400C1056.500 890 1054.500 872 1052.800 861C1052 850 1051 841 1050 833z" fill="url(#rcord)"/><g transform="rotate(-9 1025.800 694)"><ellipse cx="1025.800" cy="694" rx="9.600" ry="16" fill="#a2a2a2"/><ellipse cx="1026.800" cy="694.500" rx="8.300" ry="14.500" fill="#c6c6c6"/><ellipse cx="1027.500" cy="695" rx="6.300" ry="11.500" fill="#cdcdcd" stroke="#b0b0b0" stroke-width=".6"/><path d="M1025.500 692.500a3 3.500 0 1 0 4 0M1027.500 691v3.500" fill="none" stroke="#a0a0a0" stroke-width=".7"/></g><ellipse cx="1031.700" cy="734.700" rx="5" ry="6" fill="#adadad" transform="rotate(-9 1031.700 734.700)"/><ellipse cx="1036.600" cy="763.700" rx="5" ry="6" fill="#adadad" transform="rotate(-9 1036.600 763.700)"/><circle cx="1025" cy="738.400" r=".8" fill="#5fe05f"/><circle cx="1028.500" cy="760.800" r=".8" fill="#5fe05f"/><circle cx="1028.800" cy="763.700" r=".8" fill="#5fe05f"/><circle cx="1029.100" cy="766.600" r=".8" fill="#5fe05f"/><ellipse cx="1092.600" cy="613.600" rx="25.700" ry="40.200" fill="url(#rface)"/><ellipse cx="1091.600" cy="613.800" rx="22.300" ry="36" fill="#e0e0e0"/><ellipse cx="1091.700" cy="614.200" rx="17.800" ry="26.500" fill="#e4e4e4" stroke="#4cc24c" stroke-width="1.100"/></svg>
<div class="a" style="left:6.6px;top:2.5px;width:29px;height:17.5px;background:#282828;border-radius:4px;box-shadow:0 0 0 .5px #3a3a3a;"></div>
<svg style="left:10px;top:3.5px;" width="16" height="15" viewBox="0 0 16 15"><path d="M1 9h11M2.500 13.500L5 6M10.500 13.500L8.500 6M.5 12h12" stroke="#e6e6e6" stroke-width="1.100" fill="none"/><circle cx="10.500" cy="4" r="3.300" fill="#e6e6e6"/><circle cx="9.600" cy="3.200" r="1.200" fill="#282828"/></svg>
<svg style="left:27.5px;top:10.5px;" width="6.5" height="3.6" viewBox="0 0 6.5 3.6"><path d="M.5 .5L3.25 3.1L6 .5" fill="none" stroke="#e0e0e0" stroke-width="1.3" stroke-linecap="round" stroke-linejoin="round"/></svg>
<div class="a" style="left:41.5px;top:2.5px;width:98.5px;height:17.5px;background:#282828;border-radius:4px;box-shadow:0 0 0 .5px #3a3a3a;"></div>
<svg style="left:45px;top:4.5px;" width="14" height="14" viewBox="0 0 14 14"><path d="M.7 3.500V1.500a.8.800 0 0 1 .8-.8h2M10.500 .7h2a.8.800 0 0 1 .8.800v2M13.300 10.500v2a.8.800 0 0 1-.8.800h-2M3.500 13.300h-2a.8.800 0 0 1-.8-.8v-2" fill="none" stroke="#b0b0b0" stroke-width="1.100"/><rect x="3" y="3" width="8" height="8" rx=".8" fill="#e6e6e6"/></svg>
<div class="t u" style="left:64.5px;top:8.3px;font-size:10.2px;color:#e6e6e6;">Object Mode</div>
<svg style="left:132px;top:10.5px;" width="6.5" height="3.6" viewBox="0 0 6.5 3.6"><path d="M.5 .5L3.25 3.1L6 .5" fill="none" stroke="#e0e0e0" stroke-width="1.3" stroke-linecap="round" stroke-linejoin="round"/></svg>
<div class="t u" style="left:153.5px;top:8.3px;font-size:10.2px;color:#e6e6e6;">View</div>
<div class="t u" style="left:191px;top:8.3px;font-size:10.2px;color:#e6e6e6;">Select</div>
<div class="t u" style="left:235.5px;top:8.3px;font-size:10.2px;color:#e6e6e6;">Add</div>
<div class="t u" style="left:269.5px;top:8.3px;font-size:10.2px;color:#e6e6e6;">Object</div>
<div class="a" style="left:324.5px;top:2.5px;width:73.5px;height:17.5px;background:#282828;border-radius:4px;box-shadow:0 0 0 .5px #3a3a3a;"></div>
<svg style="left:328px;top:4px;" width="15" height="15" viewBox="0 0 15 15"><path d="M8.500 7.500L2.500 5.500M8.500 7.500l3.500-5.500M8.500 7.500l3 5.500" stroke="#e6e6e6" stroke-width="1.100" fill="none"/><circle cx="8.500" cy="7.500" r="1.700" fill="#2b2b2b" stroke="#e6e6e6" stroke-width="1"/><path d="M0 4.700l3.600-1.100-1 3.200zM13.300 0l.3 3.600-3-1.900zM13 15l-3.200-1.600 2.900-1.700z" fill="#e6e6e6"/></svg>
<div class="t u" style="left:347.5px;top:8.3px;font-size:10.2px;color:#e6e6e6;">Local</div>
<svg style="left:387.5px;top:10.5px;" width="6.5" height="3.6" viewBox="0 0 6.5 3.6"><path d="M.5 .5L3.25 3.1L6 .5" fill="none" stroke="#e0e0e0" stroke-width="1.3" stroke-linecap="round" stroke-linejoin="round"/></svg>
<div class="a" style="left:403.5px;top:2.5px;width:28px;height:17.5px;background:#282828;border-radius:4px;box-shadow:0 0 0 .5px #3a3a3a;"></div>
<svg style="left:406.5px;top:4px;" width="15" height="15" viewBox="0 0 15 15"><circle cx="5" cy="9.500" r="3.800" fill="none" stroke="#e6e6e6" stroke-width="1.300"/><circle cx="10" cy="5" r="3.800" fill="none" stroke="#e6e6e6" stroke-width="1.300"/><circle cx="7.500" cy="7.300" r="1" fill="#e6e6e6"/></svg>
<svg style="left:422px;top:10.5px;" width="6.5" height="3.6" viewBox="0 0 6.5 3.6"><path d="M.5 .5L3.25 3.1L6 .5" fill="none" stroke="#e0e0e0" stroke-width="1.3" stroke-linecap="round" stroke-linejoin="round"/></svg>
<div class="a" style="left:437.5px;top:2.5px;width:17px;height:17.5px;background:#4b4b4b;border-radius:4px 0 0 4px;"></div>
<svg style="left:438.5px;top:4px;" width="15" height="15" viewBox="0 0 15 15"><g transform="rotate(225 7.500 7.500)"><path d="M2.500 1v6.500a5 5 0 0 0 10 0V1h-3v6.500a2 2 0 0 1-4 0V1z" fill="none" stroke="#9a9a9a" stroke-width="1.200" stroke-linejoin="round"/></g></svg>
<div class="a" style="left:454.5px;top:2.5px;width:29px;height:17.5px;background:#282828;border-radius:0 4px 4px 0;"></div>
<svg style="left:456.5px;top:4px;" width="15" height="15" viewBox="0 0 15 15"><path d="M1 10.500h12.500M1.500 8v5M5.500 8.500v4M9.500 8.500v4M13.500 8v5" stroke="#e6e6e6" stroke-width="1.100"/><rect x="10.500" y="1.500" width="3.500" height="3.500" fill="#e6e6e6"/></svg>
<svg style="left:474.5px;top:10.5px;" width="6.5" height="3.6" viewBox="0 0 6.5 3.6"><path d="M.5 .5L3.25 3.1L6 .5" fill="none" stroke="#e0e0e0" stroke-width="1.3" stroke-linecap="round" stroke-linejoin="round"/></svg>
<div class="a" style="left:489.5px;top:2.5px;width:17.5px;height:17.5px;background:#4b4b4b;border-radius:4px 0 0 4px;"></div>
<svg style="left:491px;top:4px;" width="15" height="15" viewBox="0 0 15 15"><circle cx="7.500" cy="7.500" r="6" fill="none" stroke="#a8a8a8" stroke-width="1.200"/><circle cx="7.500" cy="7.500" r="2" fill="#a8a8a8"/></svg>
<div class="a" style="left:507px;top:2.5px;width:30px;height:17.5px;background:#2b2b2b;border-radius:0 4px 4px 0;"></div>
<svg style="left:510px;top:4px;" width="15" height="15" viewBox="0 0 15 15"><path d="M1 13.500c4 0 4-11.500 6.500-11.500s2.500 11.500 6.500 11.500" fill="none" stroke="#8a8a8a" stroke-width="1.200" stroke-linecap="round"/></svg>
<svg style="left:527.5px;top:10.5px;" width="6.5" height="3.6" viewBox="0 0 6.5 3.6"><path d="M.5 .5L3.25 3.1L6 .5" fill="none" stroke="#4a4a4a" stroke-width="1.3" stroke-linecap="round" stroke-linejoin="round"/></svg>
<div class="a" style="left:553px;top:2.5px;width:28.5px;height:17.5px;background:#282828;border-radius:4px;box-shadow:0 0 0 .5px #3a3a3a;"></div>
<svg style="left:555.5px;top:3.5px;" width="17" height="16" viewBox="0 0 17 16"><path d="M4.500 5C6 2.500 8.300 1.300 10.500 1.300S15 2.500 16.500 5C15 7.500 12.700 8.700 10.500 8.700S6 7.500 4.500 5z" fill="#e6e6e6"/><circle cx="10.500" cy="5" r="2.200" fill="#2b2b2b"/><circle cx="10.500" cy="5" r=".9" fill="#e6e6e6"/><path d="M1 6.500l7.500 3.300-3 1.300 1.800 3.400-1.500.8-1.800-3.400-2.300 2z" fill="#e6e6e6" stroke="#2b2b2b" stroke-width=".6"/></svg>
<svg style="left:572.5px;top:10.5px;" width="6.5" height="3.6" viewBox="0 0 6.5 3.6"><path d="M.5 .5L3.25 3.1L6 .5" fill="none" stroke="#e0e0e0" stroke-width="1.3" stroke-linecap="round" stroke-linejoin="round"/></svg>
<div class="a" style="left:587px;top:2.5px;width:17.5px;height:17.5px;background:#4b4b4b;border-radius:4px 0 0 4px;"></div>
<svg style="left:588.3px;top:4px;" width="15" height="15" viewBox="0 0 15 15"><path d="M1 4.500c5 0 9 3 9.500 10" fill="none" stroke="#e6e6e6" stroke-width="1.300" stroke-linecap="round"/><path d="M3.500 12L13 2.500" stroke="#e6e6e6" stroke-width="1.300"/><path d="M13.800 1.200l-1 4.300-3.300-3.300z" fill="#e6e6e6"/><circle cx="3.300" cy="12.200" r="1.700" fill="#4b4b4b" stroke="#e6e6e6" stroke-width="1.200"/></svg>
<div class="a" style="left:604.5px;top:2.5px;width:18px;height:17.5px;background:#2b2b2b;border-radius:0 4px 4px 0;"></div>
<svg style="left:610px;top:10.5px;" width="6.5" height="3.6" viewBox="0 0 6.5 3.6"><path d="M.5 .5L3.25 3.1L6 .5" fill="none" stroke="#4a4a4a" stroke-width="1.3" stroke-linecap="round" stroke-linejoin="round"/></svg>
<div class="a" style="left:628.8px;top:2.5px;width:17.5px;height:17.5px;background:#4b4b4b;border-radius:4px 0 0 4px;"></div>
<svg style="left:629.8px;top:4px;" width="16" height="15" viewBox="0 0 16 15"><circle cx="9.500" cy="6" r="5.500" fill="#e6e6e6"/><circle cx="6" cy="9.300" r="4.800" fill="none" stroke="#e6e6e6" stroke-width="1.300"/><circle cx="9.300" cy="6.200" r="2" fill="#4b4b4b"/><path d="M6 9.300a4.800 4.800 0 0 1 4.800-4.800" stroke="#4b4b4b" stroke-width="1.100" fill="none"/></svg>
<div class="a" style="left:646.3px;top:2.5px;width:18px;height:17.5px;background:#2b2b2b;border-radius:0 4px 4px 0;"></div>
<svg style="left:651.8px;top:10.5px;" width="6.5" height="3.6" viewBox="0 0 6.5 3.6"><path d="M.5 .5L3.25 3.1L6 .5" fill="none" stroke="#4a4a4a" stroke-width="1.3" stroke-linecap="round" stroke-linejoin="round"/></svg>
<div class="a" style="left:670.5px;top:2.5px;width:17.5px;height:17.5px;background:#3a3a3a;border-radius:4px;"></div>
<svg style="left:671.8px;top:4px;" width="15" height="15" viewBox="0 0 15 15"><rect x="4.500" y="1" width="9.500" height="9.500" rx="1" fill="none" stroke="#5a5a5a" stroke-width="1.100"/><rect x="1" y="4.500" width="9.500" height="9.500" rx="1" fill="none" stroke="#5a5a5a" stroke-width="1.100" stroke-dasharray="2 1.200"/></svg>
<div class="a" style="left:693.5px;top:2.5px;width:40px;height:17.5px;background:#4b4b4b;border-radius:4px 0 0 4px;"></div>
<svg style="left:695px;top:4px;" width="15" height="15" viewBox="0 0 15 15"><circle cx="7.500" cy="7.500" r="6.300" fill="none" stroke="#e6e6e6" stroke-width="1.200"/><ellipse cx="7.500" cy="7.500" rx="2.800" ry="6.300" fill="none" stroke="#e6e6e6" stroke-width="1"/><path d="M1.200 7.500h12.600M2.300 4h10.400M2.300 11h10.400" stroke="#e6e6e6" stroke-width="1"/></svg>
<svg style="left:712.5px;top:4px;" width="15" height="15" viewBox="0 0 15 15"><circle cx="7.500" cy="7.500" r="6.600" fill="#e0e0e0"/></svg>
<svg style="left:10.5px;top:23px;" width="24" height="24" viewBox="0 0 24 24"><path d="M12 1.500l2.800 3.800H9.200zM12 22.500l2.800-3.800H9.200zM1.500 12l3.800-2.800v5.600zM22.500 12l-3.800-2.800v5.600z" fill="#e6e6e6"/><path d="M12 6.500v3.500M12 14v3.500M6.500 12H10M14 12h3.500" stroke="#e6e6e6" stroke-width="1.500" stroke-dasharray="1.700 1.200"/></svg>
<div class="t u" style="left:40px;top:31.9px;font-size:10.2px;color:#e0e0e0;">Orientation:</div>
<div class="a" style="left:101px;top:26.5px;width:91px;height:17.5px;background:#282828;border-radius:4px;box-shadow:0 0 0 .5px #3a3a3a;"></div>
<svg style="left:104px;top:28px;" width="15" height="15" viewBox="0 0 15 15"><path d="M4 11V1.500M4 11h9.500" stroke="#e6e6e6" stroke-width="1" stroke-dasharray="1.500 1.200"/><path d="M4 0l1.600 2.500H2.400zM15 11l-2.500 1.600V9.400zM.3 14.700l.5-2.800 2.200 2.200z" fill="#e6e6e6"/><path d="M4 11l-2.500 2.500" stroke="#e6e6e6" stroke-width="1"/><circle cx="4" cy="11" r="1.800" fill="#e6e6e6"/></svg>
<div class="t u" style="left:123.5px;top:31.9px;font-size:10.2px;color:#e6e6e6;">Default</div>
<svg style="left:183px;top:34.5px;" width="6.5" height="3.6" viewBox="0 0 6.5 3.6"><path d="M.5 .5L3.25 3.1L6 .5" fill="none" stroke="#e0e0e0" stroke-width="1.3" stroke-linecap="round" stroke-linejoin="round"/></svg>
<div class="t u" style="left:204.5px;top:31.9px;font-size:10.2px;color:#e0e0e0;">Drag:</div>
<div class="a" style="left:239.5px;top:26.5px;width:69.5px;height:17.5px;background:#282828;border-radius:4px;box-shadow:0 0 0 .5px #3a3a3a;"></div>
<div class="t u" style="left:246px;top:31.9px;font-size:10.2px;color:#e6e6e6;">Select Box</div>
<svg style="left:299.5px;top:34.5px;" width="6.5" height="3.6" viewBox="0 0 6.5 3.6"><path d="M.5 .5L3.25 3.1L6 .5" fill="none" stroke="#e0e0e0" stroke-width="1.3" stroke-linecap="round" stroke-linejoin="round"/></svg>
<div class="a" style="left:657px;top:26.5px;width:59px;height:17.5px;background:#282828;border-radius:4px;box-shadow:0 0 0 .5px #3a3a3a;"></div>
<div class="t u" style="left:663.5px;top:31.9px;font-size:10.2px;color:#e6e6e6;">Options</div>
<svg style="left:707.5px;top:34.5px;" width="6.5" height="3.6" viewBox="0 0 6.5 3.6"><path d="M.5 .5L3.25 3.1L6 .5" fill="none" stroke="#e0e0e0" stroke-width="1.3" stroke-linecap="round" stroke-linejoin="round"/></svg>
</div>
<!-- outliner -->
<div class="area" id="outl" style="left:1324px;top:86px;width:276px;height:276px;background:#282828">
<div class="a" style="left:0px;top:43.5px;width:276px;height:18.6px;background:#2b2b2b;"></div>
<div class="a" style="left:0px;top:80.7px;width:276px;height:18.6px;background:#2b2b2b;"></div>
<div class="a" style="left:0px;top:117.8px;width:276px;height:18.6px;background:#2b2b2b;"></div>
<div class="a" style="left:0px;top:154.9px;width:276px;height:18.6px;background:#2b2b2b;"></div>
<div class="a" style="left:7px;top:3.2px;width:28.7px;height:17.5px;background:#282828;border-radius:4px;box-shadow:0 0 0 .5px #3d3d3d;"></div>
<svg style="left:11px;top:5px;" width="14" height="14" viewBox="0 0 14 14"><rect x=".5" y=".5" width="4.500" height="3" fill="#e6e6e6"/><path d="M2.700 3.500V11.500H6.500M2.700 7H6.500" fill="none" stroke="#e6e6e6" stroke-width="1"/><rect x="6.500" y="5.200" width="7" height="3.300" fill="#e6e6e6"/><rect x="6.500" y="10" width="7" height="3.300" fill="#e6e6e6"/></svg>
<svg style="left:27px;top:10.5px;" width="6.5" height="3.6" viewBox="0 0 6.5 3.6"><path d="M.5 .5L3.25 3.1L6 .5" fill="none" stroke="#e0e0e0" stroke-width="1.3" stroke-linecap="round" stroke-linejoin="round"/></svg>
<div class="a" style="left:41.5px;top:3.2px;width:29px;height:17.5px;background:#282828;border-radius:4px;box-shadow:0 0 0 .5px #3d3d3d;"></div>
<svg style="left:45.5px;top:4.5px;" width="15" height="15" viewBox="0 0 15 15"><path d="M1 4.500V14h9.500" fill="none" stroke="#e0e0e0" stroke-width="1.100"/><path d="M3 2.500V12h9.500" fill="none" stroke="#e0e0e0" stroke-width="1.100"/><rect x="5" y=".7" width="9.300" height="9.300" rx="1" fill="#e0e0e0"/><path d="M6 9l3-4.500 2.500 4.500z" fill="#282828"/><circle cx="12" cy="3.200" r="1" fill="#282828"/></svg>
<svg style="left:61.5px;top:10.5px;" width="6.5" height="3.6" viewBox="0 0 6.5 3.6"><path d="M.5 .5L3.25 3.1L6 .5" fill="none" stroke="#e0e0e0" stroke-width="1.3" stroke-linecap="round" stroke-linejoin="round"/></svg>
<div class="a" style="left:85.3px;top:3.2px;width:106.3px;height:17.5px;background:#1d1d1d;border-radius:4px;box-shadow:0 0 0 .5px #3d3d3d;"></div>
<svg style="left:89.5px;top:4.8px;" width="14" height="14" viewBox="0 0 14 14"><circle cx="8.500" cy="5.500" r="4.300" fill="none" stroke="#e0e0e0" stroke-width="1.300"/><path d="M5.500 8.500L1 13" stroke="#e0e0e0" stroke-width="1.400" stroke-linecap="round"/></svg>
<div class="t u" style="left:109.5px;top:9px;font-size:10.2px;color:#6a6a6a;">Search</div>
<div class="a" style="left:215.6px;top:3.2px;width:29px;height:17.5px;background:#282828;border-radius:4px;box-shadow:0 0 0 .5px #3d3d3d;"></div>
<svg style="left:219px;top:5px;" width="14" height="14" viewBox="0 0 14 14"><path d="M1 1h12L8.500 7v6l-3-1.500V7z" fill="none" stroke="#e6e6e6" stroke-width="1.300" stroke-linejoin="round"/></svg>
<svg style="left:235px;top:10.5px;" width="6.5" height="3.6" viewBox="0 0 6.5 3.6"><path d="M.5 .5L3.25 3.1L6 .5" fill="none" stroke="#e0e0e0" stroke-width="1.3" stroke-linecap="round" stroke-linejoin="round"/></svg>
<div class="a" style="left:250px;top:3.2px;width:17.7px;height:17.5px;background:#545454;border-radius:4px;"></div>
<svg style="left:252px;top:4.5px;" width="14" height="15" viewBox="0 0 14 15"><rect x=".5" y="4" width="9" height="2.500" fill="none" stroke="#d0d0d0" stroke-width="1"/><path d="M1.200 6.500v6.500h7.600V8" fill="none" stroke="#d0d0d0" stroke-width="1"/><path d="M3.500 9.500h3" stroke="#d0d0d0" stroke-width="1"/><circle cx="10.500" cy="3.500" r="3.300" fill="#f0f0f0"/><path d="M10.500 1.500v4M8.500 3.500h4" stroke="#545454" stroke-width="1.100"/></svg>
<div class="a" style="left:18.3px;top:25.5px;width:17.5px;height:17.5px;background:#4f4f4f;border-radius:4px;box-shadow:0 0 0 .7px #6a6a6a;"></div>
<svg style="left:20px;top:27.8px;" width="14" height="13" viewBox="0 0 14 13"><rect x=".3" y=".5" width="13.400" height="3.200" rx=".6" fill="#e6e6e6"/><path d="M1.200 4.600h11.600v7a.9.900 0 0 1-.9.900H2.100a.9.900 0 0 1-.9-.9z" fill="#e6e6e6"/><rect x="5" y="6" width="4" height="1.500" rx=".5" fill="#282828"/></svg>
<div class="t u" style="left:40px;top:31.3px;font-size:10.2px;color:#e6e6e6;">Scene Collection</div>
<svg style="left:25.3px;top:48.8px;" width="4.5" height="8" viewBox="0 0 4.5 8"><path d="M.5 .5L4 4L.5 7.5" fill="none" stroke="#d0d0d0" stroke-width="1.2" stroke-linecap="round" stroke-linejoin="round"/></svg>
<svg style="left:38.5px;top:46.3px;" width="14" height="13" viewBox="0 0 14 13"><rect x=".3" y=".5" width="13.400" height="3.200" rx=".6" fill="#e6e6e6"/><path d="M1.200 4.600h11.600v7a.9.900 0 0 1-.9.900H2.100a.9.900 0 0 1-.9-.9z" fill="#e6e6e6"/><rect x="5" y="6" width="4" height="1.500" rx=".5" fill="#282828"/></svg>
<div class="t u" style="left:58.7px;top:49.8px;font-size:10.2px;color:#e6e6e6;">Design</div>
<svg style="left:232px;top:48px;" width="13" height="9" viewBox="0 0 13 9"><path d="M.4 4.500C2 1.700 4.200 .4 6.500 .4s4.500 1.300 6.100 4.100C11 7.300 8.800 8.600 6.500 8.600S2 7.300 .4 4.500z" fill="#e6e6e6"/><circle cx="6.500" cy="4.500" r="2.700" fill="#282828"/><circle cx="6.500" cy="4.500" r="1.300" fill="#e6e6e6"/></svg>
<svg style="left:250px;top:47.3px;" width="14" height="11" viewBox="0 0 14 11"><path d="M.5 2.800a1 1 0 0 1 1-1h2.300L4.800 .4h4.400l1 1.400h2.300a1 1 0 0 1 1 1v7a1 1 0 0 1-1 1h-11a1 1 0 0 1-1-1z" fill="#e6e6e6"/><circle cx="7" cy="6.200" r="3.300" fill="#282828"/><circle cx="7" cy="6.200" r="2.100" fill="none" stroke="#e6e6e6" stroke-width="1"/><circle cx="7" cy="6.200" r=".7" fill="#e6e6e6"/></svg>
<svg style="left:25.3px;top:67.4px;" width="4.5" height="8" viewBox="0 0 4.5 8"><path d="M.5 .5L4 4L.5 7.5" fill="none" stroke="#d0d0d0" stroke-width="1.2" stroke-linecap="round" stroke-linejoin="round"/></svg>
<svg style="left:39px;top:63.9px;" width="13" height="15" viewBox="0 0 13 15"><path d="M6.500 .5a5.300 5.300 0 0 1 3.300 9.400c-.5.400-.6.900-.6 1.400H3.800c0-.5-.1-1-.6-1.400A5.300 5.300 0 0 1 6.500 .5z" fill="#e5975c"/><path d="M3.800 12.300h5.400M4.500 13.800h4" stroke="#e5975c" stroke-width="1"/><path d="M3.800 5.500l2 1.300M9.200 5.500l-2 1.300M5.500 8.500h2" stroke="#282828" stroke-width=".9"/></svg>
<div class="t u" style="left:58.7px;top:68.4px;font-size:10.2px;color:#e6e6e6;">Area</div>
<svg style="left:232px;top:66.6px;" width="13" height="9" viewBox="0 0 13 9"><path d="M.4 4.500C2 1.700 4.200 .4 6.500 .4s4.500 1.300 6.100 4.100C11 7.300 8.800 8.600 6.500 8.600S2 7.300 .4 4.500z" fill="#e6e6e6"/><circle cx="6.500" cy="4.500" r="2.700" fill="#282828"/><circle cx="6.500" cy="4.500" r="1.300" fill="#e6e6e6"/></svg>
<svg style="left:250px;top:65.9px;" width="14" height="11" viewBox="0 0 14 11"><path d="M.5 2.800a1 1 0 0 1 1-1h2.300L4.800 .4h4.400l1 1.400h2.300a1 1 0 0 1 1 1v7a1 1 0 0 1-1 1h-11a1 1 0 0 1-1-1z" fill="#e6e6e6"/><circle cx="7" cy="6.200" r="3.300" fill="#282828"/><circle cx="7" cy="6.200" r="2.100" fill="none" stroke="#e6e6e6" stroke-width="1"/><circle cx="7" cy="6.200" r=".7" fill="#e6e6e6"/></svg>
<svg style="left:25.3px;top:86px;" width="4.5" height="8" viewBox="0 0 4.5 8"><path d="M.5 .5L4 4L.5 7.5" fill="none" stroke="#d0d0d0" stroke-width="1.2" stroke-linecap="round" stroke-linejoin="round"/></svg>
<svg style="left:39px;top:82.5px;" width="13" height="15" viewBox="0 0 13 15"><path d="M6.500 .5a5.300 5.300 0 0 1 3.300 9.400c-.5.400-.6.900-.6 1.400H3.800c0-.5-.1-1-.6-1.400A5.300 5.300 0 0 1 6.500 .5z" fill="#e5975c"/><path d="M3.800 12.300h5.400M4.500 13.800h4" stroke="#e5975c" stroke-width="1"/><path d="M3.800 5.500l2 1.300M9.200 5.500l-2 1.300M5.500 8.500h2" stroke="#282828" stroke-width=".9"/></svg>
<div class="t u" style="left:58.7px;top:87px;font-size:10.2px;color:#e6e6e6;">Area.001</div>
<svg style="left:232px;top:85.2px;" width="13" height="9" viewBox="0 0 13 9"><path d="M.4 4.500C2 1.700 4.200 .4 6.500 .4s4.500 1.300 6.100 4.100C11 7.300 8.800 8.600 6.500 8.600S2 7.300 .4 4.500z" fill="#e6e6e6"/><circle cx="6.500" cy="4.500" r="2.700" fill="#282828"/><circle cx="6.500" cy="4.500" r="1.300" fill="#e6e6e6"/></svg>
<svg style="left:250px;top:84.5px;" width="14" height="11" viewBox="0 0 14 11"><path d="M.5 2.800a1 1 0 0 1 1-1h2.300L4.800 .4h4.400l1 1.400h2.300a1 1 0 0 1 1 1v7a1 1 0 0 1-1 1h-11a1 1 0 0 1-1-1z" fill="#e6e6e6"/><circle cx="7" cy="6.200" r="3.300" fill="#282828"/><circle cx="7" cy="6.200" r="2.100" fill="none" stroke="#e6e6e6" stroke-width="1"/><circle cx="7" cy="6.200" r=".7" fill="#e6e6e6"/></svg>
<svg style="left:25.3px;top:104.5px;" width="4.5" height="8" viewBox="0 0 4.5 8"><path d="M.5 .5L4 4L.5 7.5" fill="none" stroke="#d0d0d0" stroke-width="1.2" stroke-linecap="round" stroke-linejoin="round"/></svg>
<svg style="left:38.5px;top:102px;" width="14" height="14" viewBox="0 0 14 14"><path d="M1 1.500h12L7 13z" fill="none" stroke="#e5975c" stroke-width="2.200" stroke-linejoin="round"/></svg>
<div class="t u" style="left:58.7px;top:105.5px;font-size:10.2px;color:#e6e6e6;">BD</div>
<svg style="left:232px;top:103.7px;" width="13" height="9" viewBox="0 0 13 9"><path d="M.4 4.500C2 1.700 4.200 .4 6.500 .4s4.500 1.300 6.100 4.100C11 7.300 8.800 8.600 6.500 8.600S2 7.300 .4 4.500z" fill="#e6e6e6"/><circle cx="6.500" cy="4.500" r="2.700" fill="#282828"/><circle cx="6.500" cy="4.500" r="1.300" fill="#e6e6e6"/></svg>
<svg style="left:250px;top:103px;" width="14" height="11" viewBox="0 0 14 11"><path d="M.5 2.800a1 1 0 0 1 1-1h2.300L4.800 .4h4.400l1 1.400h2.300a1 1 0 0 1 1 1v7a1 1 0 0 1-1 1h-11a1 1 0 0 1-1-1z" fill="#e6e6e6"/><circle cx="7" cy="6.200" r="3.300" fill="#282828"/><circle cx="7" cy="6.200" r="2.100" fill="none" stroke="#e6e6e6" stroke-width="1"/><circle cx="7" cy="6.200" r=".7" fill="#e6e6e6"/></svg>
<svg style="left:25.3px;top:123.1px;" width="4.5" height="8" viewBox="0 0 4.5 8"><path d="M.5 .5L4 4L.5 7.5" fill="none" stroke="#d0d0d0" stroke-width="1.2" stroke-linecap="round" stroke-linejoin="round"/></svg>
<svg style="left:38px;top:120.1px;" width="15" height="14" viewBox="0 0 15 14"><circle cx="4" cy="3.300" r="2.800" fill="#e5975c"/><circle cx="9.800" cy="3.300" r="2.800" fill="#e5975c"/><rect x="1.500" y="6" width="10" height="6.800" rx="1" fill="#e5975c"/><path d="M11.800 8.800l3-1.600v5l-3-1.600z" fill="#e5975c"/><circle cx="4" cy="3.300" r="1" fill="#282828"/><circle cx="9.800" cy="3.300" r="1" fill="#282828"/></svg>
<div class="t u" style="left:58.7px;top:124.1px;font-size:10.2px;color:#e6e6e6;">Camera</div>
<svg style="left:232px;top:122.3px;" width="13" height="9" viewBox="0 0 13 9"><path d="M.4 4.500C2 1.700 4.200 .4 6.500 .4s4.500 1.300 6.100 4.100C11 7.300 8.800 8.600 6.500 8.600S2 7.300 .4 4.500z" fill="#e6e6e6"/><circle cx="6.500" cy="4.500" r="2.700" fill="#282828"/><circle cx="6.500" cy="4.500" r="1.300" fill="#e6e6e6"/></svg>
<svg style="left:250px;top:121.6px;" width="14" height="11" viewBox="0 0 14 11"><path d="M.5 2.800a1 1 0 0 1 1-1h2.300L4.800 .4h4.400l1 1.400h2.300a1 1 0 0 1 1 1v7a1 1 0 0 1-1 1h-11a1 1 0 0 1-1-1z" fill="#e6e6e6"/><circle cx="7" cy="6.200" r="3.300" fill="#282828"/><circle cx="7" cy="6.200" r="2.100" fill="none" stroke="#e6e6e6" stroke-width="1"/><circle cx="7" cy="6.200" r=".7" fill="#e6e6e6"/></svg>
<svg style="left:25.3px;top:141.7px;" width="4.5" height="8" viewBox="0 0 4.5 8"><path d="M.5 .5L4 4L.5 7.5" fill="none" stroke="#d0d0d0" stroke-width="1.2" stroke-linecap="round" stroke-linejoin="round"/></svg>
<svg style="left:39px;top:138.2px;" width="13" height="15" viewBox="0 0 13 15"><path d="M6.500 .5a5.300 5.300 0 0 1 3.300 9.400c-.5.400-.6.900-.6 1.400H3.800c0-.5-.1-1-.6-1.400A5.300 5.300 0 0 1 6.500 .5z" fill="#e5975c"/><path d="M3.800 12.300h5.400M4.500 13.800h4" stroke="#e5975c" stroke-width="1"/><path d="M3.800 5.500l2 1.300M9.200 5.500l-2 1.300M5.500 8.500h2" stroke="#282828" stroke-width=".9"/></svg>
<div class="t u" style="left:58.7px;top:142.7px;font-size:10.2px;color:#e6e6e6;">Point</div>
<svg style="left:232px;top:140.9px;" width="13" height="9" viewBox="0 0 13 9"><path d="M.4 4.500C2 1.700 4.200 .4 6.500 .4s4.500 1.300 6.100 4.100C11 7.300 8.800 8.600 6.500 8.600S2 7.300 .4 4.500z" fill="#e6e6e6"/><circle cx="6.500" cy="4.500" r="2.700" fill="#282828"/><circle cx="6.500" cy="4.500" r="1.300" fill="#e6e6e6"/></svg>
<svg style="left:250px;top:140.2px;" width="14" height="11" viewBox="0 0 14 11"><path d="M.5 2.800a1 1 0 0 1 1-1h2.300L4.800 .4h4.400l1 1.400h2.300a1 1 0 0 1 1 1v7a1 1 0 0 1-1 1h-11a1 1 0 0 1-1-1z" fill="#e6e6e6"/><circle cx="7" cy="6.200" r="3.300" fill="#282828"/><circle cx="7" cy="6.200" r="2.100" fill="none" stroke="#e6e6e6" stroke-width="1"/><circle cx="7" cy="6.200" r=".7" fill="#e6e6e6"/></svg>
<svg style="left:39px;top:157.2px;" width="14" height="14" viewBox="0 0 14 14"><path d="M5.500 .8v7L1 12.500M5.500 7.800l7.500 2" fill="none" stroke="#e5975c" stroke-width="2" stroke-linecap="round" stroke-linejoin="round"/></svg>
<div class="t u" style="left:58.7px;top:161.2px;font-size:10.2px;color:#e6e6e6;">Target_Light</div>
<svg style="left:232px;top:159.4px;" width="13" height="9" viewBox="0 0 13 9"><path d="M.4 4.500C2 1.700 4.200 .4 6.500 .4s4.500 1.300 6.100 4.100C11 7.300 8.800 8.600 6.500 8.600S2 7.300 .4 4.500z" fill="#e6e6e6"/><circle cx="6.500" cy="4.500" r="2.700" fill="#282828"/><circle cx="6.500" cy="4.500" r="1.300" fill="#e6e6e6"/></svg>
<svg style="left:250px;top:158.7px;" width="14" height="11" viewBox="0 0 14 11"><path d="M.5 2.800a1 1 0 0 1 1-1h2.300L4.800 .4h4.400l1 1.400h2.300a1 1 0 0 1 1 1v7a1 1 0 0 1-1 1h-11a1 1 0 0 1-1-1z" fill="#e6e6e6"/><circle cx="7" cy="6.200" r="3.300" fill="#282828"/><circle cx="7" cy="6.200" r="2.100" fill="none" stroke="#e6e6e6" stroke-width="1"/><circle cx="7" cy="6.200" r=".7" fill="#e6e6e6"/></svg>
<div class="a" style="left:110.5px;top:43.5px;width:18.5px;height:17.5px;background:#545454;border-radius:4px;"></div>
<svg style="left:113.5px;top:45.5px;" width="12" height="12" viewBox="0 0 12 12"><path d="M.5 .5h11L8 5.500V11L4.500 9V5.500z" fill="#e5975c"/><path d="M4 2.500h5L7 5z" fill="#545454"/></svg>
<div class="t" style="left:122.5px;top:52.5px;font-size:7.5px;color:#e6e6e6;">12</div>
<div class="a" style="left:215.5px;top:47.5px;width:10px;height:10px;background:#f0f0f0;border-radius:2px;"></div>
<svg style="left:217px;top:49.5px;" width="7" height="6" viewBox="0 0 7 6"><path d="M.7 3l2 2L6.300 .8" fill="none" stroke="#222" stroke-width="1.400"/></svg>
<svg style="left:101.5px;top:64.5px;" width="14" height="14" viewBox="0 0 14 14"><g transform="rotate(40 7 7)"><path d="M7 .2c2.300 0 3.300 1.500 3.500 3.300l.6 5.500a4.100 4.100 0 1 1-8.200 0l.6-5.500C3.700 1.700 4.700 .2 7 .2z" fill="none" stroke="#6f8fea" stroke-width="1.200"/><circle cx="7" cy="9.200" r="2" fill="none" stroke="#6f8fea" stroke-width="1.300"/></g></svg>
<svg style="left:119.5px;top:64.5px;" width="15" height="14" viewBox="0 0 15 14"><path d="M4.500 1h6.500l3 9.500H7.500z" fill="none" stroke="#3fb88c" stroke-width="1.200" stroke-linejoin="round"/><circle cx="9" cy="5.800" r=".9" fill="#3fb88c"/><path d="M6 9.500L1 13.500" stroke="#3fb88c" stroke-width="1" stroke-dasharray="1.500 1"/></svg>
<svg style="left:124px;top:83px;" width="14" height="14" viewBox="0 0 14 14"><g transform="rotate(40 7 7)"><path d="M7 .2c2.300 0 3.300 1.500 3.500 3.300l.6 5.500a4.100 4.100 0 1 1-8.200 0l.6-5.500C3.700 1.700 4.700 .2 7 .2z" fill="none" stroke="#6f8fea" stroke-width="1.200"/><circle cx="7" cy="9.200" r="2" fill="none" stroke="#6f8fea" stroke-width="1.300"/></g></svg>
<svg style="left:142px;top:83px;" width="15" height="14" viewBox="0 0 15 14"><path d="M4.500 1h6.500l3 9.500H7.500z" fill="none" stroke="#3fb88c" stroke-width="1.200" stroke-linejoin="round"/><circle cx="9" cy="5.800" r=".9" fill="#3fb88c"/><path d="M6 9.500L1 13.500" stroke="#3fb88c" stroke-width="1" stroke-dasharray="1.500 1"/></svg>
<svg style="left:93.5px;top:101.5px;" width="14" height="14" viewBox="0 0 14 14"><path d="M12.800 3.500a3.600 3.600 0 0 1-4.800 3.400L3.500 12.500a1.500 1.500 0 0 1-2.200-2.200L6.800 5.800A3.600 3.600 0 0 1 10.500 1L8.500 3l.5 2 2 .5z" fill="none" stroke="#6f8fea" stroke-width="1.200" stroke-linejoin="round"/></svg>
<svg style="left:111.8px;top:101.5px;" width="14" height="14" viewBox="0 0 14 14"><path d="M2.300 2.300h9.400L7 12z" fill="none" stroke="#3fb88c" stroke-width="1.200" stroke-linejoin="round"/><circle cx="2.300" cy="2.300" r="1.600" fill="#282828" stroke="#3fb88c" stroke-width="1"/><circle cx="11.700" cy="2.300" r="1.600" fill="#282828" stroke="#3fb88c" stroke-width="1"/><circle cx="7" cy="12" r="1.600" fill="#282828" stroke="#3fb88c" stroke-width="1"/></svg>
<div class="a" style="left:114px;top:118.2px;width:18.5px;height:17.8px;background:#545454;border-radius:4px;"></div>
<svg style="left:116px;top:120.2px;" width="15" height="14" viewBox="0 0 15 14"><circle cx="4.300" cy="3.800" r="2.500" fill="none" stroke="#3fb88c" stroke-width="1.100"/><circle cx="9.800" cy="3.800" r="2.500" fill="none" stroke="#3fb88c" stroke-width="1.100"/><rect x="2" y="6.800" width="9.500" height="6" rx="1" fill="none" stroke="#3fb88c" stroke-width="1.100"/><path d="M11.800 9l2.700-1.400v4.400l-2.700-1.400z" fill="#3fb88c"/><path d="M4 9.800h5" stroke="#3fb88c" stroke-width="1.200"/></svg>
<svg style="left:104px;top:138.5px;" width="14" height="15" viewBox="0 0 14 15"><circle cx="7" cy="6.500" r="5.800" fill="none" stroke="#3fb88c" stroke-width="1.100"/><circle cx="7" cy="6.500" r="1.300" fill="#3fb88c"/><path d="M7 8v6.500" stroke="#3fb88c" stroke-width="1" stroke-dasharray="1.500 1"/></svg>
</div>
<!-- properties -->
<div class="area" id="props" style="left:1324px;top:365.500px;width:276px;height:583.500px;background:#303030">
<div class="a" style="left:0px;top:22.5px;width:26px;height:561px;background:#1c1c1c;"></div>
<div class="a" style="left:7.8px;top:2.5px;width:27.5px;height:16.5px;background:#282828;border-radius:4px;box-shadow:0 0 0 .5px #3d3d3d;"></div>
<svg style="left:11px;top:4.3px;" width="14" height="13" viewBox="0 0 14 13"><rect x=".6" y=".6" width="12.800" height="5" rx="2.500" fill="none" stroke="#e6e6e6" stroke-width="1.100"/><rect x="6.500" y="1.300" width="6.200" height="3.600" rx="1.800" fill="#e6e6e6" opacity="0"/><rect x=".6" y="7.400" width="12.800" height="5" rx="2.500" fill="#e6e6e6"/><rect x="1.300" y="1.400" width="6.500" height="3.400" rx="1.700" fill="#e6e6e6"/><circle cx="11" cy="9.900" r="1.500" fill="#282828"/></svg>
<svg style="left:27px;top:9.5px;" width="6.5" height="3.6" viewBox="0 0 6.5 3.6"><path d="M.5 .5L3.25 3.1L6 .5" fill="none" stroke="#e0e0e0" stroke-width="1.3" stroke-linecap="round" stroke-linejoin="round"/></svg>
<div class="a" style="left:83.6px;top:2.5px;width:104.8px;height:16.5px;background:#1d1d1d;border-radius:4px;box-shadow:0 0 0 .5px #3d3d3d;"></div>
<svg style="left:87.5px;top:3.8px;" width="14" height="14" viewBox="0 0 14 14"><circle cx="8.500" cy="5.500" r="4.300" fill="none" stroke="#e0e0e0" stroke-width="1.300"/><path d="M5.500 8.500L1 13" stroke="#e0e0e0" stroke-width="1.400" stroke-linecap="round"/></svg>
<div class="t u" style="left:106.6px;top:8px;font-size:10.2px;color:#6a6a6a;">Search</div>
<div class="a" style="left:250.7px;top:2.5px;width:16.5px;height:16.5px;background:#282828;border-radius:4px;box-shadow:0 0 0 .5px #3d3d3d;"></div>
<svg style="left:255.8px;top:9.5px;" width="6.5" height="3.6" viewBox="0 0 6.5 3.6"><path d="M.5 .5L3.25 3.1L6 .5" fill="none" stroke="#e0e0e0" stroke-width="1.3" stroke-linecap="round" stroke-linejoin="round"/></svg>
<div class="a" style="left:1px;top:331.5px;width:25px;height:24px;background:#303030;border-radius:4px 0 0 4px;"></div>
<svg style="left:7px;top:35.5px;" width="14" height="14" viewBox="0 0 14 14"><path d="M3 1v6" stroke="#dcdcdc" stroke-width="1.200"/><rect x="1.500" y="7" width="3" height="5.500" rx="1.300" fill="#dcdcdc"/><path d="M8.200 1.300a2.600 2.600 0 0 0 1.200 4.600V12a1 1 0 0 0 2 0V5.900a2.600 2.600 0 0 0 1.200-4.600v2.500h-2.400z" fill="#dcdcdc"/></svg>
<svg style="left:7px;top:69px;" width="14" height="13" viewBox="0 0 14 13"><rect x=".7" y="3.700" width="12.600" height="8.600" rx="1" fill="none" stroke="#dcdcdc" stroke-width="1.300"/><path d="M4 3.500V1.500a.8.800 0 0 1 .8-.8h3.400a.8.800 0 0 1 .8.800v2" fill="none" stroke="#dcdcdc" stroke-width="1.200"/><path d="M9.500 4v8" stroke="#dcdcdc" stroke-width="1"/><rect x="10.500" y="5.500" width="1.800" height="1.500" fill="#dcdcdc"/><rect x="10.500" y="9" width="1.800" height="1.500" fill="#dcdcdc"/></svg>
<svg style="left:7px;top:95.5px;" width="14" height="13" viewBox="0 0 14 13"><path d="M.5 1.500a1 1 0 0 1 1-1h11a1 1 0 0 1 1 1v3.700H.5z" fill="#dcdcdc"/><rect x="2.800" y="4" width="8.400" height="8.300" fill="#1c1c1c" stroke="#dcdcdc" stroke-width="1.100"/><path d="M4 11l2.500-4 2.500 4z" fill="#dcdcdc"/></svg>
<svg style="left:7px;top:121px;" width="14" height="14" viewBox="0 0 14 14"><path d="M.8 4.500V13.200h8.700" fill="none" stroke="#9a9a9a" stroke-width="1"/><path d="M2.600 2.700v8.700h8.700" fill="none" stroke="#b8b8b8" stroke-width="1"/><rect x="4.600" y=".6" width="8.800" height="8.800" rx="1" fill="#dcdcdc"/><path d="M5.500 8.500l2.800-4.300 2.500 4.300z" fill="#1c1c1c"/><circle cx="11.300" cy="3" r="1" fill="#1c1c1c"/></svg>
<svg style="left:7px;top:147px;" width="14" height="14" viewBox="0 0 14 14"><path d="M4 .8l3.300 8a3.600 3.600 0 0 1-6.600 0z" fill="#dcdcdc"/><circle cx="10.300" cy="3.300" r="1.700" fill="#dcdcdc"/><circle cx="9.800" cy="10" r="3.100" fill="#1c1c1c" stroke="#dcdcdc" stroke-width="1.200"/><circle cx="9.300" cy="9.500" r=".9" fill="#dcdcdc"/></svg>
<svg style="left:7px;top:173.5px;" width="14" height="14" viewBox="0 0 14 14"><circle cx="7" cy="7" r="6" fill="none" stroke="#e0656c" stroke-width="1.300"/><path d="M3 3c2 1 3 .5 4 2s-1 2-1 3.500 2 1 2.500 3M9 1.500c-.5 1.500 1 2 2.500 2.200" fill="none" stroke="#e0656c" stroke-width="1.200"/></svg>
<svg style="left:7px;top:207px;" width="14" height="14" viewBox="0 0 14 14"><path d="M.7 3.500V1.500a.8.800 0 0 1 .8-.8h2M10.500 .7h2a.8.800 0 0 1 .8.800v2M13.300 10.500v2a.8.800 0 0 1-.8.800h-2M3.500 13.300h-2a.8.800 0 0 1-.8-.8v-2" fill="none" stroke="#e5975c" stroke-width="1.100" opacity=".7"/><rect x="3" y="3" width="8" height="8" rx=".8" fill="#e5975c"/></svg>
<svg style="left:7px;top:233px;" width="14" height="14" viewBox="0 0 14 14"><path d="M12.800 3.500a3.600 3.600 0 0 1-4.800 3.400L3.500 12.500a1.500 1.500 0 0 1-2.200-2.200L6.800 5.800A3.600 3.600 0 0 1 10.500 1L8.500 3l.5 2 2 .5z" fill="#5b8fe8"/></svg>
<svg style="left:7px;top:258.2px;" width="14" height="14" viewBox="0 0 14 14"><path d="M3 2.500v9M3 2.500l8 3.500M3 3l7 9" stroke="#5b8fe8" stroke-width="1.100" fill="none"/><circle cx="3" cy="2.500" r="1.700" fill="#5b8fe8"/><circle cx="3" cy="11.500" r="1.500" fill="#5b8fe8"/><circle cx="11" cy="6" r="1.500" fill="#5b8fe8"/><circle cx="10" cy="12" r="1.500" fill="#5b8fe8"/></svg>
<svg style="left:7px;top:284.3px;" width="14" height="14" viewBox="0 0 14 14"><path d="M11.500 2.500A6 6 0 1 0 13 7" fill="none" stroke="#5b8fe8" stroke-width="1.300"/><circle cx="7" cy="7" r="2.300" fill="#5b8fe8"/><circle cx="12" cy="3" r="1.300" fill="#5b8fe8"/></svg>
<svg style="left:7px;top:310.5px;" width="14" height="14" viewBox="0 0 14 14"><g transform="rotate(40 7 7)"><path d="M7 .2c2.300 0 3.300 1.500 3.500 3.300l.6 5.500a4.100 4.100 0 1 1-8.200 0l.6-5.500C3.700 1.700 4.700 .2 7 .2z" fill="none" stroke="#5b8fe8" stroke-width="1.300"/><circle cx="7" cy="9.200" r="2" fill="none" stroke="#5b8fe8" stroke-width="1.400"/></g></svg>
<svg style="left:7px;top:336.5px;" width="14" height="14" viewBox="0 0 14 14"><path d="M2.300 2.300h9.400L7 12z" fill="none" stroke="#3fd89c" stroke-width="1.200" stroke-linejoin="round"/><circle cx="2.300" cy="2.300" r="1.600" fill="#303030" stroke="#3fd89c" stroke-width="1"/><circle cx="11.700" cy="2.300" r="1.600" fill="#303030" stroke="#3fd89c" stroke-width="1"/><circle cx="7" cy="12" r="1.600" fill="#303030" stroke="#3fd89c" stroke-width="1"/></svg>
<svg style="left:7px;top:362.7px;" width="14" height="14" viewBox="0 0 14 14"><circle cx="7" cy="7" r="6.200" fill="none" stroke="#e0656c" stroke-width="1.200"/><path d="M7 7V.8A6.200 6.200 0 0 0 .8 7z" fill="#e0656c"/><path d="M7 7v6.200A6.200 6.200 0 0 0 13.200 7z" fill="#e0656c"/></svg>
<svg style="left:7px;top:395px;" width="14" height="14" viewBox="0 0 14 14"><rect x="0.4" y="0.4" width="3.300" height="3.300" fill="#e0656c"/><rect x="0.4" y="7" width="3.300" height="3.300" fill="#e0656c"/><rect x="3.7" y="3.7" width="3.300" height="3.300" fill="#e0656c"/><rect x="3.7" y="10.3" width="3.300" height="3.300" fill="#e0656c"/><rect x="7" y="0.4" width="3.300" height="3.300" fill="#e0656c"/><rect x="7" y="7" width="3.300" height="3.300" fill="#e0656c"/><rect x="10.3" y="3.7" width="3.300" height="3.300" fill="#e0656c"/><rect x="10.3" y="10.3" width="3.300" height="3.300" fill="#e0656c"/></svg>
<svg style="left:35.7px;top:32.5px;" width="14" height="14" viewBox="0 0 14 14"><path d="M.7 3.500V1.500a.8.800 0 0 1 .8-.8h2M10.500 .7h2a.8.800 0 0 1 .8.800v2M13.300 10.500v2a.8.800 0 0 1-.8.800h-2M3.500 13.300h-2a.8.800 0 0 1-.8-.8v-2" fill="none" stroke="#b0b0b0" stroke-width="1.100"/><rect x="3" y="3" width="8" height="8" rx=".8" fill="#e6e6e6"/></svg>
<div class="t u" style="left:57.5px;top:37px;font-size:10.2px;color:#e6e6e6;">Solid_7</div>
<svg style="left:108.5px;top:35.7px;" width="4.5" height="8" viewBox="0 0 4.5 8"><path d="M.5 .5L4 4L.5 7.5" fill="none" stroke="#d0d0d0" stroke-width="1.2" stroke-linecap="round" stroke-linejoin="round"/></svg>
<svg style="left:122px;top:32.5px;" width="14" height="14" viewBox="0 0 14 14"><path d="M2.300 2.300h9.400L7 12z" fill="none" stroke="#e6e6e6" stroke-width="1.200" stroke-linejoin="round"/><circle cx="2.300" cy="2.300" r="1.600" fill="#1d1d1d" stroke="#e6e6e6" stroke-width="1"/><circle cx="11.700" cy="2.300" r="1.600" fill="#1d1d1d" stroke="#e6e6e6" stroke-width="1"/><circle cx="7" cy="12" r="1.600" fill="#1d1d1d" stroke="#e6e6e6" stroke-width="1"/></svg>
<div class="t u" style="left:143.7px;top:37px;font-size:10.2px;color:#e6e6e6;">Solid_7</div>
<svg style="left:252.5px;top:32px;" width="15" height="15" viewBox="0 0 15 15"><g transform="rotate(40 7.500 7.500)"><path d="M5 .8h5v1.200l-.8.600v3.600l2 2.300v1H3.800v-1l2-2.300V2.600L5 2z" fill="none" stroke="#9a9a9a" stroke-width="1.100" stroke-linejoin="round"/><path d="M7.500 9.500v5.300" stroke="#9a9a9a" stroke-width="1.200" stroke-linecap="round"/></g></svg>
<div class="a" style="left:34.8px;top:64.5px;width:27.5px;height:17px;background:#282828;border-radius:4px 0 0 4px;box-shadow:0 0 0 .5px #3d3d3d;"></div>
<svg style="left:38px;top:66px;" width="14" height="14" viewBox="0 0 14 14"><path d="M2.300 2.300h9.400L7 12z" fill="none" stroke="#e6e6e6" stroke-width="1.200" stroke-linejoin="round"/><circle cx="2.300" cy="2.300" r="1.600" fill="#1d1d1d" stroke="#e6e6e6" stroke-width="1"/><circle cx="11.700" cy="2.300" r="1.600" fill="#1d1d1d" stroke="#e6e6e6" stroke-width="1"/><circle cx="7" cy="12" r="1.600" fill="#1d1d1d" stroke="#e6e6e6" stroke-width="1"/></svg>
<svg style="left:53.5px;top:72px;" width="6.5" height="3.6" viewBox="0 0 6.5 3.6"><path d="M.5 .5L3.25 3.1L6 .5" fill="none" stroke="#e0e0e0" stroke-width="1.3" stroke-linecap="round" stroke-linejoin="round"/></svg>
<div class="a" style="left:62.5px;top:64.5px;width:187px;height:17px;background:#1d1d1d;"></div>
<div class="t u" style="left:69.7px;top:70.3px;font-size:10.2px;color:#e6e6e6;">Solid_7</div>
<div class="a" style="left:249.5px;top:64.5px;width:18.2px;height:17px;background:#545454;border-radius:0 4px 4px 0;"></div>
<svg style="left:251.8px;top:65.7px;" width="14" height="15" viewBox="0 0 14 15"><path d="M7 .8c1.800 1 3.800 1.500 6 1.500v4.200c0 3.500-2.500 6.400-6 7.700-3.500-1.300-6-4.200-6-7.700V2.300c2.200 0 4.200-.5 6-1.500z" fill="none" stroke="#a8a8a8" stroke-width="1.200" stroke-linejoin="round"/></svg>
<div class="a" style="left:33.6px;top:92.5px;width:235.2px;height:110px;background:#3a3a3a;border-radius:4px;"></div>
<svg style="left:41.5px;top:101.8px;" width="7.5" height="4.2" viewBox="0 0 7.5 4.2"><path d="M.5 .5L3.75 3.7L7 .5" fill="none" stroke="#d8d8d8" stroke-width="1.2" stroke-linecap="round" stroke-linejoin="round"/></svg>
<div class="t u" style="left:54px;top:100.8px;font-size:10.2px;color:#e6e6e6;">Vertex Groups</div>
<svg style="left:252.5px;top:101.6px;" width="11" height="5" viewBox="0 0 11 5"><rect x="0" y="0" width="1.200" height="1.200" fill="#666"/><rect x="0" y="3" width="1.200" height="1.200" fill="#666"/><rect x="3" y="0" width="1.200" height="1.200" fill="#666"/><rect x="3" y="3" width="1.200" height="1.200" fill="#666"/><rect x="6" y="0" width="1.200" height="1.200" fill="#666"/><rect x="6" y="3" width="1.200" height="1.200" fill="#666"/><rect x="9" y="0" width="1.200" height="1.200" fill="#666"/><rect x="9" y="3" width="1.200" height="1.200" fill="#666"/></svg>
<div class="a" style="left:42px;top:123.1px;width:192.2px;height:71.5px;background:#2b2b2b;border-radius:4px;"></div>
<svg style="left:52.5px;top:183.1px;" width="5" height="5" viewBox="0 0 5 5"><path d="M.3 .3L4.700 2.500 .3 4.700z" fill="#d8d8d8"/></svg>
<svg style="left:141.5px;top:183.6px;" width="10" height="5" viewBox="0 0 10 5"><rect x="0" y="0" width="1.200" height="1.200" fill="#8a8a8a"/><rect x="0" y="2.8" width="1.200" height="1.200" fill="#8a8a8a"/><rect x="2.8" y="0" width="1.200" height="1.200" fill="#8a8a8a"/><rect x="2.8" y="2.8" width="1.200" height="1.200" fill="#8a8a8a"/><rect x="5.6" y="0" width="1.200" height="1.200" fill="#8a8a8a"/><rect x="5.6" y="2.8" width="1.200" height="1.200" fill="#8a8a8a"/><rect x="8.4" y="0" width="1.200" height="1.200" fill="#8a8a8a"/><rect x="8.4" y="2.8" width="1.200" height="1.200" fill="#8a8a8a"/></svg>
<div class="a" style="left:243.7px;top:123.1px;width:16.7px;height:16.7px;background:#545454;border-radius:3px;"></div>
<svg style="left:247.5px;top:126.9px;" width="9" height="9" viewBox="0 0 9 9"><path d="M4.500 .3v8.400M.3 4.500h8.400" stroke="#e6e6e6" stroke-width="1.200"/></svg>
<div class="a" style="left:243.7px;top:141.4px;width:16.7px;height:16.7px;background:#484848;border-radius:3px;"></div>
<svg style="left:247.5px;top:145.2px;" width="9" height="9" viewBox="0 0 9 9"><path d="M.8 4.500h7.400" stroke="#6e6e6e" stroke-width="1.200"/></svg>
<div class="a" style="left:243.7px;top:165.9px;width:16.7px;height:16.7px;background:#222;border-radius:3px;"></div>
<svg style="left:248px;top:172.4px;" width="8" height="4.5" viewBox="0 0 8 4.5"><path d="M.5 .5L4 4L7.5 .5" fill="none" stroke="#e6e6e6" stroke-width="1.3" stroke-linecap="round" stroke-linejoin="round"/></svg>
<div class="a" style="left:33.6px;top:206.7px;width:235.2px;height:134.2px;background:#3a3a3a;border-radius:4px;"></div>
<svg style="left:41.5px;top:216px;" width="7.5" height="4.2" viewBox="0 0 7.5 4.2"><path d="M.5 .5L3.75 3.7L7 .5" fill="none" stroke="#d8d8d8" stroke-width="1.2" stroke-linecap="round" stroke-linejoin="round"/></svg>
<div class="t u" style="left:54px;top:215px;font-size:10.2px;color:#e6e6e6;">Shape Keys</div>
<svg style="left:252.5px;top:215.8px;" width="11" height="5" viewBox="0 0 11 5"><rect x="0" y="0" width="1.200" height="1.200" fill="#666"/><rect x="0" y="3" width="1.200" height="1.200" fill="#666"/><rect x="3" y="0" width="1.200" height="1.200" fill="#666"/><rect x="3" y="3" width="1.200" height="1.200" fill="#666"/><rect x="6" y="0" width="1.200" height="1.200" fill="#666"/><rect x="6" y="3" width="1.200" height="1.200" fill="#666"/><rect x="9" y="0" width="1.200" height="1.200" fill="#666"/><rect x="9" y="3" width="1.200" height="1.200" fill="#666"/></svg>
<div class="a" style="left:42px;top:236.5px;width:192.2px;height:72px;background:#2b2b2b;border-radius:4px;"></div>
<svg style="left:52.5px;top:297px;" width="5" height="5" viewBox="0 0 5 5"><path d="M.3 .3L4.700 2.500 .3 4.700z" fill="#d8d8d8"/></svg>
<svg style="left:141.5px;top:297.5px;" width="10" height="5" viewBox="0 0 10 5"><rect x="0" y="0" width="1.200" height="1.200" fill="#8a8a8a"/><rect x="0" y="2.8" width="1.200" height="1.200" fill="#8a8a8a"/><rect x="2.8" y="0" width="1.200" height="1.200" fill="#8a8a8a"/><rect x="2.8" y="2.8" width="1.200" height="1.200" fill="#8a8a8a"/><rect x="5.6" y="0" width="1.200" height="1.200" fill="#8a8a8a"/><rect x="5.6" y="2.8" width="1.200" height="1.200" fill="#8a8a8a"/><rect x="8.4" y="0" width="1.200" height="1.200" fill="#8a8a8a"/><rect x="8.4" y="2.8" width="1.200" height="1.200" fill="#8a8a8a"/></svg>
<div class="a" style="left:243.7px;top:236.5px;width:16.7px;height:16.7px;background:#545454;border-radius:3px;"></div>
<svg style="left:247.5px;top:240.3px;" width="9" height="9" viewBox="0 0 9 9"><path d="M4.500 .3v8.400M.3 4.500h8.400" stroke="#e6e6e6" stroke-width="1.200"/></svg>
<div class="a" style="left:243.7px;top:254.8px;width:16.7px;height:16.7px;background:#484848;border-radius:3px;"></div>
<svg style="left:247.5px;top:258.6px;" width="9" height="9" viewBox="0 0 9 9"><path d="M.8 4.500h7.400" stroke="#6e6e6e" stroke-width="1.200"/></svg>
<div class="a" style="left:243.7px;top:279.3px;width:16.7px;height:16.7px;background:#222;border-radius:3px;"></div>
<svg style="left:248px;top:285.8px;" width="8" height="4.5" viewBox="0 0 8 4.5"><path d="M.5 .5L4 4L7.5 .5" fill="none" stroke="#e6e6e6" stroke-width="1.3" stroke-linecap="round" stroke-linejoin="round"/></svg>
<div class="a" style="left:42px;top:318.5px;width:10.5px;height:10.5px;background:#545454;border-radius:2.5px;"></div>
<div class="t u" style="left:57.2px;top:320.8px;font-size:10.2px;color:#e6e6e6;">Add Rest Position</div>
<div class="a" style="left:33.6px;top:343.5px;width:235.2px;height:22px;background:#3a3a3a;border-radius:4px;"></div>
<svg style="left:43.5px;top:350.5px;" width="4.5" height="8" viewBox="0 0 4.5 8"><path d="M.5 .5L4 4L.5 7.5" fill="none" stroke="#d8d8d8" stroke-width="1.2" stroke-linecap="round" stroke-linejoin="round"/></svg>
<div class="t u" style="left:54px;top:351.5px;font-size:10.2px;color:#e6e6e6;">UV Maps</div>
<svg style="left:252.5px;top:352.3px;" width="11" height="5" viewBox="0 0 11 5"><rect x="0" y="0" width="1.200" height="1.200" fill="#666"/><rect x="0" y="3" width="1.200" height="1.200" fill="#666"/><rect x="3" y="0" width="1.200" height="1.200" fill="#666"/><rect x="3" y="3" width="1.200" height="1.200" fill="#666"/><rect x="6" y="0" width="1.200" height="1.200" fill="#666"/><rect x="6" y="3" width="1.200" height="1.200" fill="#666"/><rect x="9" y="0" width="1.200" height="1.200" fill="#666"/><rect x="9" y="3" width="1.200" height="1.200" fill="#666"/></svg>
<div class="a" style="left:33.6px;top:368.3px;width:235.2px;height:22px;background:#3a3a3a;border-radius:4px;"></div>
<svg style="left:43.5px;top:375.3px;" width="4.5" height="8" viewBox="0 0 4.5 8"><path d="M.5 .5L4 4L.5 7.5" fill="none" stroke="#d8d8d8" stroke-width="1.2" stroke-linecap="round" stroke-linejoin="round"/></svg>
<div class="t u" style="left:54px;top:376.3px;font-size:10.2px;color:#e6e6e6;">Color Attributes</div>
<svg style="left:252.5px;top:377.1px;" width="11" height="5" viewBox="0 0 11 5"><rect x="0" y="0" width="1.200" height="1.200" fill="#666"/><rect x="0" y="3" width="1.200" height="1.200" fill="#666"/><rect x="3" y="0" width="1.200" height="1.200" fill="#666"/><rect x="3" y="3" width="1.200" height="1.200" fill="#666"/><rect x="6" y="0" width="1.200" height="1.200" fill="#666"/><rect x="6" y="3" width="1.200" height="1.200" fill="#666"/><rect x="9" y="0" width="1.200" height="1.200" fill="#666"/><rect x="9" y="3" width="1.200" height="1.200" fill="#666"/></svg>
<div class="a" style="left:33.6px;top:393.4px;width:235.2px;height:22px;background:#3a3a3a;border-radius:4px;"></div>
<svg style="left:43.5px;top:400.4px;" width="4.5" height="8" viewBox="0 0 4.5 8"><path d="M.5 .5L4 4L.5 7.5" fill="none" stroke="#d8d8d8" stroke-width="1.2" stroke-linecap="round" stroke-linejoin="round"/></svg>
<div class="t u" style="left:54px;top:401.4px;font-size:10.2px;color:#e6e6e6;">Attributes</div>
<svg style="left:252.5px;top:402.2px;" width="11" height="5" viewBox="0 0 11 5"><rect x="0" y="0" width="1.200" height="1.200" fill="#666"/><rect x="0" y="3" width="1.200" height="1.200" fill="#666"/><rect x="3" y="0" width="1.200" height="1.200" fill="#666"/><rect x="3" y="3" width="1.200" height="1.200" fill="#666"/><rect x="6" y="0" width="1.200" height="1.200" fill="#666"/><rect x="6" y="3" width="1.200" height="1.200" fill="#666"/><rect x="9" y="0" width="1.200" height="1.200" fill="#666"/><rect x="9" y="3" width="1.200" height="1.200" fill="#666"/></svg>
<div class="a" style="left:33.6px;top:418.5px;width:235.2px;height:22px;background:#3a3a3a;border-radius:4px;"></div>
<svg style="left:43.5px;top:425.5px;" width="4.5" height="8" viewBox="0 0 4.5 8"><path d="M.5 .5L4 4L.5 7.5" fill="none" stroke="#d8d8d8" stroke-width="1.2" stroke-linecap="round" stroke-linejoin="round"/></svg>
<div class="t u" style="left:54px;top:426.5px;font-size:10.2px;color:#e6e6e6;">Texture Space</div>
<svg style="left:252.5px;top:427.3px;" width="11" height="5" viewBox="0 0 11 5"><rect x="0" y="0" width="1.200" height="1.200" fill="#666"/><rect x="0" y="3" width="1.200" height="1.200" fill="#666"/><rect x="3" y="0" width="1.200" height="1.200" fill="#666"/><rect x="3" y="3" width="1.200" height="1.200" fill="#666"/><rect x="6" y="0" width="1.200" height="1.200" fill="#666"/><rect x="6" y="3" width="1.200" height="1.200" fill="#666"/><rect x="9" y="0" width="1.200" height="1.200" fill="#666"/><rect x="9" y="3" width="1.200" height="1.200" fill="#666"/></svg>
<div class="a" style="left:33.6px;top:443.5px;width:235.2px;height:22px;background:#3a3a3a;border-radius:4px;"></div>
<svg style="left:43.5px;top:450.5px;" width="4.5" height="8" viewBox="0 0 4.5 8"><path d="M.5 .5L4 4L.5 7.5" fill="none" stroke="#d8d8d8" stroke-width="1.2" stroke-linecap="round" stroke-linejoin="round"/></svg>
<div class="t u" style="left:54px;top:451.5px;font-size:10.2px;color:#e6e6e6;">Remesh</div>
<svg style="left:252.5px;top:452.3px;" width="11" height="5" viewBox="0 0 11 5"><rect x="0" y="0" width="1.200" height="1.200" fill="#666"/><rect x="0" y="3" width="1.200" height="1.200" fill="#666"/><rect x="3" y="0" width="1.200" height="1.200" fill="#666"/><rect x="3" y="3" width="1.200" height="1.200" fill="#666"/><rect x="6" y="0" width="1.200" height="1.200" fill="#666"/><rect x="6" y="3" width="1.200" height="1.200" fill="#666"/><rect x="9" y="0" width="1.200" height="1.200" fill="#666"/><rect x="9" y="3" width="1.200" height="1.200" fill="#666"/></svg>
<div class="a" style="left:33.6px;top:468.6px;width:235.2px;height:22px;background:#3a3a3a;border-radius:4px;"></div>
<svg style="left:43.5px;top:475.6px;" width="4.5" height="8" viewBox="0 0 4.5 8"><path d="M.5 .5L4 4L.5 7.5" fill="none" stroke="#d8d8d8" stroke-width="1.2" stroke-linecap="round" stroke-linejoin="round"/></svg>
<div class="t u" style="left:54px;top:476.6px;font-size:10.2px;color:#e6e6e6;">Geometry Data</div>
<svg style="left:252.5px;top:477.4px;" width="11" height="5" viewBox="0 0 11 5"><rect x="0" y="0" width="1.200" height="1.200" fill="#666"/><rect x="0" y="3" width="1.200" height="1.200" fill="#666"/><rect x="3" y="0" width="1.200" height="1.200" fill="#666"/><rect x="3" y="3" width="1.200" height="1.200" fill="#666"/><rect x="6" y="0" width="1.200" height="1.200" fill="#666"/><rect x="6" y="3" width="1.200" height="1.200" fill="#666"/><rect x="9" y="0" width="1.200" height="1.200" fill="#666"/><rect x="9" y="3" width="1.200" height="1.200" fill="#666"/></svg>
<div class="a" style="left:33.6px;top:493.7px;width:235.2px;height:22px;background:#3a3a3a;border-radius:4px;"></div>
<svg style="left:43.5px;top:500.7px;" width="4.5" height="8" viewBox="0 0 4.5 8"><path d="M.5 .5L4 4L.5 7.5" fill="none" stroke="#d8d8d8" stroke-width="1.2" stroke-linecap="round" stroke-linejoin="round"/></svg>
<div class="t u" style="left:54px;top:501.7px;font-size:10.2px;color:#e6e6e6;">Custom Properties</div>
<svg style="left:252.5px;top:502.5px;" width="11" height="5" viewBox="0 0 11 5"><rect x="0" y="0" width="1.200" height="1.200" fill="#666"/><rect x="0" y="3" width="1.200" height="1.200" fill="#666"/><rect x="3" y="0" width="1.200" height="1.200" fill="#666"/><rect x="3" y="3" width="1.200" height="1.200" fill="#666"/><rect x="6" y="0" width="1.200" height="1.200" fill="#666"/><rect x="6" y="3" width="1.200" height="1.200" fill="#666"/><rect x="9" y="0" width="1.200" height="1.200" fill="#666"/><rect x="9" y="3" width="1.200" height="1.200" fill="#666"/></svg>
</div>
<!-- status bar -->
<svg style="left:9.5px;top:952.5px;" width="10" height="14" viewBox="0 0 10 14"><rect x=".6" y=".6" width="8.800" height="12.800" rx="2.800" fill="none" stroke="#a8a8a8" stroke-width="1.100"/><path d="M.6 6V4.100A3 3 0 0 1 4.100 .6H4.800V6z" fill="#c8c8c8"/></svg>
<div class="t u" style="left:31px;top:957px;font-size:10.2px;color:#b2b2b2;">Select (Toggle)</div>
<svg style="left:206px;top:952.5px;" width="10" height="14" viewBox="0 0 10 14"><rect x=".6" y=".6" width="8.800" height="12.800" rx="2.800" fill="none" stroke="#a8a8a8" stroke-width="1.100"/><rect x="3.600" y="2.500" width="2.800" height="5" rx="1.200" fill="#c8c8c8"/></svg>
<div class="t u" style="left:227px;top:957px;font-size:10.2px;color:#b2b2b2;">Dolly View</div>
<svg style="left:401px;top:952.5px;" width="10" height="14" viewBox="0 0 10 14"><rect x=".6" y=".6" width="8.800" height="12.800" rx="2.800" fill="none" stroke="#a8a8a8" stroke-width="1.100"/><path d="M9.400 6V4.100A3 3 0 0 0 5.900 .6H5.200V6z" fill="#c8c8c8"/></svg>
<div class="t u" style="left:422px;top:957px;font-size:10.2px;color:#b2b2b2;">Lasso Select</div>
<div class="t u" style="left:1564px;top:957px;font-size:10.2px;color:#909090;">4.1.1</div>
<!-- dock -->
<div class="a" id="dock" style="left:370.500px;top:970px;width:858.500px;height:59px;border-radius:15px;background:linear-gradient(90deg,#8a7cae 0%,#9484b8 12%,#9b88c0 35%,#a08cc4 55%,#aa8fc6 75%,#b092c8 100%);box-shadow:0 0 0 .6px rgba(220,210,240,.45) inset,0 0 0 .5px rgba(20,10,40,.4)"></div>
<svg style="left:378px;top:979.3px;" width="37" height="36" viewBox="0 0 37 36"><defs><clipPath id="fc"><rect width="37" height="36" rx="8.300"/></clipPath></defs><g clip-path="url(#fc)"><rect width="37" height="36" fill="#3aa0f2"/><path d="M21 0h16v36H19.500c-1.500-5-1.800-9-1.600-13H23c-.5-8-1.500-15-2-23z" fill="#eef1f6"/><path d="M21 0c.5 8 1.500 15 2 23h-5.200c-.2 4 .2 8 1.700 13" fill="none" stroke="#1e3a5c" stroke-width=".9"/><path d="M10.500 10v4.500M27 10v4.500" stroke="#1e3a5c" stroke-width="1.600" stroke-linecap="round"/><path d="M7 23.500c6 6 17 6 23.500 0" fill="none" stroke="#1e3a5c" stroke-width="1.400" stroke-linecap="round"/></g></svg>
<svg style="left:427.5px;top:979.3px;" width="37" height="37" viewBox="0 0 37 37"><rect width="37" height="37" rx="8.3" fill="#1d2448"/><circle cx="18.500" cy="18.500" r="13.500" fill="#14141c" stroke="#e4e4e8" stroke-width="1.600"/><g fill="none" stroke="#e4e4e8" stroke-width="1.500"><path d="M18.500 18.500c-4-2-5-7-2.500-11"/><path d="M18.500 18.500c3.800-2.400 8.600-.8 10.800 3.400"/><path d="M18.500 18.500c.2 4.500-3.600 7.900-8.300 7.600"/><circle cx="18.500" cy="18.500" r="9.500" opacity=".35"/></g></svg>
<svg style="left:477px;top:979.3px;" width="37" height="37" viewBox="0 0 37 37"><rect width="37" height="37" rx="8.3" fill="#2a3350"/><rect x=".8" y=".8" width="35.400" height="35.400" rx="7.800" fill="none" stroke="#d8dce8" stroke-width="1.300"/><path d="M18.500 6c3.500 3.500 5 6 5 8.500a5 5 0 0 1-10 0c0-2.500 1.500-5 5-8.500z" fill="#58b8f0"/><path d="M12.500 18c2 .3 4 1.300 5.200 3.300a5 5 0 0 1-8.600 5c-1.300-2-1.200-5 3.400-8.300z" fill="#f0e040" transform="rotate(-8 12 23)"/><path d="M24.500 18c-2 .3-4 1.300-5.200 3.300a5 5 0 0 0 8.600 5c1.300-2 1.200-5-3.400-8.300z" fill="#f06060" transform="rotate(8 25 23)"/></svg>
<svg style="left:526px;top:979.5px;" width="37" height="37" viewBox="0 0 37 37"><rect width="37" height="37" rx="8.3" fill="#dedde2"/></svg>
<div class="t" style="left:531px;top:991.5px;font-size:14px;color:#111;font-weight:bold;letter-spacing:-.3px;">Live</div>
<svg style="left:573px;top:976px;" width="42" height="44" viewBox="0 0 42 44"><g transform="rotate(-18 21 22)"><path d="M9 5h14c8 0 13 5 13 12s-5 12-13 12h-4v10H9z" fill="#cfc8da"/><path d="M9 5h14c8 0 13 5 13 12s-5 12-13 12h-4v10H9z" fill="none" stroke="#e8e4f0" stroke-width=".8"/><path d="M19 29h4c8 0 13-5 13-12 0-3-1-5.500-2.500-7.500 1 9-5 16-14.500 16z" fill="#4a4ab0"/><path d="M19 29v10h7V32z" fill="#6868d0"/><path d="M26 32c4-1 8-3 9.500-8l2 9z" fill="#9088e0"/></g></svg>
<svg style="left:623.5px;top:979.3px;" width="37" height="37" viewBox="0 0 37 37"><rect width="37" height="37" rx="8.3" fill="#f4f4f6"/><circle cx="18.500" cy="18.500" r="14" fill="#e8433a"/><path d="M18.500 18.500L6.400 11.500A14 14 0 0 0 16 32.300z" fill="#2da44e"/><path d="M18.500 18.500L16 32.300A14 14 0 0 0 30.600 11.500z" fill="#fcc934"/><path d="M6.400 11.500A14 14 0 0 1 30.600 11.500H18.500z" fill="#e8433a"/><circle cx="18.500" cy="18.500" r="6.800" fill="#fff"/><circle cx="18.500" cy="18.500" r="5.300" fill="#3c78e8"/></svg>
<svg style="left:672.7px;top:979.3px;" width="37" height="37" viewBox="0 0 37 37"><rect width="37" height="37" rx="8.3" fill="#0c1e36"/></svg>
<div class="t" style="left:679.5px;top:987.5px;font-size:21px;color:#38a8f8;font-weight:bold;letter-spacing:-.8px;">Ps</div>
<svg style="left:721.8px;top:979.3px;" width="37" height="37" viewBox="0 0 37 37"><rect width="37" height="37" rx="8.3" fill="#1a1a1c"/><circle cx="18" cy="17.500" r="13.500" fill="#8a8a90"/><circle cx="18" cy="17.500" r="11" fill="#2a8ae8"/><circle cx="18" cy="17.500" r="6.500" fill="#d8e8f8"/><circle cx="18" cy="17.500" r="4.500" fill="#1a70d0"/><path d="M22 22l9 10-4 2.500-8-10z" fill="#8a8a90"/><path d="M10 8a11 11 0 0 1 15-1c-5-1-10 0-15 1z" fill="#9cd0ff" opacity=".7"/></svg>
<svg style="left:771.2px;top:979.3px;" width="37" height="37" viewBox="0 0 37 37"><rect width="37" height="37" rx="8.3" fill="#4a7cf4"/><path d="M5.500 27A13.500 13.500 0 1 1 31.500 27L25 16.500l-2.500 4.300L18.500 14l-4 6.800L12 16.500z" fill="#fff"/></svg>
<svg style="left:817px;top:976.7px;" width="43" height="42" viewBox="0 0 43 42"><circle cx="21.500" cy="21" r="20.500" fill="#eceef2"/><circle cx="21.500" cy="21" r="20.500" fill="none" stroke="#c4c8d0" stroke-width=".8"/><path d="M8 13C14 4 30 3 37 12 30 8 18 8 8 13z" fill="#1a2a6a"/><circle cx="20" cy="24" r="13.500" fill="#16267a"/><path d="M9 18c4-5 13-7 20-3-6 0-13 3-17 9-1.500-2-2.500-4-3-6z" fill="#3a5ad0"/><circle cx="21" cy="26" r="6" fill="#0a1240"/><path d="M33 14c4 6 4 14-1 20 2-7 2-13 1-20z" fill="#fff" opacity=".9"/></svg>
<svg style="left:869.3px;top:979.5px;" width="36.6" height="36.6" viewBox="0 0 36.6 36.6"><rect width="36.6" height="36.6" rx="8.3" fill="#e8e8ec"/><rect x="3" y="3" width="30.600" height="30.600" rx="5.500" fill="#9cc4e8"/><path d="M3 22h30.600v6.100a5.500 5.500 0 0 1-5.500 5.500H8.500A5.500 5.500 0 0 1 3 28.100z" fill="#e4e8ec"/><path d="M3 20c6-2 12 1 18-1s8-1 12.600 0v5H3z" fill="#5a8ab8"/><rect x="19" y="18" width="14" height="16" rx="2" fill="#f0f0f0" stroke="#888" stroke-width=".6"/><rect x="20" y="17" width="12" height="5.500" rx="2" fill="#222"/><path d="M22 27h8M22 30h6" stroke="#555" stroke-width=".8"/></svg>
<svg style="left:918px;top:979.5px;" width="36.5" height="36.5" viewBox="0 0 36.5 36.5"><rect width="36.5" height="36.5" rx="8.3" fill="#2b2b2d"/><path d="M19.500 7.500L8 16.500h6.500L5.500 23.500c-1 1 0 2.500 1.300 1.800L14 20" fill="none" stroke="#ea7a1c" stroke-width="3" stroke-linecap="round" stroke-linejoin="round"/><ellipse cx="21.500" cy="20.500" rx="9.500" ry="8" fill="#ea7a1c"/><ellipse cx="21.800" cy="20.300" rx="5.600" ry="4.800" fill="#fff"/><ellipse cx="22" cy="20.300" rx="3.300" ry="3" fill="#2a5a9c"/></svg>
<svg style="left:965.5px;top:977.5px;" width="40" height="41" viewBox="0 0 40 41"><path d="M4 37V15a12.500 12.500 0 1 1 21.500 8.700L35.500 34l-5 4.500L21 28.300A12.500 12.500 0 0 1 11 27v10z" fill="#fff"/><path d="M6 35.500V15a10.500 10.500 0 1 1 4 8.300V35.500z" fill="#111"/><circle cx="16.500" cy="15" r="5.800" fill="#fff"/><path d="M22 24.500l3-2.600 8 8.300-3 2.700z" fill="#fff"/></svg>
<div class="a" style="left:1021px;top:977.5px;width:1px;height:42.5px;background:#7c6aa4;"></div>
<svg style="left:1034px;top:979px;" width="45" height="42" viewBox="0 0 45 42"><path d="M24 4L8 15h8L3 24c-1.500 1.500 0 4 2 3l10-5" fill="none" stroke="#f08a1c" stroke-width="5.500" stroke-linecap="round" stroke-linejoin="round"/><ellipse cx="27" cy="24" rx="16.500" ry="14.500" fill="#f49a20"/><ellipse cx="27" cy="30" rx="15" ry="9" fill="#f8b838" opacity=".8"/><circle cx="28" cy="21.500" r="9" fill="#f4f4f8"/><circle cx="28" cy="21.500" r="6.500" fill="#3a8ae0"/><path d="M28 17.500l1.200 2.800 2.800 1.200-2.800 1.200-1.200 2.800-1.200-2.800-2.800-1.200 2.800-1.200z" fill="#fff"/></svg>
<svg style="left:1084.7px;top:976px;" width="40.5" height="43" viewBox="0 0 40.5 43"><rect width="40.500" height="43" fill="#0a0a0a"/><rect y="4" width="40.500" height="35" fill="#141210"/><rect x="4" y="6" width="15" height="33" rx="3" fill="#d8c4a4"/><rect x="6" y="9" width="9" height="10" rx="2.500" fill="#b8a484"/><circle cx="8.500" cy="11.500" r="2" fill="#222"/><circle cx="8.500" cy="16.500" r="2" fill="#222"/><circle cx="12.800" cy="14" r="2" fill="#222"/><rect x="20" y="6" width="14" height="33" rx="3" fill="#e87838"/><rect x="21" y="7" width="12" height="31" rx="2.500" fill="#f0a050"/><path d="M21 25c4-6 8-8 12-12v22a2.500 2.500 0 0 1-2.500 2.500h-7A2.500 2.500 0 0 1 21 35z" fill="#d84828" opacity=".8"/><rect x="34.500" y="8" width="2.500" height="30" fill="#c89858"/><rect x="27" y="29" width="13" height="14" rx="2" fill="#111"/><path d="M30 41V33.500a3.500 3.500 0 1 1 2 3.200V41z" fill="#fff"/><circle cx="33.500" cy="33.700" r="1.500" fill="#111"/><path d="M36 37l2.500 2.700" stroke="#fff" stroke-width="1.500"/></svg>
<svg style="left:1132.5px;top:985px;" width="44" height="34" viewBox="0 0 44 34"><rect width="43.500" height="25.500" fill="#f4f4f6"/><rect width="43.500" height="3" fill="#dcdce0"/><g fill="#4a9af0"><rect x="5" y="5" width="3" height="3"/><rect x="10" y="5" width="3" height="3"/><rect x="15" y="5" width="3" height="3"/><rect x="20" y="5" width="3" height="3"/><rect x="25" y="5" width="3" height="3"/><rect x="30" y="5" width="3" height="3"/><rect x="36" y="4.500" width="4.500" height="4"/></g><rect x="6" y="10" width="3" height="3" fill="#111"/><rect x="27.500" y="18" width="13" height="14" rx="3" fill="#3aa0f2"/><path d="M34.500 18h3a3 3 0 0 1 3 3v8a3 3 0 0 1-3 3h-3.800c-.6-2-.6-3.500-.5-5h2c-.2-3-.5-6-.7-9z" fill="#e8ecf2"/></svg>
<svg style="left:1186px;top:976.5px;" width="35" height="42" viewBox="0 0 35 42"><path d="M2.500 8h30l-3.300 30.500a3 3 0 0 1-3 2.500H8.800a3 3 0 0 1-3-2.500z" fill="#d8d4e0" opacity=".82"/><ellipse cx="17.500" cy="8" rx="15" ry="3.800" fill="#c4c0cc"/><path d="M5 6l4-4 4 2 4-3 5 3 4-1 4 4c-5 3-20 3-25-1z" fill="#e8e4ec"/><path d="M8 4l2 1M14 3l1 2M21 3l-1 2M26 5l-2 1" stroke="#7a6a5a" stroke-width="1"/><path d="M6.500 12l2.800 26M28.500 12l-2.800 26" stroke="#f4f0f8" stroke-width="1" opacity=".6"/></svg>
<div class="a" style="left:395.3px;top:1024.3px;width:2.6px;height:2.6px;background:#1c1428;border-radius:1.3px;"></div>
<div class="a" style="left:591.4px;top:1024.3px;width:2.6px;height:2.6px;background:#1c1428;border-radius:1.3px;"></div>
<div class="a" style="left:640.2px;top:1024.3px;width:2.6px;height:2.6px;background:#1c1428;border-radius:1.3px;"></div>
<div class="a" style="left:689.3px;top:1024.3px;width:2.6px;height:2.6px;background:#1c1428;border-radius:1.3px;"></div>
<div class="a" style="left:738.4px;top:1024.3px;width:2.6px;height:2.6px;background:#1c1428;border-radius:1.3px;"></div>
<div class="a" style="left:787.7px;top:1024.3px;width:2.6px;height:2.6px;background:#1c1428;border-radius:1.3px;"></div>
<div class="a" style="left:836.5px;top:1024.3px;width:2.6px;height:2.6px;background:#1c1428;border-radius:1.3px;"></div>
<div class="a" style="left:885.7px;top:1024.3px;width:2.6px;height:2.6px;background:#1c1428;border-radius:1.3px;"></div>
<div class="a" style="left:934.9px;top:1024.3px;width:2.6px;height:2.6px;background:#1c1428;border-radius:1.3px;"></div>
<div class="a" style="left:984.1px;top:1024.3px;width:2.6px;height:2.6px;background:#1c1428;border-radius:1.3px;"></div>
</div></body></html>
